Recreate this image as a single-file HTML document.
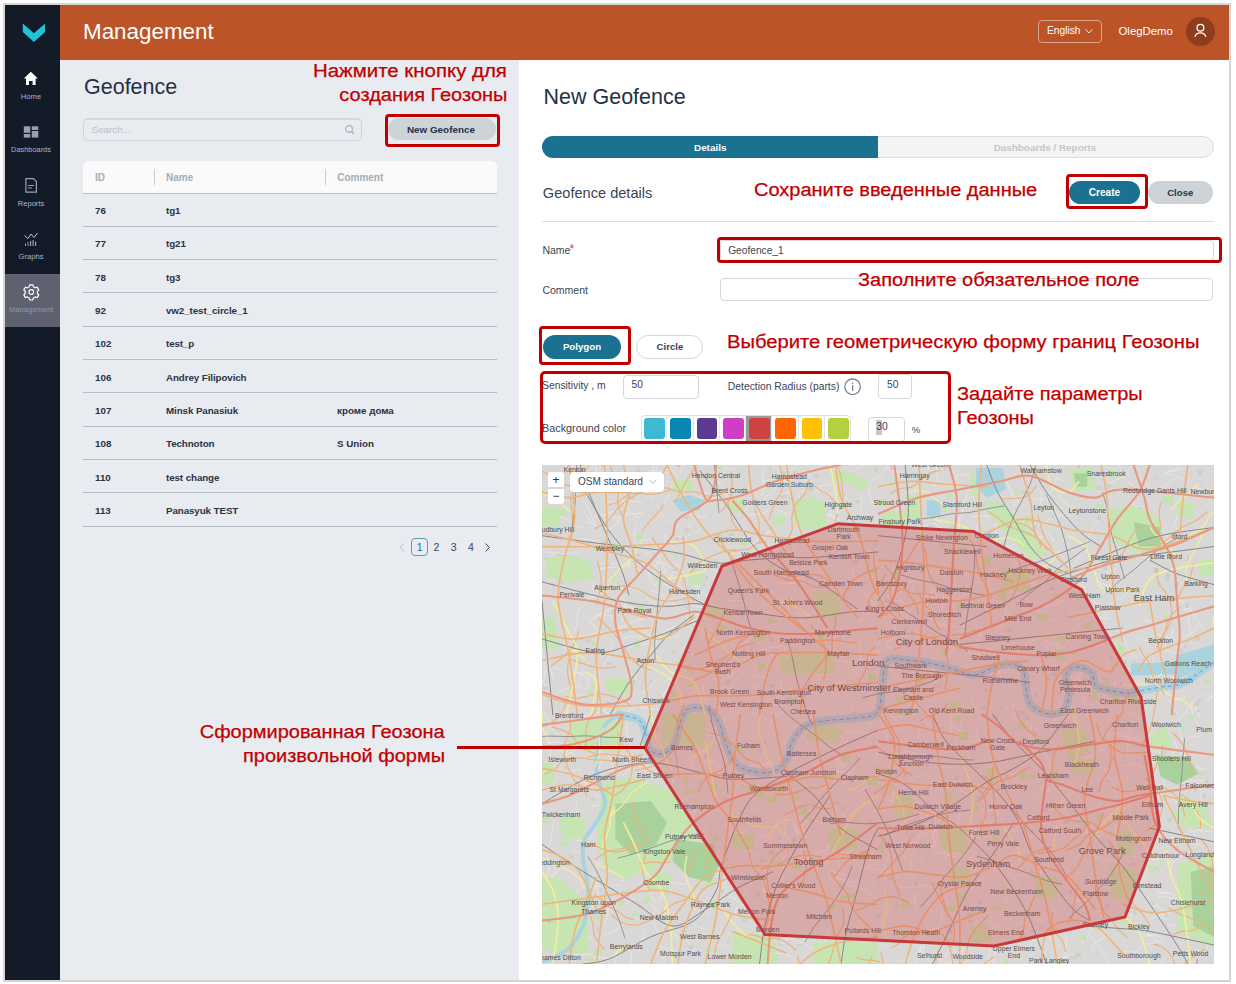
<!DOCTYPE html>
<html><head><meta charset="utf-8">
<style>
*{margin:0;padding:0;box-sizing:border-box}
html,body{width:1236px;height:984px;overflow:hidden;background:#fff;font-family:"Liberation Sans",sans-serif}
.a{position:absolute;white-space:nowrap}
[style*="c00000;font-weight:normal"]{-webkit-text-stroke:0.25px #c00000}
.sx{transform:scaleX(1.11);transform-origin:0 0}
.sxr{transform:scaleX(1.11);transform-origin:100% 0}
</style></head><body>
<div class="a" style="left:3.0px;top:3.0px;width:1228.0px;height:979.0px;border:2px solid #d5d5d5"></div>
<div class="a" style="left:5.0px;top:5.0px;width:55.0px;height:975.0px;background:#131a28"></div>
<div class="a" style="left:60.0px;top:5.0px;width:1169.0px;height:55.0px;background:#bc5428"></div>
<div class="a" style="left:60.0px;top:60.0px;width:459.0px;height:920.0px;background:#e8ecf0"></div>
<div class="a" style="left:519.0px;top:60.0px;width:710.0px;height:920.0px;background:#fff"></div>
<svg class="a" style="left:0;top:0" width="60" height="60"><polygon points="22.8,23.6 33.9,33.3 45.1,23.6 45.1,32.1 33.9,41.9 22.8,32.1" fill="#1dc6d6"/></svg>
<div class="a" style="left:5.0px;top:274.0px;width:55.0px;height:53.0px;background:#5f6170"></div>
<svg class="a" style="left:0;top:60px" width="60" height="270">
<path d="M30.8,11.8 L37.8,18.6 L35.6,18.6 L35.6,25 L32.6,25 L32.6,21 L29,21 L29,25 L26,25 L26,18.6 L23.8,18.6 Z" fill="#fff"/>
<g fill="#9c9eae"><rect x="23.8" y="66.3" width="6.5" height="6.5"/><rect x="31.8" y="66.3" width="6.5" height="3.7"/><rect x="23.8" y="74" width="6.5" height="3.6"/><rect x="31.8" y="71" width="6.5" height="6.6"/></g>
<g fill="none" stroke="#9c9eae" stroke-width="1.2"><path d="M25.9,118.7 L33.5,118.7 L36.4,121.6 L36.4,132.2 L25.9,132.2 Z"/><path d="M28,125.5 H34 M28,128 H32"/></g>
<g fill="none" stroke="#c0c4d0" stroke-width="1"><path d="M24.5,175.5 L28,178.5 L31,174 L34,177.5 L37.5,173"/></g>
<g fill="#9c9eae"><rect x="25" y="183.5" width="1" height="2.5"/><rect x="27.5" y="182" width="1" height="4"/><rect x="30" y="181" width="1.2" height="5"/><rect x="32.5" y="180" width="1.2" height="6"/><rect x="35" y="181.5" width="1.2" height="4.5"/></g>
<g transform="translate(31.3,232)"><path d="M-1.5,-7.2 h3 l0.6,2 a5.5,5.5 0 0 1 1.9,1.1 l2,-0.6 l1.5,2.6 l-1.5,1.4 a5.5,5.5 0 0 1 0,2.2 l1.5,1.4 l-1.5,2.6 l-2,-0.6 a5.5,5.5 0 0 1 -1.9,1.1 l-0.6,2 h-3 l-0.6,-2 a5.5,5.5 0 0 1 -1.9,-1.1 l-2,0.6 l-1.5,-2.6 l1.5,-1.4 a5.5,5.5 0 0 1 0,-2.2 l-1.5,-1.4 l1.5,-2.6 l2,0.6 a5.5,5.5 0 0 1 1.9,-1.1 Z" fill="none" stroke="#fff" stroke-width="1.2"/><circle r="2.3" fill="none" stroke="#fff" stroke-width="1.2"/></g>
</svg>
<div class="a" style="left:-19.0px;width:100px;text-align:center;top:92.5px;font-size:7.6px;line-height:7.6px;color:#a9b9c9;font-weight:normal;">Home</div>
<div class="a" style="left:-19.0px;width:100px;text-align:center;top:146.1px;font-size:7.4px;line-height:7.4px;color:#a9b9c9;font-weight:normal;">Dashboards</div>
<div class="a" style="left:-19.0px;width:100px;text-align:center;top:199.6px;font-size:7.6px;line-height:7.6px;color:#a9b9c9;font-weight:normal;">Reports</div>
<div class="a" style="left:-19.0px;width:100px;text-align:center;top:252.7px;font-size:7.6px;line-height:7.6px;color:#a9b9c9;font-weight:normal;">Graphs</div>
<div class="a" style="left:-18.8px;width:100px;text-align:center;top:306.4px;font-size:7.6px;line-height:7.6px;color:#8b9aa9;font-weight:normal;">Management</div>
<div class="a" style="left:83.0px;top:20.5px;font-size:22.4px;line-height:22.4px;color:#fff;font-weight:normal;">Management</div>
<div class="a" style="left:1038.0px;top:20.0px;width:64.0px;height:23.0px;border:1px solid #dca58c;border-radius:4px"></div>
<div class="a" style="left:1047.0px;top:26.3px;font-size:10.2px;line-height:10.2px;color:#fff;font-weight:normal;">English</div>
<svg class="a" style="left:1084px;top:28px" width="10" height="7"><path d="M1.5,1.3 L5,5 L8.5,1.3" fill="none" stroke="#f4ddd2" stroke-width="1"/></svg>
<div class="a" style="left:1118.5px;top:25.7px;font-size:11.4px;line-height:11.4px;color:#fff;font-weight:normal;">OlegDemo</div>
<div class="a" style="left:1186.0px;top:17.3px;width:28.6px;height:28.6px;border-radius:50%;background:#8e3d1d"></div>
<svg class="a" style="left:1186px;top:17px" width="29" height="29"><circle cx="14.4" cy="10.8" r="3.4" fill="none" stroke="#fff" stroke-width="1.3"/><path d="M8.8,19.8 A6,6 0 0 1 20,19.8" fill="none" stroke="#fff" stroke-width="1.3"/></svg>
<div class="a" style="left:84.0px;top:76.6px;font-size:21.5px;line-height:21.5px;color:#262f45;font-weight:normal;">Geofence</div>
<div class="a" style="right:728.7px;top:61.5px;font-size:18px;line-height:18px;color:#c00000;font-weight:normal;transform:scaleX(1.135);transform-origin:100% 0">Нажмите кнопку для</div>
<div class="a" style="right:728.7px;top:86.2px;font-size:18px;line-height:18px;color:#c00000;font-weight:normal;transform:scaleX(1.11);transform-origin:100% 0">создания Геозоны</div>
<div class="a" style="left:83.0px;top:117.8px;width:279.3px;height:22.8px;border:1px solid #ced4d9;border-top:2px solid #d3d8dd;border-radius:5px"></div>
<div class="a" style="left:91.6px;top:124.7px;font-size:9.8px;line-height:9.8px;color:#b9c1c8;font-weight:normal;">Search...</div>
<svg class="a" style="left:343px;top:123px" width="14" height="13"><circle cx="6" cy="6" r="3.4" fill="none" stroke="#aab2ba" stroke-width="1.2"/><path d="M8.5,8.5 L11,11" stroke="#aab2ba" stroke-width="1.4"/></svg>
<div class="a" style="left:388.4px;top:117.7px;width:107.6px;height:22.7px;background:#cdd3d7;border-radius:12px"></div>
<div class="a" style="left:406.9px;top:125.0px;font-size:9.9px;line-height:9.9px;color:#262f45;font-weight:bold;">New Geofence</div>
<div class="a" style="left:385.3px;top:114.3px;width:114.6px;height:32.6px;border:3px solid #c00000;border-radius:4px"></div>
<div class="a" style="left:83.0px;top:160.6px;width:413.5px;height:33.4px;background:#fafafa;border-radius:6px 6px 0 0;border-bottom:1px solid #b3bec6"></div>
<div class="a" style="left:95.0px;top:172.5px;font-size:10px;line-height:10px;color:#a3adb7;font-weight:bold;">ID</div>
<div class="a" style="left:166.0px;top:172.5px;font-size:10px;line-height:10px;color:#a3adb7;font-weight:bold;">Name</div>
<div class="a" style="left:337.2px;top:172.5px;font-size:10px;line-height:10px;color:#a3adb7;font-weight:bold;">Comment</div>
<div class="a" style="left:154.2px;top:169.4px;width:1.2px;height:15.2px;background:#c6ced4"></div>
<div class="a" style="left:325.0px;top:169.4px;width:1.2px;height:15.2px;background:#c6ced4"></div>
<div class="a" style="left:83.0px;top:226.0px;width:413.5px;height:1.0px;background:#b3bec6"></div>
<div class="a" style="left:95.0px;top:205.9px;font-size:9.8px;line-height:9.8px;color:#2b3345;font-weight:bold;">76</div>
<div class="a" style="left:166.0px;top:205.9px;font-size:9.8px;line-height:9.8px;color:#2b3345;font-weight:bold;letter-spacing:-0.1px">tg1</div>
<div class="a" style="left:83.0px;top:259.0px;width:413.5px;height:1.0px;background:#b3bec6"></div>
<div class="a" style="left:95.0px;top:239.2px;font-size:9.8px;line-height:9.8px;color:#2b3345;font-weight:bold;">77</div>
<div class="a" style="left:166.0px;top:239.2px;font-size:9.8px;line-height:9.8px;color:#2b3345;font-weight:bold;letter-spacing:-0.1px">tg21</div>
<div class="a" style="left:83.0px;top:292.0px;width:413.5px;height:1.0px;background:#b3bec6"></div>
<div class="a" style="left:95.0px;top:272.5px;font-size:9.8px;line-height:9.8px;color:#2b3345;font-weight:bold;">78</div>
<div class="a" style="left:166.0px;top:272.5px;font-size:9.8px;line-height:9.8px;color:#2b3345;font-weight:bold;letter-spacing:-0.1px">tg3</div>
<div class="a" style="left:83.0px;top:326.0px;width:413.5px;height:1.0px;background:#b3bec6"></div>
<div class="a" style="left:95.0px;top:305.9px;font-size:9.8px;line-height:9.8px;color:#2b3345;font-weight:bold;">92</div>
<div class="a" style="left:166.0px;top:305.9px;font-size:9.8px;line-height:9.8px;color:#2b3345;font-weight:bold;letter-spacing:-0.1px">vw2_test_circle_1</div>
<div class="a" style="left:83.0px;top:359.0px;width:413.5px;height:1.0px;background:#b3bec6"></div>
<div class="a" style="left:95.0px;top:339.2px;font-size:9.8px;line-height:9.8px;color:#2b3345;font-weight:bold;">102</div>
<div class="a" style="left:166.0px;top:339.2px;font-size:9.8px;line-height:9.8px;color:#2b3345;font-weight:bold;letter-spacing:-0.1px">test_p</div>
<div class="a" style="left:83.0px;top:392.0px;width:413.5px;height:1.0px;background:#b3bec6"></div>
<div class="a" style="left:95.0px;top:372.5px;font-size:9.8px;line-height:9.8px;color:#2b3345;font-weight:bold;">106</div>
<div class="a" style="left:166.0px;top:372.5px;font-size:9.8px;line-height:9.8px;color:#2b3345;font-weight:bold;letter-spacing:-0.1px">Andrey Filipovich</div>
<div class="a" style="left:83.0px;top:426.0px;width:413.5px;height:1.0px;background:#b3bec6"></div>
<div class="a" style="left:95.0px;top:405.8px;font-size:9.8px;line-height:9.8px;color:#2b3345;font-weight:bold;">107</div>
<div class="a" style="left:166.0px;top:405.8px;font-size:9.8px;line-height:9.8px;color:#2b3345;font-weight:bold;letter-spacing:-0.1px">Minsk Panasiuk</div>
<div class="a" style="left:337.0px;top:405.8px;font-size:9.8px;line-height:9.8px;color:#2b3345;font-weight:bold;">кроме дома</div>
<div class="a" style="left:83.0px;top:459.0px;width:413.5px;height:1.0px;background:#b3bec6"></div>
<div class="a" style="left:95.0px;top:439.2px;font-size:9.8px;line-height:9.8px;color:#2b3345;font-weight:bold;">108</div>
<div class="a" style="left:166.0px;top:439.2px;font-size:9.8px;line-height:9.8px;color:#2b3345;font-weight:bold;letter-spacing:-0.1px">Technoton</div>
<div class="a" style="left:337.0px;top:439.2px;font-size:9.8px;line-height:9.8px;color:#2b3345;font-weight:bold;">S Union</div>
<div class="a" style="left:83.0px;top:492.0px;width:413.5px;height:1.0px;background:#b3bec6"></div>
<div class="a" style="left:95.0px;top:472.5px;font-size:9.8px;line-height:9.8px;color:#2b3345;font-weight:bold;">110</div>
<div class="a" style="left:166.0px;top:472.5px;font-size:9.8px;line-height:9.8px;color:#2b3345;font-weight:bold;letter-spacing:-0.1px">test change</div>
<div class="a" style="left:83.0px;top:526.0px;width:413.5px;height:1.0px;background:#b3bec6"></div>
<div class="a" style="left:95.0px;top:505.8px;font-size:9.8px;line-height:9.8px;color:#2b3345;font-weight:bold;">113</div>
<div class="a" style="left:166.0px;top:505.8px;font-size:9.8px;line-height:9.8px;color:#2b3345;font-weight:bold;letter-spacing:-0.1px">Panasyuk TEST</div>
<svg class="a" style="left:398px;top:543px" width="8" height="9"><path d="M6,0.6 L2,4.5 L6,8.4" fill="none" stroke="#b7bfc7" stroke-width="1"/></svg>
<div class="a" style="left:411.2px;top:538.2px;width:16.9px;height:17.4px;border:1.3px solid #5f9db3;border-radius:4px"></div>
<div class="a" style="left:369.6px;width:100px;text-align:center;top:541.6px;font-size:10.5px;line-height:10.5px;color:#1b7190;font-weight:normal;">1</div>
<div class="a" style="left:386.5px;width:100px;text-align:center;top:541.6px;font-size:10.5px;line-height:10.5px;color:#3a4455;font-weight:normal;">2</div>
<div class="a" style="left:403.6px;width:100px;text-align:center;top:541.6px;font-size:10.5px;line-height:10.5px;color:#3a4455;font-weight:normal;">3</div>
<div class="a" style="left:420.8px;width:100px;text-align:center;top:541.6px;font-size:10.5px;line-height:10.5px;color:#3a4455;font-weight:normal;">4</div>
<svg class="a" style="left:484px;top:543px" width="8" height="9"><path d="M1.5,0.6 L5.5,4.5 L1.5,8.4" fill="none" stroke="#3a4455" stroke-width="1"/></svg>
<div class="a" style="right:791.0px;top:723.1px;font-size:18px;line-height:18px;color:#c00000;font-weight:normal;transform:scaleX(1.11);transform-origin:100% 0">Сформированная Геозона</div>
<div class="a" style="right:791.0px;top:747.1px;font-size:18px;line-height:18px;color:#c00000;font-weight:normal;transform:scaleX(1.11);transform-origin:100% 0">произвольной формы</div>
<div class="a" style="left:543.5px;top:87.2px;font-size:21.5px;line-height:21.5px;color:#262f45;font-weight:normal;">New Geofence</div>
<div class="a" style="left:542.0px;top:135.5px;width:671.5px;height:22.8px;background:#f4f4f4;border:1px solid #d9dde0;border-radius:12px"></div>
<div class="a" style="left:542.0px;top:135.5px;width:336.0px;height:22.8px;background:#1b7190;border-radius:12px 0 0 12px"></div>
<div class="a" style="left:694.0px;top:142.6px;font-size:9.9px;line-height:9.9px;color:#fff;font-weight:bold;">Details</div>
<div class="a" style="left:993.7px;top:142.6px;font-size:9.9px;line-height:9.9px;color:#c3c7cb;font-weight:bold;">Dashboards / Reports</div>
<div class="a" style="left:542.8px;top:185.8px;font-size:14.6px;line-height:14.6px;color:#3a4455;font-weight:normal;">Geofence details</div>
<div class="a" style="left:753.6px;top:180.6px;font-size:18px;line-height:18px;color:#c00000;font-weight:normal;transform:scaleX(1.11);transform-origin:0 0">Сохраните введенные данные</div>
<div class="a" style="left:1068.8px;top:181.4px;width:71.7px;height:22.5px;background:#1b7190;border-radius:12px"></div>
<div class="a" style="left:1088.7px;top:188.3px;font-size:10.1px;line-height:10.1px;color:#fff;font-weight:bold;">Create</div>
<div class="a" style="left:1148.0px;top:181.4px;width:65.4px;height:22.5px;background:#cdd3d7;border-radius:12px"></div>
<div class="a" style="left:1167.2px;top:187.7px;font-size:9.6px;line-height:9.6px;color:#2a3346;font-weight:bold;">Close</div>
<div class="a" style="left:1066.2px;top:174.1px;width:81.6px;height:35.4px;border:3px solid #c00000;border-radius:4px"></div>
<div class="a" style="left:542.0px;top:220.5px;width:671.5px;height:1.2px;background:#dadee1"></div>
<div class="a" style="left:542.4px;top:245.3px;font-size:10.5px;line-height:10.5px;color:#3a4455;font-weight:normal;">Name</div>
<div class="a" style="left:569.5px;top:243.3px;font-size:12px;line-height:12px;color:#e04040;font-weight:normal;">*</div>
<div class="a" style="left:720.0px;top:239.5px;width:493.5px;height:21.5px;border:1px solid #d3d7db;border-radius:4px"></div>
<div class="a" style="left:728.2px;top:245.9px;font-size:10.2px;line-height:10.2px;color:#3a4455;font-weight:normal;">Geofence_1</div>
<div class="a" style="left:717.1px;top:236.7px;width:504.9px;height:26.5px;border:3px solid #c00000;border-radius:4px"></div>
<div class="a" style="left:542.4px;top:285.3px;font-size:10.5px;line-height:10.5px;color:#3a4455;font-weight:normal;">Comment</div>
<div class="a" style="left:720.1px;top:278.4px;width:493.4px;height:22.4px;border:1px solid #d3d7db;border-radius:4px"></div>
<div class="a" style="left:857.7px;top:271.1px;font-size:18px;line-height:18px;color:#c00000;font-weight:normal;transform:scaleX(1.11);transform-origin:0 0">Заполните обязательное поле</div>
<div class="a" style="left:542.6px;top:335.3px;width:78.6px;height:23.3px;background:#1b7190;border-radius:12px"></div>
<div class="a" style="left:562.9px;top:342.1px;font-size:9.7px;line-height:9.7px;color:#fff;font-weight:bold;">Polygon</div>
<div class="a" style="left:539.2px;top:326.1px;width:92.2px;height:39.3px;border:3px solid #c00000;border-radius:4px"></div>
<div class="a" style="left:635.5px;top:335.0px;width:67.2px;height:23.6px;background:#fff;border:1px solid #d3d7db;border-radius:12px"></div>
<div class="a" style="left:656.6px;top:342.1px;font-size:9.6px;line-height:9.6px;color:#3a4455;font-weight:bold;">Circle</div>
<div class="a" style="left:726.6px;top:333.0px;font-size:18px;line-height:18px;color:#c00000;font-weight:normal;transform:scaleX(1.122);transform-origin:0 0">Выберите геометрическую форму границ Геозоны</div>
<div class="a" style="left:542.1px;top:381.4px;font-size:10.3px;line-height:10.3px;color:#3a4455;font-weight:normal;">Sensitivity , m</div>
<div class="a" style="left:622.6px;top:374.5px;width:76.0px;height:24.7px;border:1px solid #d3d7db;border-radius:4px"></div>
<div class="a" style="left:631.5px;top:380.2px;font-size:10.3px;line-height:10.3px;color:#3a4455;font-weight:normal;">50</div>
<div class="a" style="left:727.8px;top:382.1px;font-size:10.35px;line-height:10.35px;color:#3a4455;font-weight:normal;">Detection Radius (parts)</div>
<svg class="a" style="left:843px;top:377px" width="20" height="20"><circle cx="9.6" cy="9.8" r="7.8" fill="none" stroke="#7d8893" stroke-width="1.3"/><rect x="9" y="5.6" width="1.3" height="1.3" fill="#7d8893"/><rect x="9" y="8" width="1.3" height="6" fill="#7d8893"/></svg>
<div class="a" style="left:878.3px;top:374.4px;width:33.9px;height:24.6px;border:1px solid #d3d7db;border-radius:4px"></div>
<div class="a" style="left:887.0px;top:380.2px;font-size:10.3px;line-height:10.3px;color:#3a4455;font-weight:normal;">50</div>
<div class="a" style="left:542.1px;top:423.0px;font-size:10.8px;line-height:10.8px;color:#3a4455;font-weight:normal;">Background color</div>
<div class="a" style="left:640.5px;top:415.1px;width:210.0px;height:26.7px;border:1px solid #dde1e4;border-radius:4px"></div>
<div class="a" style="left:644.1px;top:418.1px;width:20.7px;height:21.0px;background:#3fb8d1;border-radius:3px"></div>
<div class="a" style="left:666.2px;top:415.5px;width:1.0px;height:26.0px;background:#e4e7ea"></div>
<div class="a" style="left:670.4px;top:418.1px;width:20.7px;height:21.0px;background:#0a86b3;border-radius:3px"></div>
<div class="a" style="left:692.5px;top:415.5px;width:1.0px;height:26.0px;background:#e4e7ea"></div>
<div class="a" style="left:696.6px;top:418.1px;width:20.7px;height:21.0px;background:#5d3a92;border-radius:3px"></div>
<div class="a" style="left:718.8px;top:415.5px;width:1.0px;height:26.0px;background:#e4e7ea"></div>
<div class="a" style="left:722.9px;top:418.1px;width:20.7px;height:21.0px;background:#d03ec6;border-radius:3px"></div>
<div class="a" style="left:745.0px;top:415.5px;width:1.0px;height:26.0px;background:#e4e7ea"></div>
<div class="a" style="left:745.5px;top:415.5px;width:26.2px;height:26.0px;background:#9a9a9a"></div>
<div class="a" style="left:749.1px;top:418.1px;width:20.7px;height:21.0px;background:#cf4242;border-radius:3px"></div>
<div class="a" style="left:771.2px;top:415.5px;width:1.0px;height:26.0px;background:#e4e7ea"></div>
<div class="a" style="left:775.4px;top:418.1px;width:20.7px;height:21.0px;background:#ff6501;border-radius:3px"></div>
<div class="a" style="left:797.5px;top:415.5px;width:1.0px;height:26.0px;background:#e4e7ea"></div>
<div class="a" style="left:801.6px;top:418.1px;width:20.7px;height:21.0px;background:#ffc001;border-radius:3px"></div>
<div class="a" style="left:823.8px;top:415.5px;width:1.0px;height:26.0px;background:#e4e7ea"></div>
<div class="a" style="left:827.9px;top:418.1px;width:20.7px;height:21.0px;background:#b4d041;border-radius:3px"></div>
<div class="a" style="left:867.6px;top:416.5px;width:37.8px;height:25.3px;border:1px solid #d3d7db;border-radius:4px"></div>
<div class="a" style="left:875.9px;top:420.0px;width:5.8px;height:15.0px;background:#c8c8c8"></div>
<div class="a" style="left:876.3px;top:422.4px;font-size:10.3px;line-height:10.3px;color:#3a4455;font-weight:normal;">30</div>
<div class="a" style="left:911.8px;top:424.9px;font-size:9.5px;line-height:9.5px;color:#3a4455;font-weight:normal;">%</div>
<div class="a" style="left:539.6px;top:370.7px;width:411.1px;height:73.2px;border:3px solid #c00000;border-radius:5px"></div>
<div class="a" style="left:957.2px;top:384.7px;font-size:18px;line-height:18px;color:#c00000;font-weight:normal;transform:scaleX(1.11);transform-origin:0 0">Задайте параметры</div>
<div class="a" style="left:957.2px;top:409.3px;font-size:18px;line-height:18px;color:#c00000;font-weight:normal;transform:scaleX(1.11);transform-origin:0 0">Геозоны</div>
<svg class="a" style="left:542px;top:465px" width="672" height="499" viewBox="0 0 672 499">
<rect width="672" height="499" fill="#d9d8d6"/>
<path d="" stroke="#f2f2f2" stroke-width="0.7" fill="none" opacity="0.8"/>
<path d="M303.0,280.5 L305.5,273.7 L309.9,267.9 L314.2,262.0M414.9,86.6 L419.0,91.6 L422.1,97.4 L427.5,101.1M669.7,490.7 L665.5,483.1 L663.9,474.5 L658.9,467.4 L651.3,463.3M598.7,301.2 L592.3,299.5 L585.6,299.5 L579.1,300.8M-6.8,34.1 L-1.1,37.0 L3.2,41.7 L6.5,47.2 L10.8,51.9M148.9,140.0 L156.4,142.2 L164.2,142.8M36.2,-1.2 L35.5,3.7 L34.8,8.7 L32.0,12.8 L29.6,17.2M40.5,316.7 L46.4,319.0 L50.7,323.8 L53.5,329.4 L58.3,333.6M160.5,42.4 L153.2,41.7 L146.1,43.3M342.1,501.4 L337.4,506.6 L330.7,509.0M-9.7,438.6 L-6.2,433.0 L-3.4,427.2 L1.3,422.7 L6.6,418.8M59.4,503.4 L66.5,504.7 L72.9,508.1M257.2,28.6 L256.8,36.5 L257.3,44.3M303.6,487.8 L310.4,494.0 L316.3,500.9 L323.5,506.7M148.0,306.8 L150.2,301.3 L150.6,295.3 L153.6,290.2 L158.2,286.5M407.6,208.7 L402.2,209.7 L396.6,209.3M261.0,208.4 L254.7,204.5 L250.8,198.1 L244.9,193.5 L238.9,189.1M442.2,309.6 L446.6,305.0 L448.3,298.8M176.3,221.3 L175.1,226.4 L171.7,230.4M53.8,61.8 L50.0,52.7 L46.9,43.3 L40.8,35.5M14.3,-0.7 L20.7,-6.3 L27.8,-11.0 L34.8,-15.7M495.5,155.5 L490.9,152.8 L487.6,148.5M500.1,355.2 L500.0,348.5 L502.4,342.1 L504.3,335.6M537.0,438.1 L533.9,434.2 L529.2,432.2 L524.2,432.3 L519.5,434.4M70.0,123.5 L62.3,127.4 L54.3,130.6 L46.5,134.4M570.2,33.5 L565.9,30.5 L561.1,28.8 L556.7,26.1 L552.3,23.4M415.2,467.7 L411.7,476.5 L407.2,484.9 L402.5,493.1M511.6,167.8 L512.7,175.2 L515.6,182.1 L517.6,189.3M546.2,381.7 L538.7,387.3 L532.3,394.2M84.2,247.7 L91.6,243.3 L97.1,236.7M301.8,132.8 L295.0,138.8 L287.1,143.6M485.7,426.9 L492.9,427.0 L499.7,429.6 L506.9,429.0 L514.1,429.9M384.8,150.4 L388.4,154.1 L393.2,155.7 L397.2,158.9 L401.9,160.9M87.5,14.4 L91.7,18.0 L95.3,22.3 L99.5,26.0 L104.8,27.7M127.1,417.6 L132.9,417.8 L138.6,419.3 L144.5,418.9M178.5,169.4 L169.9,164.8 L160.3,163.3 L151.8,158.6 L144.4,152.2M145.0,203.0 L139.3,207.0 L132.5,208.6 L127.3,213.2 L121.9,217.5M441.7,250.9 L435.8,246.4 L431.2,240.8 L428.5,234.0M434.0,362.5 L431.2,368.0 L429.5,374.0M665.9,473.8 L670.6,465.5 L671.5,456.0 L671.8,446.5M370.8,388.7 L369.2,398.2 L368.3,407.7 L371.7,416.7M358.9,346.3 L365.7,349.2 L372.4,352.1M459.1,218.4 L458.1,210.6 L456.6,202.9 L455.6,195.0M565.2,281.4 L569.7,275.4 L573.1,268.5M253.8,428.7 L259.2,425.9 L264.6,423.3 L270.3,421.1 L275.0,417.3M360.8,251.1 L354.1,252.6 L347.4,251.3 L340.7,249.6 L335.6,245.0M74.4,38.4 L69.1,37.6 L64.7,34.5M629.0,129.7 L622.9,134.0 L615.5,135.3 L608.3,133.4M353.3,46.4 L358.7,40.3 L365.5,36.0 L369.6,29.0M124.3,107.9 L121.7,102.1 L119.0,96.2 L116.4,90.4 L114.2,84.4M579.5,313.6 L573.6,312.9 L567.6,312.8 L561.6,313.4 L555.7,313.7M100.5,96.0 L104.1,102.8 L107.4,109.7 L110.0,116.9 L115.1,122.7M623.1,315.9 L620.9,325.1 L615.1,332.7 L611.7,341.6M680.9,450.6 L689.5,454.5 L698.5,457.4M290.9,478.5 L297.8,484.2 L303.5,491.1 L311.7,494.6 L320.6,495.4M462.2,463.0 L456.9,461.4 L451.5,459.8 L446.6,457.2M120.8,26.6 L121.7,21.6 L124.6,17.3M323.0,88.4 L328.3,85.4 L334.3,84.9M55.9,22.1 L55.3,14.9 L54.5,7.6 L53.7,0.3 L52.5,-6.9M405.8,-3.1 L407.9,1.7 L410.6,6.1 L413.8,10.2 L415.2,15.2M408.6,39.2 L412.8,44.3 L414.9,50.6M618.8,477.6 L611.9,473.8 L606.4,467.9 L599.6,463.6 L595.2,457.0M505.1,393.8 L502.2,398.6 L500.0,403.8 L498.1,409.2M115.6,97.3 L112.9,101.9 L112.6,107.3M236.1,321.5 L233.1,325.8 L231.1,330.6 L230.4,335.8 L230.3,341.1M115.9,29.9 L111.3,21.0 L109.2,11.2 L111.8,1.6 L109.7,-8.2M415.9,373.4 L408.9,371.4 L402.4,368.3 L395.2,368.7M168.9,133.1 L162.2,129.3 L155.7,125.0 L152.0,118.2M431.5,410.1 L431.0,402.4 L429.7,394.8M639.5,190.3 L630.8,187.0 L621.9,184.4M332.2,137.6 L328.3,144.6 L323.4,150.9 L318.1,156.8M186.2,361.9 L187.3,356.9 L189.1,352.1 L190.5,347.1M463.6,17.4 L469.6,23.7 L472.4,32.0 L478.3,38.4M616.6,212.9 L614.1,207.2 L609.5,203.0 L606.4,197.5M619.4,64.9 L624.7,70.9 L630.2,76.7M130.9,17.0 L128.9,22.4 L127.4,28.0 L125.3,33.4 L122.5,38.4M461.9,178.9 L468.9,182.1 L474.9,186.9 L481.9,189.9 L489.6,190.1M607.7,397.1 L605.3,406.0 L601.0,414.1 L595.1,421.2 L591.7,429.8M182.8,114.3 L176.9,109.7 L171.8,104.1M424.9,-5.1 L418.2,-7.7 L411.7,-10.6 L404.6,-10.5M49.8,341.0 L55.9,340.2 L61.9,338.4 L67.4,335.8 L73.0,333.1M82.3,441.3 L87.4,436.2 L93.7,432.7M297.5,377.9 L290.4,383.5 L281.5,385.1 L273.0,388.3M369.6,377.2 L367.2,383.9 L362.5,389.3M44.3,33.1 L47.2,25.8 L52.2,19.8 L53.8,12.1 L53.9,4.2M620.2,303.3 L620.4,296.8 L619.2,290.4 L615.9,284.8 L611.8,279.7M492.4,180.2 L486.0,182.0 L479.5,181.1M465.4,134.9 L464.0,143.8 L463.5,152.8 L459.2,160.7 L452.2,166.4M161.8,177.7 L159.9,173.0 L159.5,167.9 L160.3,162.8M244.8,192.5 L235.7,191.9 L227.0,188.9M599.6,136.1 L605.7,136.2 L611.7,135.1M5.5,426.8 L1.0,423.9 L-4.2,423.0 L-9.4,424.4M500.0,456.6 L495.7,453.9 L492.4,450.0M282.1,359.6 L273.9,356.2 L265.5,353.7 L256.7,352.5M660.0,339.0 L659.4,331.6 L659.6,324.1 L656.6,317.3M513.9,501.6 L519.7,494.4 L527.9,489.9 L537.1,489.6M433.1,261.9 L435.3,266.4 L435.5,271.5 L437.0,276.3 L440.0,280.4M429.5,345.0 L424.9,348.8 L419.0,350.1 L414.2,353.7M203.4,49.6 L209.2,49.0 L214.9,49.9 L220.4,48.1 L225.8,46.2M543.9,152.2 L546.6,157.5 L548.0,163.2M401.6,106.2 L392.3,108.1 L383.1,106.0M423.7,478.9 L420.5,485.5 L414.8,490.3 L410.0,496.0 L405.0,501.3M652.3,240.5 L656.0,246.4 L657.9,253.1M665.4,402.5 L671.7,408.8 L675.1,417.1 L675.3,426.0M616.4,223.6 L608.3,220.9 L599.7,221.0M212.7,124.6 L213.1,119.0 L213.5,113.4 L211.5,108.1 L209.8,102.7M113.4,96.0 L122.1,98.6 L130.1,103.0M57.2,239.2 L57.4,233.8 L57.6,228.4 L55.3,223.5M119.9,90.2 L120.9,84.8 L122.2,79.5 L123.5,74.3 L123.1,68.8M565.8,151.6 L561.1,146.3 L557.4,140.4 L551.6,136.5M41.4,62.9 L34.7,61.4 L28.7,57.7 L23.4,53.2 L16.6,51.7M251.0,358.5 L254.6,363.9 L256.0,370.2M574.4,363.3 L572.5,357.8 L572.0,352.1 L574.1,346.7 L577.5,342.1M374.5,35.1 L372.8,29.4 L373.7,23.4M379.5,365.6 L376.4,372.2 L372.6,378.4 L371.3,385.5M426.2,83.0 L430.4,77.4 L432.0,70.6M146.8,71.5 L146.6,64.4 L148.7,57.5M631.4,62.2 L634.3,53.8 L635.7,45.1M275.2,-2.0 L269.9,4.1 L266.4,11.3 L259.8,16.1M356.7,125.3 L351.0,121.8 L344.9,119.0M342.5,399.3 L344.9,406.9 L344.2,415.0M369.4,173.0 L361.9,171.8 L355.7,167.5 L352.2,160.8 L350.2,153.5M637.6,284.5 L643.2,290.4 L650.0,294.8M388.9,351.8 L391.7,347.1 L396.0,343.8 L400.2,340.2M495.0,113.8 L488.0,110.6 L480.5,109.0 L474.2,104.5 L470.7,97.7M555.7,302.2 L565.2,304.2 L574.8,304.9M514.8,178.4 L508.9,179.2 L504.0,182.5M114.6,502.3 L116.7,497.0 L120.8,493.0 L125.3,489.5 L130.2,486.6M518.2,72.3 L523.4,77.5 L528.2,83.0 L534.6,86.7M349.7,126.8 L357.5,132.4 L364.0,139.7 L368.1,148.4 L373.1,156.7M334.3,43.2 L330.3,37.4 L327.9,30.8 L327.2,23.7M326.2,506.2 L319.5,508.6 L312.5,508.2 L305.5,507.7 L298.5,506.9M289.1,459.3 L285.3,468.1 L282.2,477.1 L280.2,486.4M212.8,399.8 L209.9,408.7 L209.4,418.1 L205.6,426.7 L198.3,432.5M319.2,44.7 L318.1,37.0 L319.8,29.5M681.5,369.3 L675.1,366.9 L668.2,366.8 L661.5,365.7 L654.7,365.1M74.9,27.2 L81.0,33.8 L83.7,42.3 L90.2,48.5 L98.0,52.9M197.1,158.6 L190.2,160.6 L184.4,164.9M469.1,109.8 L472.5,106.0 L476.0,102.1 L480.7,100.1M666.3,235.3 L670.9,231.4 L673.4,226.0M208.6,435.9 L206.0,431.5 L203.8,427.0 L201.6,422.4M153.5,482.8 L148.3,489.2 L140.9,492.8M179.5,208.2 L186.2,208.2 L192.9,207.7M107.2,437.1 L112.4,443.9 L119.2,449.1M449.9,400.3 L441.1,402.3 L432.3,404.3 L423.6,402.0M609.7,83.7 L604.0,80.8 L600.3,75.6M294.7,264.2 L304.2,265.4 L313.6,267.0 L323.1,267.9 L332.5,269.4M103.8,503.0 L102.4,509.0 L102.9,515.2M610.7,502.6 L618.1,499.2 L622.9,492.6M607.0,21.3 L601.4,15.8 L596.7,9.6M531.8,258.2 L529.6,249.3 L529.6,240.2 L530.0,231.1 L531.1,222.0M523.7,48.2 L517.5,48.8 L511.5,47.7 L506.0,44.9M153.3,243.9 L144.8,240.2 L135.6,239.1M661.7,17.3 L668.3,23.9 L677.3,26.6 L686.2,29.4M290.8,219.2 L299.9,217.5 L308.0,212.9 L316.6,209.5M391.0,364.8 L391.4,370.5 L392.9,376.1 L393.7,381.8 L394.4,387.4M173.2,295.5 L165.0,296.0 L157.1,298.5M333.8,332.0 L342.4,334.6 L351.2,336.0 L360.1,334.9 L368.5,338.0M19.1,244.1 L25.6,251.6 L30.0,260.5 L38.0,266.5 L47.1,270.3M605.9,63.5 L598.4,61.5 L592.6,56.3 L587.8,50.2M486.2,496.6 L485.7,502.7 L486.9,508.8 L488.3,514.8 L487.0,520.8M241.9,164.9 L244.7,170.3 L244.6,176.4 L243.1,182.3 L241.1,188.1M621.1,449.0 L614.2,451.4 L607.6,454.6M530.7,101.8 L534.1,96.6 L537.4,91.3 L540.1,85.7M401.0,384.2 L408.1,385.2 L414.5,388.6 L421.6,390.1M255.0,27.8 L261.3,26.5 L267.5,25.3 L273.9,25.7 L280.3,26.1M382.6,327.1 L380.4,333.0 L376.0,337.5M238.9,387.4 L241.9,396.1 L241.7,405.3 L242.1,414.5 L239.2,423.2M253.9,123.0 L250.4,130.6 L247.0,138.2 L246.0,146.5 L245.0,154.8M78.3,98.2 L71.2,98.9 L64.2,98.0 L57.1,98.9M492.0,335.7 L497.1,327.8 L501.7,319.6M84.6,258.2 L83.9,264.3 L85.0,270.4 L88.6,275.3M7.0,317.2 L8.5,312.4 L10.8,307.9 L11.0,302.8 L13.0,298.1M376.2,173.4 L380.7,164.7 L386.3,156.7M52.2,212.0 L45.2,209.3 L37.9,208.2 L30.9,205.6M143.4,470.3 L146.0,477.2 L150.2,483.2M54.4,167.4 L46.0,170.8 L37.0,171.0 L28.2,173.0M622.9,458.4 L629.4,460.4 L636.1,459.4M332.9,294.1 L336.5,286.2 L336.1,277.7 L334.3,269.3M248.3,144.3 L241.6,137.7 L233.9,132.2 L228.9,124.2 L220.9,119.3M479.4,102.4 L473.1,97.4 L466.3,92.9M181.1,420.6 L184.7,414.6 L185.8,407.8 L187.1,401.0M203.6,177.0 L207.0,181.7 L209.5,186.8M152.3,-9.5 L162.2,-8.8 L171.2,-4.8 L178.9,1.4 L188.5,4.0M559.8,448.9 L556.3,458.1 L549.5,465.2 L544.2,473.5 L537.2,480.5M471.2,346.3 L475.2,354.5 L479.2,362.7M380.2,181.8 L376.8,175.8 L374.3,169.5 L370.9,163.5M478.7,466.1 L484.3,466.0 L489.4,463.6 L494.9,462.3 L499.5,459.1M302.5,390.7 L298.4,387.5 L294.3,384.3 L289.7,381.8M265.0,373.8 L261.9,367.6 L260.2,360.8 L257.3,354.5 L253.4,348.7M515.4,427.4 L507.9,429.6 L500.2,431.0M565.1,405.8 L559.9,402.7 L555.4,398.8M663.9,234.9 L672.1,229.8 L681.2,226.3 L689.9,222.1 L699.2,219.1M264.5,474.4 L261.5,470.1 L256.9,467.6M187.9,369.5 L194.7,367.6 L201.7,368.3M108.5,25.0 L111.5,16.5 L113.5,7.7 L116.6,-0.8M519.6,499.1 L523.1,506.7 L523.6,515.1 L524.6,523.4M567.0,278.7 L560.3,285.2 L551.6,288.8 L543.9,294.2M383.6,132.1 L384.6,138.4 L386.5,144.5 L389.7,150.0M25.5,23.4 L33.7,22.3 L41.1,18.3 L49.2,16.5M676.2,202.0 L678.0,195.2 L676.6,188.2M371.0,330.9 L374.5,336.1 L379.2,340.3 L382.4,345.6 L385.2,351.2M641.0,14.4 L632.1,10.4 L622.6,8.6M6.6,278.4 L14.0,276.7 L21.3,278.5M-2.4,263.6 L-4.1,254.9 L-3.1,245.9M562.7,388.4 L553.3,386.3 L543.7,385.0M612.1,313.7 L614.1,321.3 L617.1,328.6M444.6,410.8 L437.5,414.7 L432.7,421.3 L426.9,427.0M401.2,127.3 L401.2,136.1 L400.8,144.7M460.7,82.0 L458.2,87.2 L458.3,93.0M266.6,17.1 L261.5,12.9 L255.4,10.4M599.3,156.5 L604.8,155.7 L610.0,157.4 L615.6,157.6 L621.1,157.2M478.6,82.3 L473.4,83.7 L468.1,83.1 L463.2,81.1M353.4,-4.8 L346.7,0.0 L341.7,6.5 L336.0,12.3 L328.5,15.5M582.6,316.3 L589.1,308.8 L597.1,303.1 L606.3,299.6 L615.2,295.4M313.3,424.2 L308.6,420.2 L304.0,416.2 L298.1,414.6 L292.3,412.4M299.2,298.0 L296.6,302.6 L294.9,307.6 L294.4,312.8 L293.3,318.0M120.3,233.4 L122.8,226.8 L128.1,222.2 L133.3,217.5 L137.1,211.7M571.4,326.9 L574.2,318.2 L580.8,311.9M34.9,441.6 L28.2,441.9 L21.8,444.1 L17.2,449.0 L13.0,454.2M328.4,489.1 L324.1,486.0 L319.7,482.8M157.3,405.2 L150.6,399.4 L145.9,391.9M95.0,179.9 L101.7,179.9 L108.1,178.1M189.6,205.9 L194.3,200.8 L200.6,197.9 L205.2,192.6 L211.6,190.1M133.1,316.6 L126.7,309.0 L119.5,302.3 L114.7,293.7 L111.7,284.3M574.5,480.9 L569.5,474.6 L562.6,470.6 L556.6,465.3 L550.4,460.2M79.3,50.2 L76.4,57.7 L70.3,62.9 L63.3,66.9M499.5,177.0 L505.5,183.5 L512.8,188.5 L520.7,192.5M414.0,134.9 L420.5,131.2 L427.7,128.8M152.7,290.6 L158.0,288.8 L162.1,285.0 L166.7,281.9M146.1,237.8 L138.9,233.0 L130.2,231.7M280.0,136.0 L277.8,144.0 L279.6,152.1 L280.4,160.3M0.5,184.5 L1.1,194.0 L3.3,203.2 L2.4,212.7 L-1.7,221.2M398.8,273.3 L398.5,280.6 L401.7,287.1M10.9,296.3 L17.5,295.0 L22.8,290.8 L28.6,287.4 L34.2,283.8M240.3,231.3 L233.9,227.6 L226.7,225.9 L219.5,227.7M536.6,214.9 L538.2,206.8 L536.2,198.8M309.9,198.3 L300.4,196.4 L290.9,194.6 L282.5,189.7 L274.2,184.8M56.4,402.4 L53.5,397.3 L51.9,391.7M165.4,411.0 L170.5,405.8 L173.6,399.0 L175.7,392.0 L176.9,384.7M565.9,447.8 L559.4,446.1 L552.7,447.0M536.1,146.5 L543.9,147.8 L551.3,150.3 L558.7,152.9 L566.4,154.0M234.1,117.6 L241.2,118.0 L248.2,118.1 L255.3,118.6 L262.4,118.8M578.7,44.2 L584.4,43.2 L590.0,41.7 L595.7,40.9 L601.3,42.1M656.9,204.5 L656.3,198.4 L657.2,192.3M250.6,142.7 L255.1,145.1 L258.1,149.3 L260.4,153.9 L261.0,159.0M21.9,206.0 L16.3,203.7 L10.5,201.9M609.8,95.7 L600.9,91.7 L594.4,84.5 L587.1,78.1 L578.6,73.2M501.6,124.0 L502.4,118.7 L504.0,113.5 L504.6,108.1M70.8,151.5 L65.6,150.3 L60.4,149.7 L55.1,150.5 L50.6,153.3M247.4,153.2 L237.7,151.7 L228.7,148.1 L219.2,145.6M400.6,44.5 L407.9,41.5 L415.6,39.2 L422.9,36.0 L429.4,31.4M411.6,295.9 L414.8,300.9 L418.7,305.3 L420.8,310.8M137.6,295.9 L134.7,303.6 L131.2,311.1 L130.9,319.3M264.5,106.9 L260.0,111.8 L254.3,115.2 L248.2,117.8M29.3,386.3 L36.1,387.4 L43.1,387.5M486.6,310.2 L477.9,310.2 L469.4,308.1 L460.7,306.7 L452.5,303.7M670.7,465.8 L675.2,469.6 L680.7,471.6M513.8,341.5 L520.4,338.5 L527.6,337.9M651.9,174.7 L648.6,166.8 L646.8,158.5 L646.3,149.9 L642.7,142.2M590.6,40.3 L592.0,32.8 L596.1,26.3 L599.9,19.6M11.7,214.2 L9.9,208.5 L7.8,202.8 L7.4,196.9M344.0,240.0 L347.7,247.9 L353.5,254.3 L360.3,259.8 L368.5,262.8M232.0,296.9 L223.8,298.7 L215.6,300.7 L207.2,300.5 L199.2,303.3M477.1,195.7 L479.9,203.7 L480.9,212.1M387.9,123.4 L389.9,132.2 L394.3,140.0M618.4,23.9 L626.5,18.2 L634.4,12.4M150.1,380.9 L142.2,383.7 L133.9,382.5M233.5,72.8 L234.7,79.4 L234.0,86.0 L231.4,92.2M57.6,396.9 L65.6,391.0 L72.5,383.9M102.9,88.7 L112.0,85.9 L120.6,82.0M648.1,362.9 L654.8,358.5 L659.3,351.8 L662.9,344.6M109.4,451.6 L111.6,457.6 L113.9,463.7 L117.5,469.0 L122.2,473.5M182.1,254.3 L187.1,251.3 L192.4,249.0 L197.8,246.8M497.9,267.4 L491.3,262.0 L483.9,257.9 L476.2,254.3 L469.7,248.7M441.1,271.6 L435.0,275.6 L427.8,276.6 L420.6,277.6M381.7,171.0 L376.7,169.0 L373.0,165.1M504.0,146.9 L498.5,146.7 L493.7,144.0M204.0,442.6 L196.4,436.5 L188.3,431.1M88.9,458.1 L81.4,459.8 L75.2,464.4 L68.2,467.7 L60.9,470.1M630.3,446.5 L624.1,450.0 L618.0,453.5M375.8,494.7 L379.3,490.6 L381.5,485.6 L382.5,480.2 L381.6,474.8M364.5,442.8 L370.4,435.6 L376.1,428.3M398.7,345.9 L397.9,355.3 L394.6,364.3 L394.5,373.7 L390.6,382.4M65.5,144.6 L74.8,141.6 L84.6,141.7 L94.2,143.7M349.7,291.1 L357.9,287.3 L366.9,286.1 L375.4,289.1 L382.4,294.8M272.1,164.1 L276.4,158.7 L277.9,151.9 L278.6,145.0M490.2,260.5 L488.2,267.5 L488.5,274.7 L491.3,281.5M165.4,238.6 L163.4,233.0 L161.9,227.3 L160.9,221.4M386.8,1.6 L385.8,7.7 L383.6,13.4 L380.3,18.7M536.9,270.3 L528.5,270.6 L521.1,274.6M375.5,61.7 L382.3,61.2 L389.0,59.9 L394.7,56.4 L401.3,54.6M531.4,165.5 L529.1,172.0 L525.4,177.9M319.3,414.7 L323.4,417.9 L327.8,420.9M99.7,25.1 L108.9,26.8 L118.3,27.0M634.1,63.6 L640.7,63.6 L647.1,65.0 L653.7,64.6 L660.0,66.5M602.9,336.8 L608.8,340.3 L612.7,345.9 L618.6,349.5M117.9,170.4 L115.1,175.2 L113.4,180.6M351.2,413.6 L344.0,408.5 L335.4,406.8 L326.6,407.5M43.1,150.6 L48.1,156.2 L52.7,162.1 L58.5,166.9 L62.6,173.2M663.0,228.6 L654.4,233.7 L648.1,241.4 L642.1,249.4 L634.7,256.1M293.7,293.3 L297.8,296.7 L300.9,300.9 L305.1,304.1 L310.3,304.9M142.1,404.8 L150.1,404.1 L157.9,402.2 L164.7,397.9M662.6,164.7 L657.9,158.4 L654.8,151.3 L649.6,145.4 L642.7,141.8M390.9,307.8 L383.9,310.9 L376.2,311.0 L368.7,313.0M637.6,432.7 L632.6,429.7 L627.1,427.8 L621.3,427.9 L615.6,426.6M152.7,292.9 L147.2,299.4 L140.9,305.1M-7.8,238.8 L-1.1,235.4 L5.1,231.2M-8.9,247.7 L-4.2,241.8 L-2.5,234.5 L-2.1,227.1M432.3,22.0 L431.0,31.8 L433.8,41.3M543.6,111.7 L539.8,119.9 L536.0,128.0 L532.8,136.4M374.2,480.9 L380.9,487.4 L386.4,494.8 L391.9,502.3M631.0,325.6 L637.7,319.3 L646.3,316.2 L655.4,314.8 L664.4,316.1M482.5,410.2 L476.9,409.9 L471.7,412.0M549.6,486.2 L552.0,480.0 L556.8,475.2 L563.1,472.9 L569.6,471.5M34.6,336.3 L33.8,342.5 L34.6,348.8M412.4,392.1 L403.2,388.3 L395.2,382.5 L385.4,380.8M590.5,388.9 L598.1,387.2 L605.8,385.4M256.1,173.4 L247.7,169.1 L238.5,167.1M417.9,51.1 L416.5,58.5 L417.4,66.0M438.3,346.2 L444.9,345.9 L451.4,344.1M648.8,311.5 L646.2,319.9 L643.4,328.3 L640.6,336.8M14.5,437.6 L14.8,432.4 L14.1,427.2 L15.6,422.2 L16.3,417.0M290.4,196.7 L287.0,200.8 L282.3,203.0 L277.2,204.5M276.8,201.1 L282.0,193.8 L286.7,186.2M319.4,205.9 L317.5,198.3 L318.7,190.7 L318.0,182.9 L317.5,175.1M680.2,263.9 L686.1,264.1 L691.7,262.4M660.5,398.5 L654.9,405.1 L648.5,410.8 L641.0,415.1 L633.6,419.7M289.3,45.3 L286.8,50.8 L284.1,56.1 L284.3,62.1M311.7,309.2 L302.1,306.5 L292.1,306.3M553.9,114.5 L559.7,118.6 L566.3,121.0 L572.7,123.9 L579.4,126.2M255.1,375.6 L258.4,382.2 L259.1,389.5 L260.0,396.8 L260.2,404.2M208.4,500.5 L214.3,503.6 L219.5,507.8M389.3,373.6 L392.1,368.0 L394.6,362.2M243.1,216.7 L247.9,222.1 L250.3,228.9 L251.9,235.9M51.6,371.5 L43.0,375.2 L33.6,375.3 L25.2,371.1 L18.3,364.7M267.8,338.3 L268.0,344.5 L267.6,350.6 L264.3,355.8 L261.2,361.1M137.2,144.9 L130.6,139.0 L123.1,134.3 L116.8,128.1 L108.3,125.5M278.0,387.8 L272.9,389.8 L268.4,392.9 L263.0,393.6M507.2,215.1 L512.8,209.4 L517.7,203.3 L523.2,197.5M482.8,385.3 L476.5,387.9 L469.8,389.2 L463.2,391.2 L457.8,395.3M7.5,380.7 L9.4,374.3 L9.9,367.7 L10.9,361.2 L12.0,354.7M332.7,76.7 L323.7,77.1 L315.3,74.0 L309.2,67.4 L304.4,59.9M57.9,15.0 L65.5,15.1 L72.4,18.5 L79.6,20.9M515.2,29.1 L519.9,35.2 L526.1,39.8 L531.2,45.6M91.4,290.2 L87.2,293.2 L84.4,297.4 L82.4,302.2 L78.8,305.8M636.0,119.6 L640.7,117.5 L643.9,113.5M122.4,0.9 L129.8,4.9 L135.4,11.3M136.2,355.1 L140.9,350.4 L146.9,347.6 L153.3,346.1 L158.3,341.8M624.9,399.1 L632.4,396.2 L638.8,391.4 L645.8,387.4M94.0,490.4 L98.5,482.7 L100.4,474.0 L103.1,465.5M518.6,235.5 L517.1,244.0 L512.7,251.3 L510.5,259.5 L509.3,268.0M148.3,362.9 L150.5,353.9 L154.2,345.5M641.2,2.7 L636.5,4.9 L631.6,6.6 L626.3,6.5M33.4,42.9 L26.5,36.2 L17.4,33.2M95.7,342.2 L93.4,349.2 L92.3,356.5M239.1,119.2 L245.6,118.9 L252.1,118.1 L257.9,115.2M109.8,74.3 L102.5,75.2 L95.4,73.2M511.8,313.1 L508.6,306.7 L507.6,299.5 L505.6,292.6 L502.0,286.3M297.3,288.6 L296.1,294.9 L294.0,301.0M17.2,226.8 L22.4,224.0 L28.1,222.2 L34.0,221.5 L39.9,222.2M304.6,196.3 L299.7,192.5 L296.6,187.3 L292.0,183.2 L286.2,181.2M359.8,164.3 L354.7,169.9 L349.5,175.5 L342.3,177.9M42.3,505.5 L46.9,497.4 L53.4,490.7M299.8,503.6 L291.9,504.8 L284.0,504.4 L276.6,507.3M505.3,115.7 L499.4,117.5 L494.0,120.1 L488.3,122.4M427.0,-0.7 L435.1,-3.9 L442.0,-8.9M205.3,82.0 L212.1,78.6 L217.5,73.2 L224.3,69.7 L229.8,64.5M104.5,168.4 L112.0,173.4 L121.0,174.4 L129.7,172.4 L138.5,170.2M653.0,156.8 L650.8,147.5 L645.3,139.8 L636.7,135.5M463.4,439.4 L464.9,432.6 L467.7,426.4 L468.5,419.5M332.6,492.6 L334.0,500.4 L338.4,507.0M164.2,350.7 L168.8,346.2 L174.9,344.3 L181.3,343.5M424.5,188.8 L431.1,188.5 L437.7,188.8 L443.9,186.7 L449.4,183.0M70.9,176.7 L69.9,183.5 L68.2,190.2 L64.0,195.6 L61.8,202.0M336.2,249.3 L339.1,256.6 L340.3,264.3 L344.6,270.9 L346.2,278.5M13.2,88.3 L7.9,91.4 L3.9,96.1 L0.6,101.3M595.7,172.0 L600.5,175.1 L606.2,175.6M596.8,187.7 L603.3,193.3 L606.4,201.3M545.9,297.6 L550.4,302.2 L556.0,305.4M433.1,77.2 L434.7,68.2 L435.1,59.1M507.0,40.0 L513.8,42.7 L521.2,43.1M222.3,-5.2 L222.0,4.1 L220.2,13.2 L221.5,22.3 L220.0,31.5M599.9,469.8 L609.5,470.2 L618.9,468.7M509.2,397.1 L504.6,389.7 L503.1,381.1 L500.2,373.0 L495.4,365.7M375.8,52.7 L369.0,59.1 L360.1,61.9 L350.8,61.0M389.3,451.9 L388.1,442.8 L383.8,434.7M269.4,282.8 L263.9,275.7 L259.0,268.3M134.3,485.8 L128.3,485.6 L123.1,482.7 L117.4,481.1M243.0,350.1 L243.3,357.8 L242.8,365.5M497.6,49.8 L496.3,54.6 L492.8,58.2 L488.9,61.4 L486.7,65.9M485.5,110.6 L479.8,112.2 L473.9,112.7 L468.3,114.5M378.8,115.3 L370.1,115.7 L362.1,119.1 L353.4,120.1 L345.3,117.1M130.5,310.0 L122.1,311.3 L113.8,312.1M124.8,339.4 L134.6,339.1 L143.3,334.4 L151.7,329.3M560.5,344.9 L566.6,340.8 L570.3,334.6 L574.9,329.0 L579.4,323.2M59.8,294.3 L58.6,299.9 L56.3,305.3M585.3,466.7 L587.4,458.6 L589.8,450.6 L593.0,442.9M587.2,341.5 L589.0,335.3 L590.7,329.1 L589.1,322.8M319.7,126.7 L326.7,133.2 L333.4,140.0 L341.0,145.8 L349.3,150.5M57.0,487.7 L50.8,489.4 L44.4,489.2 L38.0,489.7 L31.9,487.5M324.9,196.6 L334.1,197.7 L342.9,200.7 L351.6,203.9M655.8,484.7 L650.5,486.8 L644.8,487.5 L639.1,488.5M194.2,180.9 L202.4,178.3 L209.2,172.9M102.3,48.8 L93.7,48.2 L85.1,49.1 L77.1,52.6 L68.5,52.0M184.7,15.2 L183.5,9.6 L180.0,5.1 L177.2,0.2 L174.2,-4.7M613.2,400.4 L619.0,393.3 L624.8,386.2M202.3,206.9 L195.9,214.3 L189.8,221.9 L186.3,231.1 L187.1,240.8M278.4,472.9 L275.9,481.7 L273.4,490.4M368.2,137.1 L367.5,144.9 L365.0,152.2M515.5,164.8 L522.8,158.9 L526.9,150.5 L531.1,142.2M149.9,116.3 L144.5,111.1 L138.5,106.7 L131.4,104.4M664.4,304.3 L659.0,304.0 L654.3,301.2M564.3,401.7 L559.4,396.6 L554.1,392.0 L548.2,388.2M437.9,173.0 L435.6,180.4 L435.9,188.2 L437.9,195.7M461.6,13.2 L465.6,18.5 L467.0,24.9 L469.7,30.9M251.8,50.7 L242.4,47.6 L233.1,44.1M528.0,244.1 L522.6,251.8 L519.6,260.7M191.2,210.3 L185.2,213.0 L179.1,215.2 L172.6,215.7M333.6,-3.8 L335.5,-8.9 L334.8,-14.2 L334.0,-19.5M404.3,155.8 L398.2,160.2 L394.1,166.6M420.5,382.8 L424.1,389.8 L430.2,394.8 L436.0,400.2 L443.4,402.8M54.1,203.1 L52.7,209.4 L52.6,215.9M44.2,225.4 L46.6,218.5 L46.6,211.1M356.8,204.6 L364.2,200.0 L372.7,198.1 L381.4,198.4 L390.2,198.2M556.1,376.9 L554.1,367.3 L548.8,359.1M106.9,288.0 L100.2,293.8 L92.0,297.3 L86.5,304.3 L80.7,311.1M54.4,448.8 L51.3,442.8 L49.9,436.2M115.9,160.4 L110.5,163.2 L104.8,165.0 L100.2,168.9 L97.2,174.2M126.7,266.6 L133.1,262.8 L140.0,260.0 L147.2,258.1 L154.4,256.1M446.9,218.4 L453.6,212.7 L458.3,205.3 L460.0,196.7 L458.7,188.0M150.0,457.1 L155.9,461.6 L162.7,464.4M438.7,363.7 L431.8,365.8 L425.3,368.9 L418.9,372.2M464.2,359.2 L458.0,351.5 L452.1,343.6 L446.6,335.4M632.6,275.5 L635.1,283.4 L640.7,289.6 L647.7,294.1M69.0,397.6 L72.3,390.4 L73.3,382.5M62.9,-2.1 L67.4,-6.0 L70.5,-11.0M251.9,234.0 L249.4,242.3 L248.2,250.9M316.4,401.9 L325.9,403.8 L335.6,404.2 L345.2,404.9M56.0,432.3 L55.7,426.3 L54.3,420.5 L52.6,414.7M570.7,343.3 L565.4,344.5 L561.2,348.0M194.7,463.6 L199.3,468.8 L204.4,473.6 L209.9,477.9M269.4,300.3 L275.5,300.0 L281.6,299.1 L287.7,298.5M266.7,283.2 L261.6,287.8 L256.2,292.0 L249.8,294.3M54.2,313.1 L54.7,319.6 L58.2,325.1M322.6,0.1 L316.2,2.3 L311.5,7.3M60.2,397.6 L67.5,401.5 L75.4,403.7 L83.6,405.0 L90.3,409.8M472.7,398.8 L464.5,400.6 L456.2,401.6M353.5,415.1 L358.0,407.1 L362.9,399.4M604.7,301.0 L610.2,296.8 L615.8,292.9M89.9,381.3 L87.6,376.2 L85.1,371.2 L81.7,366.8M608.8,186.5 L611.1,195.1 L611.5,204.0 L610.0,212.7 L612.2,221.3M636.9,263.9 L639.3,270.7 L641.1,277.7M254.0,230.0 L248.7,228.2 L243.1,228.2 L237.5,228.7M346.4,262.4 L354.4,262.8 L361.5,266.3M563.6,108.5 L568.7,105.3 L574.3,103.2M444.3,142.8 L449.2,144.3 L453.6,146.7 L457.0,150.6 L461.7,152.5M154.0,115.8 L156.9,124.8 L155.5,134.2M662.2,361.9 L657.4,364.8 L651.9,366.2 L646.4,365.2M407.0,353.5 L408.5,361.6 L412.1,368.9 L417.7,374.9 L419.9,382.8M647.4,470.2 L651.9,462.1 L652.7,452.9 L655.6,444.2M568.4,424.8 L561.8,422.6 L554.8,423.5M394.8,346.7 L392.7,352.3 L393.2,358.2 L390.9,363.8 L387.2,368.5M252.1,361.4 L254.5,368.3 L255.6,375.5 L256.3,382.8M65.2,-8.1 L66.8,-17.5 L72.5,-25.2 L80.4,-30.7M398.9,59.5 L394.2,52.7 L388.2,46.8M111.2,33.2 L106.7,30.2 L102.8,26.5 L100.8,21.6 L99.5,16.4M409.5,409.4 L416.6,410.9 L423.5,413.4 L429.1,418.1M413.6,178.6 L410.0,186.0 L406.5,193.4M127.0,7.9 L117.1,6.3 L107.2,5.8 L98.2,9.9 L90.0,15.6M233.1,505.0 L237.8,509.7 L242.1,514.6 L245.1,520.5M504.9,37.6 L506.1,30.6 L510.3,24.9 L512.7,18.2 L515.2,11.5M146.6,-2.6 L142.9,-8.6 L141.5,-15.6 L140.9,-22.6M472.8,175.7 L469.4,181.5 L464.5,186.2 L458.8,189.8M401.7,439.7 L399.3,446.2 L399.6,453.0 L397.7,459.7 L395.6,466.2M417.0,418.7 L409.2,416.4 L403.3,410.8M343.2,129.5 L348.9,133.5 L355.3,135.9 L362.2,136.5M199.4,305.1 L208.6,304.3 L217.1,300.8 L226.3,299.6M485.7,458.2 L480.3,457.7 L475.1,459.4 L469.7,458.7M77.8,362.2 L78.6,354.3 L82.0,347.2 L87.2,341.2 L93.6,336.6M583.2,247.1 L591.4,249.4 L597.9,254.8 L603.4,261.4M70.6,364.2 L71.7,357.2 L70.1,350.3 L68.6,343.4 L69.5,336.4M587.6,347.2 L587.6,340.4 L585.5,334.0 L580.6,329.3M656.7,380.1 L649.5,378.4 L642.7,375.2 L635.6,373.2 L628.2,372.0M679.3,131.0 L684.8,133.7 L690.3,136.3M280.6,181.0 L283.5,186.9 L286.6,192.6 L290.5,197.9M418.7,257.1 L418.1,265.6 L414.7,273.4M493.2,116.9 L486.3,120.0 L480.6,124.8M330.9,415.6 L331.9,420.8 L330.8,426.1M234.7,32.7 L239.1,29.8 L244.1,28.5 L248.7,26.0M238.6,144.9 L239.5,137.7 L242.6,131.2M158.9,194.1 L154.2,192.3 L150.1,189.5 L147.5,185.2M470.6,106.0 L472.5,100.7 L476.7,97.0M342.4,168.5 L349.3,171.8 L356.3,174.9M488.2,499.5 L489.9,493.9 L489.9,488.1M-7.1,55.6 L-1.6,51.6 L3.5,47.2M652.2,-2.5 L648.0,-6.3 L645.0,-11.2 L643.9,-16.7M84.9,147.8 L78.2,145.9 L71.2,146.5M605.0,334.0 L611.6,327.6 L616.1,319.6M229.0,19.2 L236.0,17.0 L242.9,14.4 L250.3,14.4M660.5,382.8 L656.0,378.1 L653.6,372.1 L651.7,365.8M418.9,278.1 L414.7,281.4 L410.8,285.0 L405.9,287.2 L400.7,288.2M580.6,227.4 L587.4,221.5 L594.9,216.5 L603.5,214.1M460.4,364.0 L465.5,366.3 L471.1,366.7M562.5,306.6 L568.0,312.0 L571.4,319.0 L574.2,326.3M437.2,318.3 L436.2,323.3 L433.9,327.9M84.0,24.5 L78.9,23.1 L75.0,19.7M132.9,96.3 L137.3,101.9 L142.1,107.0M437.6,172.2 L435.0,166.5 L433.8,160.4 L431.3,154.7M409.8,140.3 L414.8,136.5 L420.9,134.9M229.2,485.2 L228.4,480.2 L228.7,475.0 L230.4,470.2 L232.4,465.5M161.4,24.6 L165.1,32.7 L170.5,39.8M241.5,474.0 L250.6,473.8 L259.0,477.4 L266.9,482.1 L274.4,487.4M214.1,186.8 L220.4,185.7 L226.0,182.6 L232.4,181.7 L238.8,181.9M158.0,50.9 L149.3,48.1 L140.8,44.3M372.7,342.0 L364.4,338.5 L356.5,334.5 L347.9,332.0 L339.0,333.0M638.2,1.0 L631.9,5.3 L624.7,7.7 L619.1,12.8M147.7,134.6 L143.9,131.4 L140.8,127.5M394.9,345.2 L387.3,349.8 L379.6,354.4 L371.8,358.7 L363.9,362.9M181.1,42.1 L174.3,37.7 L166.8,34.8 L158.9,33.0M289.2,371.2 L286.8,378.6 L284.4,386.0 L281.9,393.3 L280.6,400.9M98.5,217.7 L94.9,214.1 L91.8,210.1M531.7,216.4 L536.6,210.8 L540.7,204.6 L546.7,200.2 L551.4,194.5M585.2,274.6 L592.2,273.1 L598.3,269.4M343.9,175.8 L345.4,180.8 L348.3,185.0M382.0,105.2 L383.0,99.8 L386.4,95.5 L391.1,93.0M300.3,321.0 L305.2,312.4 L308.3,303.1 L313.9,294.9M414.5,500.2 L409.7,498.5 L404.7,498.5 L400.3,496.0 L396.4,492.8M226.1,257.2 L222.9,253.0 L218.9,249.6 L214.0,247.8 L208.8,247.3M292.8,209.0 L283.4,209.7 L273.9,209.1 L265.6,204.7 L256.3,203.1M418.6,343.7 L417.0,350.2 L415.8,356.7 L413.5,363.0 L412.7,369.6M585.3,127.3 L580.6,132.5 L574.3,135.3 L568.2,138.6M152.2,69.0 L156.8,66.0 L159.7,61.4M556.4,133.0 L562.2,126.3 L567.8,119.3M655.8,159.7 L653.8,164.5 L649.7,167.9 L645.3,170.7 L640.1,171.7M398.8,462.5 L391.2,464.8 L383.2,465.4 L375.3,466.7 L367.5,468.5M145.2,72.2 L138.9,71.3 L132.5,72.0 L126.7,74.7M339.8,346.9 L343.7,343.8 L348.6,342.3M12.3,115.2 L5.3,117.1 L-0.4,121.7 L-6.7,125.4M61.3,8.1 L65.7,10.9 L69.0,14.9M397.5,160.1 L405.9,160.9 L414.3,161.1 L422.7,161.7M476.3,425.0 L475.0,418.9 L471.6,413.7 L468.2,408.5 L463.3,404.5M378.4,137.4 L383.8,132.7 L389.0,127.7 L395.3,124.3M330.6,197.3 L330.4,190.2 L329.5,183.3M37.4,424.6 L32.4,428.2 L28.3,432.7 L23.0,435.6M307.1,292.6 L304.8,297.2 L301.7,301.2 L298.4,305.0M350.0,181.4 L344.7,183.0 L339.9,185.6 L334.4,185.9 L328.9,186.3M501.3,71.0 L492.2,73.9 L482.7,74.5 L474.1,78.4 L465.2,81.9M199.3,367.9 L202.6,374.6 L206.0,381.2 L209.8,387.7 L216.2,391.6M339.1,409.9 L342.1,403.1 L345.4,396.2 L346.3,388.8M37.0,87.5 L28.2,88.6 L19.2,88.4 L10.3,87.5 L1.4,86.9M309.3,420.6 L318.5,422.8 L326.7,427.4 L333.9,433.4M372.2,118.5 L370.2,123.5 L370.1,128.8M292.0,173.3 L294.6,168.1 L295.2,162.2M313.4,252.8 L310.1,246.5 L308.6,239.5M549.9,366.5 L542.7,367.8 L536.0,370.5 L528.8,370.8M279.1,279.0 L275.7,285.3 L271.3,290.9 L266.7,296.4 L260.8,300.4M42.0,507.3 L44.6,515.8 L43.9,524.8M37.3,144.8 L43.3,139.0 L47.1,131.5 L51.0,124.1 L51.6,115.7M252.2,247.3 L247.2,243.2 L241.4,240.5 L234.9,240.5 L228.5,240.0M395.7,360.0 L392.9,366.9 L389.7,373.6 L383.9,378.2M351.0,378.8 L359.0,377.9 L365.8,373.7M643.5,232.6 L634.4,234.9 L625.2,236.3M174.9,291.7 L170.1,297.3 L167.4,304.1M165.1,51.5 L157.0,52.2 L149.0,50.3M87.0,184.5 L91.5,180.0 L97.3,177.2 L102.2,173.1M648.8,344.5 L653.6,347.1 L658.7,349.0M160.3,147.2 L157.3,152.2 L153.0,156.1M234.8,359.6 L240.8,367.2 L246.8,374.7 L254.3,380.7M255.6,225.1 L263.2,227.4 L271.1,228.4M420.6,-6.1 L415.8,-3.5 L410.5,-2.7 L405.2,-2.5M92.2,335.9 L96.4,343.2 L98.6,351.3M158.0,263.9 L158.0,270.6 L157.0,277.3 L153.2,282.9M45.2,161.0 L50.7,154.0 L58.2,149.2 L66.3,145.5 L74.7,142.7M250.6,111.0 L256.8,112.6 L263.0,114.3 L268.6,117.5M100.4,38.9 L93.5,36.1 L86.1,35.8 L78.6,36.0 L71.2,36.0M466.4,150.3 L468.1,145.4 L471.2,141.4 L472.6,136.4M289.1,270.1 L280.5,269.5 L272.1,271.0M291.6,60.1 L284.4,63.7 L276.8,66.3 L269.4,69.3M459.6,11.8 L461.0,4.1 L461.0,-3.8 L459.0,-11.4M208.3,380.1 L214.6,377.2 L219.0,371.8 L225.3,368.9M597.9,272.5 L592.2,267.3 L586.2,262.4M412.9,202.3 L403.5,203.7 L394.1,201.9 L384.7,200.3 L375.2,201.3M569.2,355.5 L573.7,362.8 L574.2,371.3 L573.8,379.9 L571.3,388.1M523.4,492.6 L523.3,485.7 L524.4,478.9 L523.3,472.1M612.6,353.7 L603.6,351.6 L594.4,353.3M446.5,472.5 L448.4,481.2 L446.8,490.0 L446.8,498.9 L443.3,507.1M335.5,486.5 L327.2,488.6 L319.0,490.9 L312.3,496.2 L304.1,498.8M109.2,99.4 L113.5,104.1 L119.3,106.4 L124.8,109.6M451.1,120.6 L444.1,119.5 L437.3,117.4 L430.4,115.5 L424.2,112.0M502.3,149.9 L507.1,154.2 L513.3,156.0M117.0,144.3 L111.4,137.3 L103.4,133.2M242.5,370.4 L239.0,377.7 L234.2,384.3M474.1,123.9 L474.3,132.4 L478.5,139.8 L484.8,145.5M211.5,486.6 L207.3,494.2 L203.5,502.0M99.9,227.3 L108.5,222.5 L114.5,214.6M502.2,327.0 L509.5,325.6 L516.8,323.8 L524.3,323.0M535.5,295.0 L541.6,293.2 L547.4,290.6M9.8,302.1 L8.8,292.5 L8.0,282.9 L4.6,273.8 L5.8,264.3M481.5,486.6 L488.7,479.9 L492.7,470.9 L500.1,464.4M631.3,336.5 L640.1,338.1 L648.9,339.3M195.5,417.6 L190.8,424.2 L188.1,431.9M438.0,308.3 L444.8,312.1 L451.4,315.9 L458.7,318.4 L466.4,318.8M97.8,240.8 L104.6,243.8 L111.9,244.6 L119.3,245.0M249.2,499.2 L243.2,503.8 L236.7,507.6 L229.5,509.6 L222.8,513.0M210.8,-7.7 L218.1,-4.0 L226.2,-3.3 L234.1,-1.5M258.0,468.3 L250.8,470.5 L244.5,474.4 L238.7,479.1 L233.8,484.7M388.9,213.9 L389.6,207.0 L393.4,201.2 L394.4,194.4M317.5,325.9 L326.2,321.5 L335.4,318.1M425.2,371.9 L434.2,372.3 L443.1,373.0 L451.6,370.1M527.8,253.1 L519.7,252.4 L511.8,254.6M46.5,214.3 L39.5,209.3 L31.2,207.2 L22.7,208.8M317.8,208.6 L310.5,205.3 L302.9,203.1M87.2,351.1 L82.2,350.5 L77.4,352.0 L72.4,352.9M30.2,295.2 L25.9,299.3 L21.4,303.3 L19.0,308.8M85.5,253.8 L77.8,252.0 L69.9,250.9 L63.1,246.8 L56.2,242.9M402.7,64.7 L396.8,62.2 L392.3,57.5 L386.8,54.2M274.1,27.7 L269.6,23.9 L266.9,18.7 L263.0,14.2M426.0,287.9 L430.1,294.8 L432.8,302.3M591.0,408.4 L587.7,400.1 L584.5,391.7M174.4,479.5 L180.6,480.1 L186.7,481.1 L192.7,479.6M596.6,487.7 L589.4,486.9 L582.1,486.7M285.6,83.7 L278.1,89.1 L270.1,93.6M210.7,370.5 L201.7,367.7 L192.4,366.3 L183.7,362.6M528.3,172.7 L531.8,168.3 L534.9,163.6 L537.1,158.4 L536.6,152.7M320.7,403.4 L328.2,400.7 L336.1,399.4M502.6,348.4 L510.5,344.0 L517.8,338.5 L525.2,333.3 L530.9,326.3M33.0,289.6 L25.0,286.6 L16.4,286.1M418.5,195.6 L411.1,200.0 L404.2,205.2 L398.3,211.5 L392.1,217.5M296.8,419.8 L290.3,416.0 L285.6,410.1M290.8,412.0 L298.1,412.7 L304.3,416.6 L311.6,417.4 L319.0,417.3M399.7,393.8 L406.3,390.5 L413.2,387.6 L420.6,387.7 L427.4,390.8M53.0,491.3 L58.6,492.1 L64.2,493.0 L69.8,492.7M96.0,80.2 L93.2,75.5 L92.7,70.1 L93.5,64.7 L93.1,59.2M59.8,79.9 L52.7,75.4 L44.4,74.3 L36.0,74.2M309.2,100.1 L310.6,105.1 L311.2,110.2 L313.7,114.7 L315.2,119.7M358.5,303.2 L363.4,300.1 L368.2,297.1 L373.8,295.6M638.8,433.4 L632.9,433.2 L626.9,432.6 L621.2,431.1 L615.4,432.2M127.9,294.0 L130.9,286.1 L131.3,277.6 L135.1,270.1 L139.5,262.9M395.1,-5.6 L392.1,-14.9 L385.9,-22.4M416.2,179.4 L418.3,170.4 L422.0,161.9 L423.3,152.7 L422.0,143.5M676.9,487.4 L675.5,495.7 L671.0,502.9M77.4,129.4 L82.1,135.1 L83.5,142.3 L81.3,149.3 L79.8,156.5M42.9,263.8 L36.7,265.5 L30.3,266.2M631.5,164.0 L629.8,171.3 L631.6,178.6 L636.4,184.3M231.7,240.3 L234.3,233.6 L237.4,227.2 L238.9,220.1 L239.7,213.0M491.3,33.7 L497.2,35.0 L503.1,33.4 L508.6,30.9M255.2,103.2 L252.8,95.1 L253.8,86.8 L250.9,78.9M14.7,-6.2 L20.4,-11.2 L27.4,-13.8 L32.5,-19.4 L34.5,-26.6M223.0,212.5 L216.5,211.0 L210.2,209.2M274.6,20.9 L281.9,26.4 L290.6,29.7 L299.7,30.8 L307.3,36.1M484.3,372.2 L489.5,371.3 L494.8,371.9 L500.1,372.5M269.7,47.1 L278.5,49.8 L287.9,50.3 L295.9,55.0M413.9,9.8 L422.2,10.2 L430.4,9.0M449.8,505.8 L450.9,499.4 L451.9,493.0 L453.1,486.6 L456.8,481.3M567.9,194.7 L565.3,200.0 L565.4,205.9M267.4,-8.9 L259.8,-4.0 L253.5,2.6 L245.7,7.2M193.2,39.1 L186.1,32.2 L181.6,23.5 L175.8,15.7M543.3,218.4 L535.9,214.4 L527.7,212.4 L521.4,206.7M236.2,294.5 L241.6,292.9 L246.8,290.6M537.0,363.8 L533.1,357.0 L528.3,350.7 L522.0,346.0 L517.5,339.5M673.8,61.0 L679.1,64.1 L683.3,68.5 L686.5,73.7M220.2,217.4 L215.3,220.2 L209.9,221.7M210.0,37.9 L205.8,42.2 L201.6,46.4 L196.4,49.4M676.0,462.5 L672.0,454.8 L667.2,447.6 L662.3,440.4M62.8,457.9 L65.1,452.9 L65.8,447.5 L65.7,442.0M43.1,56.2 L49.9,58.5 L55.8,62.8M113.6,118.3 L123.1,119.1 L132.0,122.6 L141.3,124.4M219.6,214.3 L223.4,207.8 L224.0,200.3 L227.6,193.7M457.8,117.6 L465.0,121.2 L472.1,125.2 L478.6,130.0 L485.3,134.6M15.7,269.9 L9.5,263.2 L7.0,254.4 L1.3,247.2M618.1,348.4 L612.8,341.3 L610.3,332.8 L605.9,325.1M253.7,495.4 L247.2,490.4 L239.2,488.4 L231.0,487.8 L223.0,489.3M427.3,330.2 L421.9,326.8 L416.7,323.3 L410.6,321.8 L404.3,322.3M528.5,327.6 L523.6,331.1 L519.6,335.4 L514.7,338.7 L509.5,341.5M443.6,5.1 L439.3,2.2 L435.2,-0.9 L431.8,-4.8M556.5,54.7 L551.6,61.2 L548.1,68.5 L546.7,76.5 L543.8,84.1M50.7,50.8 L58.2,50.9 L65.4,48.7 L72.3,45.9 L79.7,45.0M17.9,404.1 L11.1,410.2 L3.1,414.6M43.8,268.5 L49.3,269.4 L54.0,272.5M84.5,94.7 L86.9,99.2 L87.0,104.3M630.4,428.3 L625.1,427.2 L619.9,428.6 L614.5,428.8M402.5,328.6 L398.0,323.1 L393.9,317.2M7.6,222.2 L-0.5,219.5 L-7.7,214.8 L-15.8,212.3 L-23.3,208.1M591.9,-6.5 L592.8,-13.6 L592.4,-20.8M200.2,102.9 L201.5,97.4 L203.8,92.3 L207.5,88.0 L212.4,85.4M370.9,378.9 L378.1,371.9 L386.6,366.9 L396.4,364.7M350.0,342.6 L355.4,344.8 L359.8,348.6 L365.1,350.8M578.8,382.8 L587.3,381.4 L595.6,383.9M321.1,493.7 L328.0,487.7 L335.9,483.1 L344.1,478.9M623.4,220.3 L629.2,213.5 L635.8,207.4 L643.1,202.1M564.2,20.2 L571.7,16.1 L579.7,12.7 L587.3,8.6M35.1,425.5 L30.5,433.3 L29.6,442.3 L32.8,450.7M100.9,168.9 L94.5,171.4 L87.6,171.5 L81.0,173.3M503.5,175.4 L511.1,178.8 L519.0,181.5 L526.9,183.9M374.3,348.5 L366.2,354.1 L358.7,360.6 L351.7,367.5M0.4,93.7 L-7.5,95.2 L-15.3,93.5 L-23.3,94.6M259.8,373.0 L256.0,366.5 L253.1,359.6 L248.1,354.0 L243.6,348.0M286.4,343.0 L295.1,345.1 L301.9,350.9M170.7,142.5 L161.9,145.7 L153.7,150.0M48.0,197.6 L41.8,203.9 L38.6,212.1 L36.7,220.8M483.8,321.8 L492.1,317.8 L499.0,311.8 L502.3,303.2M131.2,269.4 L130.9,263.8 L131.4,258.1 L132.8,252.7 L133.4,247.1M84.2,297.8 L79.5,301.5 L75.8,306.3 L70.7,309.4M368.0,494.8 L361.6,494.8 L355.6,497.1M627.3,230.3 L622.7,228.2 L618.5,225.3 L614.8,221.9M672.5,168.2 L680.1,166.6 L687.7,167.4 L695.2,169.0M343.7,140.9 L342.1,146.0 L342.1,151.4M671.9,468.2 L664.0,469.1 L656.3,467.4 L648.4,468.2M614.0,341.4 L614.6,349.2 L611.6,356.4 L608.3,363.4M267.6,148.1 L261.0,151.7 L254.0,154.0 L248.5,159.0M342.6,135.0 L338.1,131.8 L332.8,130.4 L327.4,129.2 L322.5,126.6M247.7,10.1 L241.3,16.2 L234.0,21.2 L228.6,28.1 L221.5,33.5M627.4,447.1 L619.6,444.4 L612.4,440.3M293.7,141.1 L285.9,139.0 L278.2,136.9M416.8,393.5 L410.6,390.3 L404.0,388.5 L397.1,388.2 L390.2,388.0M40.7,16.7 L46.2,13.9 L51.7,11.0M314.3,493.9 L316.9,487.6 L317.3,480.9M314.4,416.6 L307.4,414.9 L301.7,410.4 L294.8,408.4 L288.4,405.1M35.5,265.8 L39.2,260.9 L44.1,257.2 L50.0,255.3M327.5,191.9 L327.9,197.0 L328.2,202.2M254.1,148.2 L263.4,149.7 L272.6,147.7 L281.8,149.6M89.7,54.6 L94.2,50.5 L97.7,45.6M278.5,204.2 L274.1,197.2 L267.0,192.7M681.8,25.4 L676.8,22.7 L673.1,18.4M640.1,48.8 L639.0,53.9 L638.2,58.9 L638.4,64.1M252.9,257.5 L258.3,260.1 L264.1,261.5 L270.1,260.9 L275.4,258.1M470.2,366.5 L478.1,361.2 L484.3,354.1 L492.3,348.9M16.7,249.4 L24.7,243.9 L29.9,235.7 L37.0,229.0M133.7,374.1 L135.2,379.9 L137.1,385.6 L139.0,391.3M519.4,499.8 L513.4,502.6 L506.7,502.7 L500.1,502.3M318.9,227.0 L325.6,225.2 L330.7,220.6M64.0,114.8 L72.3,119.8 L81.3,123.6 L91.1,123.5 L100.3,126.8M498.6,144.7 L504.4,141.6 L510.6,139.7 L517.0,138.3 L522.7,135.0M379.9,479.4 L376.6,486.9 L370.2,492.0M451.7,85.4 L454.8,77.4 L453.9,69.0 L453.8,60.5 L456.9,52.5M370.8,252.6 L371.4,246.4 L373.3,240.4 L376.7,235.2M575.6,165.7 L580.3,171.7 L584.0,178.3 L586.6,185.4 L591.3,191.3M655.2,-7.9 L660.4,-11.6 L666.6,-13.5 L672.1,-16.7M604.2,273.5 L597.6,274.2 L590.9,273.6 L584.7,271.1 L578.5,268.6M2.1,444.9 L-0.1,453.4 L-4.8,460.9 L-8.5,468.9M400.2,144.6 L399.1,136.5 L394.4,129.7 L389.6,123.0M358.1,111.2 L356.2,119.5 L355.4,127.9M341.7,132.6 L345.6,138.0 L349.2,143.6 L354.8,147.2 L361.1,149.3M38.7,304.9 L31.8,305.7 L24.7,306.0 L17.7,306.1 L10.9,304.3M408.3,259.0 L413.3,260.9 L416.8,264.9 L421.4,267.7 L424.3,272.2M444.2,390.9 L440.0,394.5 L437.4,399.4 L433.2,403.0 L428.2,405.3M92.0,98.7 L83.3,99.1 L75.0,102.0 L66.3,102.2 L57.7,104.0M326.4,484.7 L317.6,484.8 L309.6,488.2M408.9,268.3 L410.0,260.1 L408.0,252.1M160.0,369.3 L164.3,361.4 L171.3,355.7M396.4,314.2 L388.7,318.6 L379.9,320.3 L372.1,324.7 L364.1,328.8M298.4,53.8 L291.9,52.1 L286.8,47.7M668.4,345.0 L671.6,350.8 L675.0,356.4M129.7,59.2 L124.6,54.6 L119.7,49.7 L116.3,43.7 L114.7,37.0M348.0,443.1 L344.7,449.4 L340.7,455.4 L337.3,461.6M553.2,501.0 L560.1,507.5 L568.9,510.7M564.5,175.9 L559.7,179.1 L554.5,181.5M590.8,254.6 L588.0,264.2 L586.7,274.0 L585.2,283.9 L586.0,293.8M274.9,464.5 L273.0,470.2 L272.5,476.2 L269.7,481.5M337.5,205.4 L329.5,207.5 L323.0,212.6M578.0,364.2 L571.6,365.4 L565.1,364.9 L558.8,366.7 L552.7,369.0M471.9,253.1 L472.8,245.6 L470.7,238.4M351.9,380.9 L358.0,388.2 L365.3,394.4M391.6,422.6 L383.4,420.5 L374.9,421.4 L366.6,422.8 L358.3,421.0M678.4,362.6 L681.9,366.9 L686.6,370.0 L692.0,371.2 L696.3,374.7M550.5,472.9 L555.1,479.7 L559.8,486.3 L564.1,493.1 L568.7,499.8M392.2,22.0 L395.4,15.6 L395.5,8.3 L394.6,1.1M253.5,108.1 L262.0,111.7 L268.5,118.2 L272.5,126.4M492.5,113.2 L491.3,107.5 L487.7,103.0 L484.8,97.9M166.4,450.8 L163.2,444.0 L163.0,436.5M500.4,1.1 L507.4,7.8 L515.3,13.4 L524.0,17.6M132.7,380.6 L128.8,375.9 L126.0,370.6M529.3,50.7 L520.6,50.3 L512.1,52.0 L504.5,56.2 L496.4,59.4M522.9,365.8 L531.3,364.6 L539.8,364.9 L548.0,367.2 L555.0,372.0M468.8,50.6 L459.1,49.7 L449.4,50.6 L439.7,51.3 L429.9,51.4M370.5,427.7 L373.4,435.9 L373.0,444.7M587.2,389.4 L596.6,392.7 L606.4,394.1 L616.3,394.4 L625.4,390.3M175.3,299.9 L176.8,305.1 L178.1,310.3 L180.6,315.0M300.9,178.4 L301.2,173.2 L300.1,168.0 L299.3,162.8M511.2,75.9 L507.5,69.3 L501.4,64.7M302.8,414.0 L305.4,419.2 L308.3,424.2 L311.8,428.9 L315.8,433.1M80.0,508.6 L86.4,502.9 L89.8,495.1 L89.3,486.5M48.9,56.5 L45.5,50.9 L41.8,45.6M166.6,27.5 L161.3,30.1 L156.0,32.7M632.3,284.2 L630.1,291.4 L625.4,297.3 L622.7,304.3M419.6,196.5 L424.8,188.2 L432.2,181.8 L437.4,173.5 L439.8,164.0M573.2,216.1 L572.2,225.4 L570.0,234.5M425.5,28.4 L422.7,35.8 L421.0,43.4 L419.4,51.1M352.6,95.3 L351.2,100.9 L351.8,106.7 L352.9,112.4M68.8,292.3 L70.4,301.8 L72.1,311.3M413.0,304.4 L407.9,302.3 L402.4,301.8 L397.1,303.3M502.5,328.5 L508.1,322.8 L514.2,317.8 L522.0,316.2M611.8,378.6 L607.0,374.4 L600.9,372.5 L594.6,373.2M583.2,268.5 L586.1,274.6 L591.4,278.7M113.5,437.0 L110.2,432.9 L108.8,427.9 L105.5,423.9 L100.8,421.5M599.1,472.9 L606.9,470.6 L615.1,470.9 L622.7,474.0M176.6,471.8 L178.5,466.6 L179.6,461.1M134.6,99.1 L131.6,104.3 L129.6,109.9 L127.6,115.5M498.0,40.4 L499.0,33.0 L499.5,25.6M110.0,405.0 L115.2,412.1 L119.5,419.7 L119.9,428.4 L116.8,436.6M551.1,391.9 L561.1,392.7 L570.6,395.7 L580.5,396.4M524.3,436.7 L532.6,437.6 L540.7,435.6 L548.2,432.0M575.2,-8.7 L577.3,0.3 L580.0,9.2 L585.6,16.6 L592.7,22.5M328.4,345.4 L335.6,344.8 L342.5,346.7M43.2,261.7 L52.8,260.1 L61.1,254.7M351.3,130.8 L359.3,126.2 L365.5,119.4 L372.9,113.9M29.6,491.0 L26.2,498.8 L21.2,505.6 L16.1,512.4 L14.0,520.6M292.1,2.9 L296.9,11.2 L304.6,17.0M643.1,275.3 L648.6,272.3 L654.8,271.8 L661.0,270.8M149.8,370.3 L148.8,377.4 L149.2,384.6M102.1,154.0 L94.9,155.3 L88.2,158.5 L81.5,161.5 L74.7,164.3M174.7,29.4 L180.3,34.8 L184.3,41.5 L190.9,45.6 L198.2,48.1M567.8,236.9 L563.9,232.2 L559.4,227.9M176.5,223.5 L181.5,222.7 L186.6,222.8 L191.2,225.1 L196.2,225.5M452.5,340.4 L447.9,332.6 L443.8,324.6M451.9,345.8 L447.0,343.7 L443.1,340.1 L440.3,335.7 L438.2,330.8M436.3,496.7 L434.6,505.2 L429.1,511.7M34.4,12.4 L37.5,18.2 L37.6,24.9 L34.5,30.8 L34.2,37.5M167.4,30.7 L175.0,35.1 L183.6,35.5M50.2,12.7 L53.6,7.7 L57.6,3.1 L59.4,-2.7M74.0,408.4 L78.8,413.2 L84.1,417.5M338.6,229.5 L335.7,238.5 L333.0,247.6 L331.0,256.9 L325.4,264.6M497.7,428.4 L496.3,422.6 L493.1,417.6M472.2,33.1 L472.0,42.6 L470.5,51.9 L464.9,59.4M332.8,181.0 L337.7,177.0 L342.2,172.6 L348.0,169.9 L354.2,168.7M117.5,331.9 L111.4,328.5 L106.2,323.8M260.2,187.5 L262.7,192.3 L266.3,196.3M4.5,413.3 L7.4,404.4 L6.5,395.1 L3.1,386.4M133.7,498.0 L138.8,498.5 L143.9,498.9 L149.0,499.5M572.1,424.7 L574.8,430.4 L575.0,436.7M494.6,276.9 L488.2,276.7 L482.0,278.0 L476.6,281.5M37.9,462.7 L42.4,466.2 L46.2,470.5 L50.4,474.4M203.8,135.1 L196.3,135.7 L188.9,135.8 L181.6,134.3M36.2,142.2 L35.6,151.2 L35.0,160.2 L31.1,168.4M364.4,323.2 L355.0,320.4 L345.9,316.6 L336.9,312.9M186.0,407.3 L177.1,408.7 L168.1,408.6 L159.1,407.9M86.4,25.5 L82.5,30.5 L79.6,36.1M346.5,3.0 L351.0,5.8 L356.3,6.8 L361.4,8.2M627.7,411.7 L629.1,405.4 L629.8,398.9 L627.7,392.8M552.4,376.7 L556.4,372.3 L560.6,368.1M296.9,408.1 L298.0,402.6 L297.2,397.0 L298.3,391.5M108.8,349.5 L105.1,355.5 L100.5,360.7 L95.1,365.2 L89.2,368.9M350.6,338.5 L350.9,331.7 L350.1,324.9M544.2,252.7 L545.4,244.6 L544.0,236.7 L540.4,229.4 L537.1,222.0M608.2,171.7 L617.2,169.9 L625.9,172.7 L634.6,175.5M529.0,437.1 L536.3,434.7 L544.0,435.2 L551.2,432.4M33.9,250.7 L42.0,251.0 L50.0,250.3 L57.4,247.0 L64.8,243.9M588.3,267.2 L581.0,267.4 L573.9,268.6 L566.7,269.0 L559.4,268.9M275.0,329.2 L281.9,323.9 L287.6,317.3M276.9,21.5 L282.4,20.3 L288.0,19.2M138.2,7.8 L141.2,0.1 L147.4,-5.4M67.6,374.3 L69.5,366.0 L69.9,357.6M-10.0,173.8 L-18.9,173.3 L-27.4,170.6 L-35.6,167.2M43.4,228.6 L37.1,231.0 L31.5,234.8M483.8,442.9 L478.6,447.0 L472.3,448.5 L467.2,452.6M606.1,279.1 L599.9,276.0 L593.0,274.7 L586.5,272.4 L579.6,271.2M348.4,500.1 L344.3,503.5 L339.1,504.6 L334.3,507.1 L330.0,510.0M239.0,508.6 L235.2,513.3 L229.7,515.9 L224.2,518.3M188.3,274.4 L178.6,273.8 L169.7,269.8 L160.0,270.5 L150.3,271.5M401.5,375.8 L402.3,382.1 L403.7,388.3M222.7,434.9 L222.1,427.2 L223.8,419.6 L222.8,412.0M315.6,316.6 L309.2,313.2 L304.4,307.8M547.5,447.9 L541.8,439.8 L536.0,431.9 L529.6,424.4 L524.1,416.2M223.8,404.5 L222.4,410.3 L220.2,415.9 L220.7,421.8 L221.2,427.8M439.3,354.3 L444.2,357.2 L449.7,357.8M317.5,382.4 L312.3,384.5 L307.1,386.6 L302.1,389.2M354.5,357.2 L359.6,353.2 L363.8,348.2M163.2,242.4 L172.5,242.3 L181.8,240.9 L191.2,241.5 L200.2,239.1M678.5,39.1 L685.2,40.9 L691.6,43.8 L696.6,48.8 L702.3,52.9M267.0,324.0 L263.3,319.5 L260.1,314.6 L256.6,309.9M74.0,485.6 L74.1,493.4 L72.9,501.1 L73.9,508.8 L72.8,516.5M219.9,16.9 L228.6,14.6 L237.6,13.7 L246.0,17.1 L254.4,20.7M295.0,135.8 L290.3,138.9 L287.5,143.8M428.6,316.4 L419.6,315.7 L410.7,317.2 L402.5,321.0M545.5,-2.9 L552.9,-0.8 L560.7,0.1 L567.4,4.0 L575.0,5.7M195.0,440.9 L193.2,445.9 L193.2,451.3M143.0,80.9 L138.7,77.6 L135.0,73.5M376.4,274.2 L377.8,266.4 L379.7,258.7 L383.1,251.5 L386.9,244.5M42.7,422.9 L51.7,422.0 L60.7,421.2 L69.6,420.0 L78.6,420.1M402.7,412.6 L405.9,421.9 L404.4,431.7 L405.5,441.5M12.7,402.1 L13.0,408.1 L10.4,413.6M7.8,103.7 L3.7,98.9 L-1.4,95.1M657.4,267.3 L656.4,259.2 L651.8,252.4 L649.3,244.5 L649.9,236.4M105.8,188.7 L112.6,181.6 L116.7,172.6 L123.7,165.6 L132.6,161.3M128.4,463.4 L137.6,465.7 L145.7,470.8M109.8,170.7 L102.9,176.7 L95.0,181.3M679.0,315.9 L673.7,320.6 L670.5,326.9 L664.9,331.2M379.6,481.9 L377.0,491.2 L373.4,500.3 L366.4,506.9 L359.5,513.7M595.0,486.9 L598.3,482.1 L603.3,479.3 L609.1,478.9 L614.3,476.2M26.0,15.6 L33.6,13.3 L40.5,9.4 L46.3,4.0 L52.8,-0.4M673.6,282.4 L672.7,276.9 L674.3,271.6 L677.7,267.2 L682.0,263.6M-4.5,70.9 L-2.6,65.6 L0.4,60.7 L4.8,57.2 L8.9,53.3M649.1,21.6 L657.8,23.4 L665.6,27.5M196.4,321.5 L204.3,319.5 L212.4,319.0 L219.7,322.4 L227.8,322.7M22.6,92.7 L29.5,98.4 L36.5,104.2M536.7,462.2 L541.6,456.7 L546.4,450.9M546.6,134.1 L543.1,128.0 L542.3,121.2M242.5,246.6 L235.6,250.3 L230.7,256.4 L226.7,263.1M510.6,473.2 L503.7,470.3 L497.0,466.9 L491.1,462.3" stroke="#eeeeec" stroke-width="0.6" fill="none"/>
<path d="M234,269h4v2h-4zM171,470h5v4h-5zM541,417h5v3h-5zM363,161h2v5h-2zM54,186h5v3h-5zM613,11h3v3h-3zM427,396h6v4h-6zM125,495h2v3h-2zM234,12h3v5h-3zM652,172h6v4h-6zM22,301h3v3h-3zM482,103h3v2h-3zM216,152h2v2h-2zM273,41h6v3h-6zM247,32h5v3h-5zM51,185h6v5h-6zM314,290h2v5h-2zM507,123h5v2h-5zM324,143h4v3h-4zM365,128h2v2h-2zM530,223h4v4h-4zM172,94h4v4h-4zM492,229h4v3h-4zM637,319h5v3h-5zM389,354h4v4h-4zM183,392h3v4h-3zM96,201h6v2h-6zM126,271h5v4h-5zM461,359h4v2h-4zM366,140h2v4h-2zM655,233h5v4h-5zM25,274h6v4h-6zM200,452h5v5h-5zM570,291h4v4h-4zM215,426h3v5h-3zM228,219h4v3h-4zM409,27h5v2h-5zM587,428h5v4h-5zM125,283h2v4h-2zM529,105h4v2h-4zM449,348h2v4h-2zM590,89h6v3h-6zM11,42h5v3h-5zM578,217h2v4h-2zM220,66h2v3h-2zM310,247h4v2h-4zM2,443h4v4h-4zM601,297h5v3h-5zM142,256h6v5h-6zM156,316h3v3h-3zM189,497h4v3h-4zM58,423h2v4h-2zM161,118h2v3h-2zM642,180h3v4h-3zM155,378h6v5h-6zM27,390h5v4h-5zM389,53h5v4h-5zM326,383h3v3h-3zM425,448h6v5h-6zM176,211h4v3h-4zM53,183h6v3h-6zM591,445h4v5h-4zM656,5h4v5h-4zM208,181h3v5h-3zM379,295h4v5h-4zM347,274h4v3h-4zM651,323h4v2h-4zM430,22h4v3h-4zM263,110h3v3h-3zM81,126h5v2h-5zM569,205h3v4h-3zM253,183h2v3h-2zM630,247h4v4h-4zM60,76h5v4h-5zM214,430h3v3h-3zM527,425h3v5h-3zM141,133h4v4h-4zM363,233h5v3h-5zM292,337h6v3h-6zM239,235h3v4h-3zM632,117h5v5h-5zM329,175h2v4h-2zM568,191h3v4h-3zM106,281h5v4h-5zM197,299h3v4h-3zM535,400h5v2h-5zM181,333h5v5h-5zM296,30h2v2h-2zM362,162h2v5h-2zM44,174h5v4h-5zM147,480h4v4h-4zM284,323h6v2h-6zM381,295h6v4h-6zM176,69h4v2h-4zM236,478h3v3h-3zM450,251h6v3h-6zM510,207h6v5h-6zM130,185h4v3h-4zM397,345h3v4h-3zM553,205h3v3h-3zM408,60h3v3h-3zM463,370h4v2h-4zM238,30h6v3h-6zM563,123h3v2h-3zM261,342h4v3h-4zM86,136h5v3h-5zM666,418h3v2h-3zM554,21h5v4h-5zM277,290h2v4h-2zM565,19h3v5h-3zM132,72h5v5h-5zM664,97h3v2h-3zM80,164h6v4h-6zM122,198h4v2h-4zM39,95h3v2h-3zM655,486h4v3h-4zM372,416h4v5h-4zM643,138h4v5h-4zM204,495h4v4h-4zM64,197h5v3h-5zM652,198h4v4h-4zM210,350h5v4h-5zM214,169h4v3h-4zM318,283h5v2h-5zM143,63h4v3h-4zM625,103h4v4h-4zM190,40h3v4h-3zM235,472h3v3h-3zM332,167h3v2h-3zM340,374h3v5h-3zM418,181h3v3h-3zM64,236h4v4h-4zM53,15h6v3h-6zM487,438h3v3h-3zM524,151h4v2h-4zM392,220h3v3h-3zM623,449h3v3h-3zM228,172h4v5h-4zM11,181h4v4h-4zM224,360h4v2h-4zM612,103h5v5h-5zM114,377h5v3h-5zM616,69h4v5h-4zM353,437h4v4h-4zM326,354h5v4h-5zM511,107h5v4h-5zM501,89h4v2h-4zM652,323h3v4h-3zM210,278h5v5h-5zM660,329h4v4h-4zM102,17h6v5h-6zM557,94h5v3h-5zM217,395h6v2h-6zM524,355h5v2h-5zM236,372h3v3h-3zM322,85h3v2h-3zM142,51h4v3h-4zM94,89h4v2h-4zM199,22h5v2h-5zM315,68h5v5h-5zM473,43h3v2h-3zM595,42h5v4h-5zM560,212h4v3h-4zM439,241h5v3h-5zM566,299h3v3h-3zM156,457h2v3h-2zM289,303h2v4h-2zM90,138h3v2h-3zM671,30h6v4h-6zM625,296h4v3h-4zM369,165h3v4h-3zM533,488h6v4h-6zM137,279h3v5h-3zM508,188h3v5h-3zM293,39h5v3h-5zM79,427h3v3h-3zM355,124h3v3h-3zM625,295h4v4h-4zM623,458h2v4h-2zM521,355h5v4h-5zM139,465h5v3h-5zM358,94h3v4h-3zM94,4h4v4h-4zM610,14h3v2h-3zM614,402h3v3h-3zM463,309h4v4h-4zM141,31h3v4h-3zM96,441h3v2h-3zM434,331h5v3h-5zM615,337h6v4h-6zM184,215h3v4h-3zM261,230h3v3h-3zM396,362h3v2h-3zM413,311h4v4h-4zM633,381h4v5h-4zM379,258h3v3h-3zM245,133h3v3h-3zM70,278h4v4h-4zM487,464h6v2h-6zM442,462h2v2h-2zM14,89h6v5h-6zM96,2h2v5h-2zM217,284h3v3h-3zM427,469h2v3h-2zM480,393h5v3h-5zM18,114h4v5h-4zM395,298h4v4h-4zM652,237h5v4h-5zM171,453h2v3h-2zM621,286h4v3h-4zM250,373h5v4h-5zM638,184h3v4h-3zM625,353h5v4h-5zM15,318h3v4h-3zM529,402h3v3h-3zM106,413h5v4h-5zM369,368h4v3h-4zM641,386h4v4h-4zM139,117h2v4h-2zM546,131h3v3h-3zM191,378h3v3h-3zM272,429h5v2h-5zM94,26h5v4h-5zM112,141h5v2h-5zM492,413h5v3h-5zM497,460h4v4h-4zM404,464h6v4h-6zM328,62h4v3h-4zM457,242h3v3h-3zM504,285h5v3h-5zM300,58h3v3h-3zM185,476h2v4h-2zM62,442h2v5h-2zM212,179h2v4h-2zM48,333h4v3h-4zM437,354h2v5h-2zM588,398h6v3h-6zM87,215h6v4h-6zM73,375h5v3h-5zM436,435h4v4h-4zM383,392h5v2h-5zM127,293h3v3h-3zM0,221h6v3h-6zM145,186h4v2h-4zM114,262h3v4h-3zM87,31h6v4h-6zM432,301h3v2h-3zM299,341h4v4h-4zM53,473h3v3h-3zM541,472h3v3h-3zM564,244h2v3h-2zM227,1h2v5h-2zM560,413h3v3h-3zM631,26h4v3h-4zM500,342h6v5h-6zM408,458h4v3h-4zM342,134h6v4h-6zM69,324h5v4h-5zM98,291h2v3h-2zM243,177h4v4h-4zM75,263h2v4h-2zM24,242h2v4h-2zM633,372h4v3h-4zM508,38h3v3h-3zM116,229h3v2h-3zM396,218h3v4h-3zM152,284h3v4h-3zM402,1h3v4h-3zM227,385h5v5h-5zM505,213h4v2h-4zM198,131h5v4h-5zM424,381h4v4h-4zM240,7h4v5h-4zM334,450h4v3h-4zM107,215h3v2h-3zM210,476h5v3h-5zM158,248h3v4h-3zM189,310h5v3h-5zM149,283h4v5h-4zM546,230h4v4h-4zM387,60h4v2h-4zM450,389h5v2h-5zM272,9h5v4h-5zM135,357h2v2h-2zM623,108h5v5h-5zM515,227h4v3h-4zM104,392h4v4h-4zM322,118h3v2h-3zM483,250h4v5h-4zM245,177h3v3h-3zM167,255h4v3h-4zM561,175h4v4h-4zM637,298h6v3h-6zM130,104h5v2h-5zM195,423h2v4h-2zM264,111h6v5h-6zM143,66h4v2h-4zM636,163h3v2h-3zM328,280h3v4h-3zM345,410h6v5h-6zM295,173h5v3h-5zM306,123h3v2h-3zM426,455h6v3h-6zM138,43h2v4h-2zM233,184h3v4h-3zM129,476h2v5h-2zM275,221h4v3h-4zM616,259h4v5h-4zM444,418h2v3h-2zM143,256h3v5h-3zM141,194h4v3h-4zM477,246h5v3h-5zM562,416h4v5h-4zM623,112h4v5h-4zM154,433h3v4h-3zM254,471h6v3h-6zM8,309h4v3h-4zM615,209h4v3h-4zM491,267h3v5h-3zM187,68h5v3h-5zM541,212h4v4h-4zM587,82h2v3h-2zM103,397h3v3h-3zM57,136h3v3h-3zM142,141h5v2h-5zM339,324h2v4h-2zM509,122h2v2h-2zM587,21h4v4h-4zM442,224h4v3h-4zM509,50h3v3h-3zM279,305h4v5h-4zM144,460h2v4h-2zM69,144h4v5h-4zM89,254h5v3h-5zM485,499h5v3h-5zM219,274h5v5h-5zM570,389h4v4h-4zM586,399h3v3h-3zM273,481h3v4h-3zM198,353h5v5h-5zM384,297h3v5h-3zM142,63h5v4h-5zM310,95h6v4h-6zM581,195h4v4h-4zM62,10h4v3h-4zM566,381h5v4h-5zM162,290h5v3h-5zM313,35h5v3h-5zM147,354h5v3h-5zM5,291h6v2h-6zM539,302h5v2h-5zM266,21h6v5h-6zM479,296h5v2h-5zM662,193h4v2h-4zM54,462h3v4h-3zM488,364h4v4h-4zM561,101h4v4h-4zM465,283h2v3h-2zM240,432h4v3h-4zM381,148h6v4h-6zM591,195h3v4h-3zM122,425h5v5h-5zM385,321h2v3h-2zM81,31h4v2h-4zM332,78h3v4h-3zM663,315h4v3h-4zM285,444h2v3h-2zM163,111h3v4h-3zM228,492h3v4h-3zM245,384h2v5h-2zM167,369h3v2h-3zM362,63h5v3h-5zM33,269h4v4h-4zM480,25h6v4h-6zM502,3h3v3h-3zM593,135h4v3h-4zM491,60h4v4h-4zM243,113h4v3h-4zM489,406h3v2h-3zM251,6h5v5h-5zM398,261h4v3h-4zM363,307h5v3h-5zM99,222h2v3h-2zM343,427h4v5h-4zM528,491h6v3h-6zM121,348h5v3h-5zM551,322h5v2h-5zM564,439h3v5h-3zM177,424h5v4h-5zM64,97h4v3h-4zM255,479h6v2h-6zM113,389h4v2h-4zM645,91h2v5h-2zM555,50h4v5h-4zM669,453h5v5h-5zM268,354h5v4h-5zM401,419h5v5h-5zM609,436h3v3h-3zM332,2h3v5h-3zM655,245h4v2h-4z" fill="#d0cfcc"/>
<path d="M361,465h5v7h-5zM549,227h6v7h-6zM119,169h5v3h-5zM164,415h8v5h-8zM77,256h5v7h-5zM576,180h5v8h-5zM576,346h5v9h-5zM43,493h8v3h-8zM114,397h10v4h-10zM416,428h8v9h-8zM590,88h4v8h-4zM166,437h10v5h-10zM515,105h7v4h-7zM421,71h6v3h-6zM657,307h5v4h-5zM527,245h7v3h-7zM245,233h9v4h-9zM33,268h5v3h-5zM73,240h6v5h-6zM473,25h5v6h-5zM164,482h5v6h-5zM639,259h5v6h-5zM666,415h5v3h-5zM622,149h4v6h-4zM513,185h9v9h-9zM452,440h7v4h-7zM455,127h9v8h-9zM313,352h3v6h-3zM443,458h3v4h-3zM511,306h6v9h-6zM48,434h4v4h-4zM442,26h8v5h-8zM535,300h5v8h-5zM617,395h4v6h-4zM45,224h5v6h-5zM583,372h9v3h-9zM326,208h8v8h-8zM5,430h5v3h-5zM416,267h10v8h-10zM315,389h9v6h-9zM214,326h9v7h-9zM416,82h8v7h-8zM486,229h3v5h-3zM398,78h5v5h-5zM96,140h6v8h-6zM483,51h6v8h-6zM0,353h8v5h-8zM9,154h5v7h-5zM51,83h8v3h-8zM400,185h5v5h-5zM229,396h9v6h-9zM460,421h4v6h-4zM18,377h9v4h-9zM284,310h7v3h-7zM275,169h7v8h-7zM53,270h6v5h-6zM129,225h4v7h-4zM198,435h5v4h-5zM126,363h9v8h-9zM347,318h5v6h-5zM76,435h6v6h-6zM69,256h4v9h-4zM50,177h4v4h-4zM337,34h7v7h-7zM515,170h7v5h-7zM462,493h4v7h-4zM536,124h3v6h-3zM343,305h8v5h-8zM542,356h5v4h-5zM304,428h9v6h-9zM355,247h8v3h-8zM476,257h7v8h-7zM73,255h10v4h-10zM414,138h8v7h-8zM94,69h5v6h-5zM536,470h7v4h-7zM308,471h4v6h-4zM179,323h4v3h-4zM125,262h6v8h-6zM143,325h9v3h-9zM330,104h6v5h-6zM510,128h10v4h-10zM198,319h4v4h-4zM225,331h9v7h-9zM192,281h10v5h-10zM76,19h6v9h-6zM632,347h5v5h-5zM143,219h8v3h-8zM350,107h7v8h-7zM514,173h9v3h-9zM198,74h8v6h-8zM405,28h4v7h-4zM436,459h6v7h-6zM288,438h5v6h-5zM529,186h6v4h-6zM646,250h6v4h-6zM275,176h4v5h-4zM238,320h4v9h-4zM567,5h6v7h-6zM28,445h10v3h-10zM217,483h5v7h-5zM539,2h6v5h-6zM554,39h8v3h-8zM408,237h9v9h-9zM553,349h6v7h-6zM285,370h10v7h-10zM99,275h7v8h-7zM216,198h8v7h-8zM332,300h5v4h-5zM293,264h8v5h-8zM225,478h9v4h-9zM575,170h3v8h-3zM354,465h6v3h-6zM263,347h5v7h-5zM153,334h3v7h-3zM137,193h10v4h-10zM51,484h9v6h-9zM353,230h8v8h-8zM92,178h7v4h-7zM73,321h10v8h-10zM213,168h10v8h-10zM401,40h4v7h-4zM247,330h4v7h-4zM345,55h4v4h-4zM264,269h10v4h-10zM130,265h5v3h-5zM340,206h8v6h-8zM49,220h4v3h-4zM577,452h10v7h-10zM412,251h7v5h-7zM586,231h9v5h-9zM168,319h8v6h-8zM148,42h7v4h-7zM569,229h8v5h-8zM610,120h10v3h-10zM495,149h10v7h-10zM493,273h8v5h-8zM254,331h3v5h-3zM132,88h5v3h-5zM374,210h8v9h-8zM401,328h9v9h-9zM298,431h6v6h-6zM171,371h5v5h-5zM299,8h9v3h-9zM90,448h8v3h-8zM148,206h3v4h-3zM232,489h3v7h-3zM142,313h3v8h-3zM621,31h10v8h-10zM207,241h3v4h-3zM38,172h5v3h-5zM42,92h3v4h-3zM563,212h4v8h-4zM116,112h3v8h-3zM301,289h7v8h-7zM606,400h7v7h-7zM146,431h7v3h-7zM222,473h5v4h-5zM662,214h7v5h-7zM175,161h10v6h-10zM478,306h5v8h-5zM617,69h3v7h-3zM101,433h6v6h-6zM185,277h5v3h-5zM360,436h8v6h-8zM570,24h4v5h-4zM15,45h9v6h-9zM440,92h9v9h-9zM227,99h5v5h-5zM257,342h8v8h-8zM413,410h8v3h-8zM116,118h4v5h-4zM450,371h6v6h-6zM431,341h6v5h-6zM350,290h4v6h-4zM337,380h5v9h-5zM486,310h7v4h-7zM229,155h6v3h-6zM14,498h3v5h-3zM271,493h5v5h-5zM326,313h9v7h-9zM51,450h9v4h-9zM551,456h9v9h-9zM206,318h8v8h-8zM405,441h8v5h-8zM636,205h4v8h-4zM250,396h9v8h-9zM463,162h7v5h-7zM543,157h6v8h-6zM76,393h7v7h-7zM457,122h9v7h-9zM240,53h4v3h-4zM196,68h3v3h-3zM69,109h4v5h-4zM72,79h7v5h-7zM459,115h8v5h-8zM288,126h4v9h-4zM174,1h7v3h-7zM69,113h4v5h-4zM225,154h8v5h-8z" fill="#c3e3b0"/>
<path d="M252.8,35.3 L271.8,32.6 L282.7,38.1 L285.4,62.5 L260.9,65.2 L250.1,54.4Z" fill="#c6e5b3"/>
<path d="M288.1,5.4 L312.6,8.2 L312.6,19.0 L290.8,16.3Z" fill="#c6e5b3"/>
<path d="M2.7,92.4 L27.2,89.7 L48.9,97.9 L51.6,114.2 L24.5,116.9 L5.4,111.4Z" fill="#c6e5b3"/>
<path d="M0.0,40.8 L16.3,43.5 L19.0,59.8 L0.0,62.5Z" fill="#c6e5b3"/>
<path d="M62.5,212.0 L87.0,214.7 L87.0,231.0 L65.2,228.3Z" fill="#c6e5b3"/>
<path d="M271.8,127.8 L296.3,127.8 L299.0,152.2 L274.5,152.2Z" fill="#c6e5b3"/>
<path d="M236.5,190.3 L290.8,187.6 L293.6,209.3 L239.2,209.3Z" fill="#c6e5b3"/>
<path d="M163.1,141.3 L184.8,141.3 L184.8,152.2 L163.1,152.2Z" fill="#c6e5b3"/>
<path d="M187.6,32.6 L203.9,35.3 L201.1,48.9 L187.6,46.2Z" fill="#c6e5b3"/>
<path d="M146.8,106.0 L160.4,106.0 L160.4,119.6 L146.8,119.6Z" fill="#c6e5b3"/>
<path d="M231.0,48.9 L244.6,51.6 L241.9,59.8 L231.0,59.8Z" fill="#c6e5b3"/>
<path d="M130.5,13.6 L152.2,16.3 L149.5,27.2 L130.5,27.2Z" fill="#c6e5b3"/>
<path d="M0.0,152.2 L13.6,152.2 L16.3,184.8 L0.0,184.8Z" fill="#c6e5b3"/>
<path d="M65.2,217.5 L81.5,217.5 L81.5,225.6 L65.2,225.6Z" fill="#c6e5b3"/>
<path d="M309.9,10.9 L326.2,13.6 L326.2,24.5 L312.6,24.5Z" fill="#c6e5b3"/>
<path d="M444.7,35.3 L461.0,38.1 L488.2,65.2 L504.5,89.7 L488.2,95.1 L466.5,70.7 L444.7,46.2Z" fill="#c6e5b3"/>
<path d="M526.3,5.4 L550.7,2.7 L553.5,24.5 L534.4,27.2Z" fill="#c6e5b3"/>
<path d="M567.0,43.5 L591.5,40.8 L618.7,54.4 L621.4,87.0 L594.2,87.0 L569.8,76.1Z" fill="#c6e5b3"/>
<path d="M458.3,103.3 L488.2,106.0 L488.2,127.8 L461.0,125.0Z" fill="#c6e5b3"/>
<path d="M363.2,29.9 L379.5,29.9 L379.5,54.4 L363.2,54.4Z" fill="#c6e5b3"/>
<path d="M635.0,35.3 L651.3,38.1 L651.3,54.4 L635.0,51.6Z" fill="#c6e5b3"/>
<path d="M656.7,95.1 L672.0,95.1 L672.0,111.4 L656.7,111.4Z" fill="#c6e5b3"/>
<path d="M341.4,46.2 L363.2,46.2 L363.2,62.5 L341.4,62.5Z" fill="#c6e5b3"/>
<path d="M428.4,0.0 L433.9,16.3 L439.3,32.6 L428.4,29.9Z" fill="#c6e5b3"/>
<path d="M62.5,317.0 L89.7,311.5 L127.8,325.1 L149.5,352.3 L152.2,374.0 L141.3,390.3 L114.2,401.2 L81.5,414.8 L62.5,401.2 L54.4,379.5 L57.1,344.1Z" fill="#c6e5b3"/>
<path d="M27.2,257.2 L76.1,251.7 L81.5,287.1 L48.9,287.1 L27.2,281.6Z" fill="#c6e5b3"/>
<path d="M0.0,412.1 L16.3,412.1 L46.2,439.3 L46.2,488.2 L10.9,488.2 L0.0,482.8Z" fill="#c6e5b3"/>
<path d="M0.0,297.9 L10.9,297.9 L10.9,319.7 L0.0,319.7Z" fill="#c6e5b3"/>
<path d="M16.3,352.3 L43.5,352.3 L43.5,374.0 L21.7,374.0Z" fill="#c6e5b3"/>
<path d="M108.7,401.2 L130.5,412.1 L125.0,428.4 L103.3,423.0Z" fill="#c6e5b3"/>
<path d="M190.3,466.5 L231.0,471.9 L233.8,499.1 L190.3,499.1Z" fill="#c6e5b3"/>
<path d="M271.8,477.3 L336.0,477.3 L336.0,499.1 L271.8,499.1Z" fill="#c6e5b3"/>
<path d="M190.3,368.6 L212.0,368.6 L212.0,384.9 L190.3,384.9Z" fill="#c6e5b3"/>
<path d="M288.1,363.2 L315.3,363.2 L315.3,384.9 L288.1,384.9Z" fill="#c6e5b3"/>
<path d="M271.8,259.9 L296.3,259.9 L296.3,276.2 L271.8,276.2Z" fill="#c6e5b3"/>
<path d="M119.6,249.0 L163.1,249.0 L163.1,281.6 L119.6,281.6Z" fill="#c6e5b3"/>
<path d="M518.1,265.3 L542.6,265.3 L548.0,287.1 L526.3,292.5Z" fill="#c6e5b3"/>
<path d="M526.3,292.5 L553.5,295.2 L553.5,308.8 L531.7,308.8Z" fill="#c6e5b3"/>
<path d="M607.8,270.7 L624.1,259.9 L629.6,281.6 L610.5,284.3Z" fill="#c6e5b3"/>
<path d="M635.0,330.5 L662.2,338.7 L672.0,363.2 L640.4,363.2Z" fill="#c6e5b3"/>
<path d="M635.0,398.5 L672.0,390.3 L672.0,482.8 L635.0,466.5Z" fill="#c6e5b3"/>
<path d="M493.7,409.4 L515.4,412.1 L515.4,433.8 L493.7,431.1Z" fill="#c6e5b3"/>
<path d="M395.8,357.7 L423.0,363.2 L425.7,390.3 L401.2,384.9Z" fill="#c6e5b3"/>
<path d="M406.7,401.2 L428.4,403.9 L428.4,423.0 L406.7,417.5Z" fill="#c6e5b3"/>
<path d="M567.0,401.2 L594.2,403.9 L591.5,433.8 L569.8,433.8Z" fill="#c6e5b3"/>
<path d="M444.7,303.4 L455.6,303.4 L455.6,317.0 L444.7,317.0Z" fill="#c6e5b3"/>
<path d="M575.2,365.9 L591.5,368.6 L591.5,390.3 L575.2,390.3Z" fill="#c6e5b3"/>
<path d="M428.4,461.0 L450.2,466.5 L450.2,477.3 L428.4,477.3Z" fill="#c6e5b3"/>
<path d="M352.3,330.5 L371.3,330.5 L371.3,352.3 L352.3,352.3Z" fill="#c6e5b3"/>
<path d="M591.5,57.1 L618.7,62.5 L618.7,81.5 L596.9,81.5Z" fill="#a9d19b"/>
<path d="M531.7,8.2 L545.3,8.2 L545.3,21.7 L534.4,21.7Z" fill="#a9d19b"/>
<path d="M73.4,338.7 L108.7,336.0 L125.0,357.7 L114.2,379.5 L89.7,390.3 L73.4,374.0Z" fill="#a9d19b"/>
<path d="M133.2,374.0 L171.2,379.5 L176.7,401.2 L168.5,417.5 L146.8,412.1 L130.5,395.8Z" fill="#a9d19b"/>
<path d="M613.2,289.8 L645.9,292.5 L656.7,308.8 L635.0,319.7 L618.7,311.5Z" fill="#a9d19b"/>
<path d="M648.6,406.7 L672.0,401.2 L672.0,471.9 L651.3,461.0Z" fill="#a9d19b"/>
<path d="M130.5,35.3 L146.8,29.9 L163.1,35.3 L157.7,44.8 L138.6,46.2Z" fill="#aad3df"/>
<path d="M433.9,2.7 L461.0,2.7 L463.8,24.5 L444.7,32.6 L433.9,21.7Z" fill="#aad3df"/>
<path d="M384.9,35.3 L398.5,35.3 L398.5,51.6 L384.9,51.6Z" fill="#aad3df"/>
<path d="M588.8,198.4 L635.0,197.1 L635.0,209.3 L588.8,210.7Z" fill="#aad3df"/>
<path d="M635.0,190.3 L672.0,179.4 L672.0,195.7 L635.0,214.7Z" fill="#aad3df"/>
<path d="M672.0,197.0 C666.8,200.5 649.8,213.8 641.0,218.0 C632.2,222.2 626.3,220.7 619.0,222.0 C611.7,223.3 602.3,225.0 597.0,226.0 C591.7,227.0 591.5,228.0 587.0,228.0 C582.5,228.0 575.5,227.2 570.0,226.0 C564.5,224.8 557.5,224.2 554.0,221.0 C550.5,217.8 552.5,210.2 549.0,207.0 C545.5,203.8 537.2,201.5 533.0,202.0 C528.8,202.5 525.0,205.5 524.0,210.0 C523.0,214.5 527.3,223.2 527.0,229.0 C526.7,234.8 525.5,241.7 522.0,245.0 C518.5,248.3 511.5,249.8 506.0,249.0 C500.5,248.2 492.7,244.2 489.0,240.0 C485.3,235.8 485.3,229.8 484.0,224.0 C482.7,218.2 483.7,209.2 481.0,205.0 C478.3,200.8 472.8,199.5 468.0,199.0 C463.2,198.5 457.8,200.2 452.0,202.0 C446.2,203.8 439.3,209.5 433.0,210.0 C426.7,210.5 420.8,206.8 414.0,205.0 C407.2,203.2 400.2,200.7 392.0,199.0 C383.8,197.3 372.8,195.5 365.0,195.0 C357.2,194.5 349.2,191.2 345.0,196.0 C340.8,200.8 341.7,215.3 340.0,224.0 C338.3,232.7 339.5,243.2 335.0,248.0 C330.5,252.8 322.0,251.7 313.0,253.0 C304.0,254.3 289.5,254.5 281.0,256.0 C272.5,257.5 267.2,258.5 262.0,262.0 C256.8,265.5 252.8,271.7 250.0,277.0 C247.2,282.3 247.8,289.2 245.0,294.0 C242.2,298.8 238.3,303.8 233.0,306.0 C227.7,308.2 219.5,308.2 213.0,307.0 C206.5,305.8 198.8,303.7 194.0,299.0 C189.2,294.3 186.8,285.8 184.0,279.0 C181.2,272.2 179.8,263.7 177.0,258.0 C174.2,252.3 171.5,247.5 167.0,245.0 C162.5,242.5 154.3,242.2 150.0,243.0 C145.7,243.8 143.3,246.0 141.0,250.0 C138.7,254.0 137.7,261.7 136.0,267.0 C134.3,272.3 133.8,278.3 131.0,282.0 C128.2,285.7 123.0,288.7 119.0,289.0 C115.0,289.3 109.5,287.2 107.0,284.0 C104.5,280.8 105.7,274.8 104.0,270.0 C102.3,265.2 101.5,258.3 97.0,255.0 C92.5,251.7 80.3,250.8 77.0,250.0" stroke="#aad3df" stroke-width="8" fill="none" stroke-linejoin="round" stroke-linecap="round"/>
<path d="M77.0,250.0 C74.5,252.0 65.8,254.0 62.0,262.0 C58.2,270.0 54.7,288.3 54.0,298.0 C53.3,307.7 56.5,313.2 58.0,320.0 C59.5,326.8 63.7,332.7 63.0,339.0 C62.3,345.3 57.3,352.2 54.0,358.0 C50.7,363.8 45.2,368.2 43.0,374.0 C40.8,379.8 40.7,386.2 41.0,393.0 C41.3,399.8 44.2,408.2 45.0,415.0 C45.8,421.8 46.7,426.3 46.0,434.0 C45.3,441.7 44.2,452.8 41.0,461.0 C37.8,469.2 32.5,477.5 27.0,483.0 C21.5,488.5 12.5,491.8 8.0,494.0 C3.5,496.2 1.3,495.7 0.0,496.0" stroke="#aad3df" stroke-width="4" fill="none" stroke-linejoin="round"/>
<path d="M672.0,197.0 C666.8,200.5 649.8,213.8 641.0,218.0 C632.2,222.2 626.3,220.7 619.0,222.0 C611.7,223.3 602.3,225.0 597.0,226.0 C591.7,227.0 591.5,228.0 587.0,228.0 C582.5,228.0 575.5,227.2 570.0,226.0 C564.5,224.8 557.5,224.2 554.0,221.0 C550.5,217.8 552.5,210.2 549.0,207.0 C545.5,203.8 537.2,201.5 533.0,202.0 C528.8,202.5 525.0,205.5 524.0,210.0 C523.0,214.5 527.3,223.2 527.0,229.0 C526.7,234.8 525.5,241.7 522.0,245.0 C518.5,248.3 511.5,249.8 506.0,249.0 C500.5,248.2 492.7,244.2 489.0,240.0 C485.3,235.8 485.3,229.8 484.0,224.0 C482.7,218.2 483.7,209.2 481.0,205.0 C478.3,200.8 472.8,199.5 468.0,199.0 C463.2,198.5 457.8,200.2 452.0,202.0 C446.2,203.8 439.3,209.5 433.0,210.0 C426.7,210.5 420.8,206.8 414.0,205.0 C407.2,203.2 400.2,200.7 392.0,199.0 C383.8,197.3 372.8,195.5 365.0,195.0 C357.2,194.5 349.2,191.2 345.0,196.0 C340.8,200.8 341.7,215.3 340.0,224.0 C338.3,232.7 339.5,243.2 335.0,248.0 C330.5,252.8 322.0,251.7 313.0,253.0 C304.0,254.3 289.5,254.5 281.0,256.0 C272.5,257.5 267.2,258.5 262.0,262.0 C256.8,265.5 252.8,271.7 250.0,277.0 C247.2,282.3 247.8,289.2 245.0,294.0 C242.2,298.8 238.3,303.8 233.0,306.0 C227.7,308.2 219.5,308.2 213.0,307.0 C206.5,305.8 198.8,303.7 194.0,299.0 C189.2,294.3 186.8,285.8 184.0,279.0 C181.2,272.2 179.8,263.7 177.0,258.0 C174.2,252.3 171.5,247.5 167.0,245.0 C162.5,242.5 154.3,242.2 150.0,243.0 C145.7,243.8 143.3,246.0 141.0,250.0 C138.7,254.0 137.7,261.7 136.0,267.0 C134.3,272.3 133.8,278.3 131.0,282.0 C128.2,285.7 123.0,288.7 119.0,289.0 C115.0,289.3 109.5,287.2 107.0,284.0 C104.5,280.8 105.7,274.8 104.0,270.0 C102.3,265.2 101.5,258.3 97.0,255.0 C92.5,251.7 80.3,250.8 77.0,250.0" stroke="#6f8fd0" stroke-width="0.9" stroke-dasharray="4,3" fill="none"/>
<path d="M580.7,220.2 C582.4,220.1 587.7,220.1 591.2,219.8 C594.6,219.4 598.2,218.9 601.5,218.1 C604.9,217.3 608.4,216.3 611.5,214.7 C614.6,213.1 618.6,209.7 620.1,208.6 M644.2,115.0 C644.1,113.0 643.3,106.9 644.1,103.1 C644.8,99.3 646.9,95.7 648.6,92.1 C650.4,88.6 652.8,85.4 654.6,81.9 C656.4,78.4 658.3,74.8 659.5,71.0 C660.6,67.3 661.3,61.3 661.7,59.4 M130.3,305.7 C129.3,303.8 125.9,298.5 124.2,294.7 C122.5,290.9 121.9,286.6 120.0,282.8 C118.1,279.1 114.5,276.2 113.0,272.4 C111.5,268.6 111.8,264.1 111.2,260.0 C110.6,255.8 109.7,249.6 109.4,247.5 M21.7,182.1 C23.1,182.5 27.3,183.8 29.9,185.0 C32.6,186.2 35.1,187.7 37.5,189.4 C39.8,191.1 43.0,194.2 44.1,195.1 M68.6,350.4 C69.9,349.4 74.0,346.5 76.4,344.3 C78.9,342.0 81.1,339.5 83.2,336.9 C85.2,334.4 86.6,331.2 88.9,328.8 C91.2,326.4 94.1,324.6 96.8,322.7 C99.5,320.8 103.8,318.2 105.2,317.3 M122.7,441.8 C122.8,443.8 122.4,450.2 123.6,453.9 C124.8,457.7 127.9,460.8 130.0,464.2 C132.2,467.7 135.6,472.8 136.7,474.5 M42.2,423.8 C41.3,422.0 39.2,416.0 36.7,412.9 C34.1,409.9 30.4,407.7 26.9,405.7 C23.4,403.8 19.2,402.9 15.6,401.1 C12.0,399.3 9.0,396.3 5.3,394.7 C1.6,393.0 -4.5,391.9 -6.4,391.3 M244.5,369.5 C242.8,368.5 238.0,364.5 234.3,363.2 C230.6,361.9 226.4,362.1 222.4,361.6 C218.4,361.2 214.1,361.9 210.4,360.6 C206.7,359.4 203.9,355.9 200.3,354.2 C196.7,352.5 190.7,351.1 188.8,350.5 M62.0,263.0 C61.3,264.2 58.6,267.6 57.8,270.2 C57.0,272.8 57.2,275.8 57.2,278.5 C57.2,281.3 58.2,284.2 57.9,286.9 C57.6,289.6 56.3,292.2 55.4,294.8 C54.5,297.5 52.9,301.3 52.4,302.6 M155.6,162.5 C157.4,163.8 162.5,168.2 166.1,170.8 C169.8,173.3 174.0,175.1 177.4,177.9 C180.9,180.7 183.4,184.6 186.7,187.6 C190.0,190.5 195.7,194.2 197.5,195.5 M651.2,245.1 C649.9,243.7 646.4,238.8 643.2,236.8 C640.1,234.7 635.7,234.7 632.3,232.9 C629.0,231.1 626.1,228.5 623.1,226.0 C620.1,223.6 616.7,221.4 614.5,218.3 C612.3,215.3 610.7,209.5 609.9,207.7 M204.5,470.9 C203.0,469.4 198.2,465.3 195.3,462.3 C192.3,459.3 189.4,456.2 186.8,453.0 C184.2,449.7 180.7,444.4 179.4,442.7 M218.3,250.9 C218.0,253.1 216.0,259.8 216.4,264.1 C216.7,268.4 219.3,272.5 220.5,276.8 C221.7,281.1 222.0,285.6 223.6,289.8 C225.2,293.9 228.5,297.3 230.0,301.4 C231.6,305.6 232.5,312.3 233.0,314.5 M251.6,354.6 C250.2,354.7 245.8,354.6 243.2,355.3 C240.5,356.1 237.8,357.4 235.7,359.1 C233.5,360.9 232.0,363.4 230.3,365.7 C228.6,367.9 226.3,371.4 225.5,372.6 M30.9,47.9 C29.2,46.7 24.1,43.2 20.9,40.7 C17.6,38.1 14.9,34.6 11.4,32.7 C7.8,30.8 1.5,29.7 -0.5,29.1 M103.1,201.2 C104.9,201.8 110.4,203.5 113.9,205.1 C117.3,206.7 120.6,208.8 123.8,210.9 C127.0,213.0 130.5,215.0 133.0,217.9 C135.4,220.7 137.5,224.4 138.4,228.0 C139.4,231.6 138.5,237.6 138.6,239.5 M629.6,45.1 C631.0,43.5 634.8,38.1 638.0,35.1 C641.1,32.1 645.3,30.3 648.5,27.4 C651.7,24.5 655.7,19.3 657.2,17.7 M607.8,61.6 C608.5,62.8 610.5,67.0 612.5,69.0 C614.6,71.0 617.8,71.8 620.1,73.5 C622.5,75.2 625.0,77.1 626.8,79.3 C628.6,81.6 629.0,85.0 630.8,87.2 C632.6,89.5 636.5,91.9 637.6,92.8 M641.7,74.1 C643.1,73.4 647.1,71.3 649.6,69.7 C652.2,68.2 654.7,66.5 657.0,64.6 C659.4,62.8 661.8,60.8 663.6,58.5 C665.4,56.1 666.0,52.8 667.8,50.5 C669.6,48.1 673.2,45.3 674.3,44.2 M579.6,352.9 C580.7,354.2 584.0,358.1 586.2,360.7 C588.3,363.4 590.1,366.3 592.3,368.9 C594.5,371.4 597.5,373.3 599.6,376.0 C601.7,378.7 603.0,381.9 604.7,384.8 C606.4,387.8 608.8,392.3 609.6,393.7 M362.5,357.8 C362.4,356.0 362.3,350.2 361.5,346.6 C360.7,342.9 359.4,339.3 357.6,336.0 C355.9,332.7 352.2,328.3 351.1,326.8 M59.2,383.5 C59.7,382.2 61.2,378.0 62.3,375.2 C63.5,372.5 65.0,369.9 66.0,367.2 C66.9,364.4 67.7,361.5 68.1,358.6 C68.6,355.6 67.8,352.4 68.7,349.7 C69.6,347.0 72.6,343.4 73.4,342.1 M65.4,496.0 C66.6,494.9 70.0,491.4 72.5,489.3 C75.0,487.3 77.4,484.7 80.2,483.5 C83.1,482.3 86.7,482.7 89.8,481.9 C92.9,481.2 97.5,479.4 99.0,478.9 M451.7,75.7 C453.5,75.2 458.8,72.9 462.5,72.7 C466.1,72.5 470.1,73.2 473.5,74.6 C476.8,76.0 481.1,79.9 482.6,81.0 M273.1,156.2 C271.9,155.1 268.5,151.6 266.0,149.6 C263.5,147.5 260.9,145.4 258.2,143.8 C255.4,142.2 251.8,141.7 249.3,139.8 C246.8,137.9 244.2,133.5 243.2,132.2 M99.4,75.0 C98.4,76.9 95.8,82.8 93.6,86.5 C91.4,90.2 89.3,94.1 86.4,97.2 C83.6,100.4 79.6,102.5 76.5,105.5 C73.4,108.4 69.3,113.4 67.8,115.0 M7.8,278.0 C7.0,276.6 4.4,272.3 3.1,269.3 C1.9,266.3 0.6,263.1 0.2,259.9 C-0.1,256.7 0.9,251.8 1.0,250.1 M346.5,478.2 C345.7,476.1 342.5,470.0 341.8,465.6 C341.1,461.3 341.8,456.7 342.3,452.3 C342.8,447.8 344.7,443.5 344.8,439.1 C344.9,434.7 343.3,428.0 343.0,425.8 M488.7,107.7 C490.1,107.2 494.5,105.7 497.2,104.3 C500.0,103.0 502.7,101.5 505.2,99.8 C507.7,98.1 510.3,96.2 512.2,93.9 C514.2,91.6 516.1,87.3 516.8,86.0 M547.6,377.5 C548.8,375.8 552.6,370.6 555.0,367.1 C557.4,363.6 559.0,359.3 562.1,356.4 C565.1,353.6 569.6,352.4 573.1,350.1 C576.7,347.7 581.6,343.7 583.3,342.4 M512.9,386.1 C512.8,384.7 512.1,380.5 512.1,377.7 C512.2,374.9 512.8,372.1 513.2,369.3 C513.7,366.6 514.6,362.5 514.9,361.1 M306.1,325.0 C307.8,324.5 313.3,323.5 316.4,321.9 C319.5,320.2 321.6,316.9 324.7,315.0 C327.7,313.2 332.9,311.4 334.5,310.7 M366.9,27.5 C368.6,27.2 373.7,25.3 377.0,25.5 C380.4,25.6 384.1,26.6 387.1,28.2 C390.0,29.8 391.9,33.3 394.7,35.2 C397.6,37.1 402.5,39.0 404.1,39.7 M562.2,359.1 C563.2,357.6 566.0,353.0 568.3,350.3 C570.6,347.6 573.2,344.9 576.1,342.9 C579.1,341.0 584.3,339.3 585.9,338.6 M670.9,163.7 C671.2,161.6 670.9,155.1 672.3,151.3 C673.6,147.4 676.5,144.1 679.1,140.8 C681.6,137.5 684.3,134.2 687.5,131.5 C690.7,128.9 694.7,127.3 698.2,124.9 C701.6,122.6 706.5,118.7 708.2,117.4 M487.8,178.1 C488.9,177.3 492.1,174.4 494.4,173.1 C496.8,171.7 499.5,170.6 502.1,169.9 C504.8,169.3 507.6,169.2 510.4,169.2 C513.1,169.2 515.9,169.5 518.6,169.9 C521.4,170.2 525.4,171.0 526.8,171.3 M460.9,358.1 C461.7,359.9 463.6,365.4 465.5,368.7 C467.5,372.0 470.6,374.6 472.5,377.9 C474.5,381.2 476.6,384.8 477.4,388.4 C478.1,392.1 476.9,398.1 476.9,400.0 M55.3,398.7 C56.8,399.5 61.2,401.8 64.1,403.3 C67.1,404.8 70.0,406.3 72.9,407.8 C75.9,409.3 80.2,411.7 81.7,412.5 M147.0,292.8 C148.7,292.1 153.9,290.6 157.0,288.9 C160.1,287.2 163.0,284.9 165.6,282.5 C168.3,280.1 171.6,275.8 172.8,274.5 M152.2,445.1 C152.1,442.7 152.7,435.6 151.7,431.2 C150.7,426.7 147.7,422.8 146.2,418.4 C144.7,414.0 142.9,409.5 142.7,405.0 C142.5,400.4 144.5,393.5 144.9,391.2" stroke="#f1eda0" stroke-width="1.4" fill="none"/>
<path d="M604.7,350.2 C602.2,350.5 594.7,351.6 589.7,352.3 C584.6,353.0 579.3,352.7 574.6,354.4 C569.9,356.1 566.1,359.9 561.6,362.3 C557.1,364.6 551.7,365.6 547.7,368.4 C543.6,371.3 541.3,376.6 537.3,379.5 C533.3,382.4 525.8,384.7 523.4,385.8 M113.4,18.6 C111.2,19.9 104.7,23.9 100.2,26.5 C95.8,29.1 91.0,31.0 86.8,34.0 C82.6,36.9 78.7,40.3 75.2,44.0 C71.7,47.7 69.5,52.8 65.7,56.1 C61.9,59.4 54.5,62.4 52.3,63.7 M605.4,287.2 C603.1,287.3 596.5,287.9 592.1,287.9 C587.6,287.9 582.9,288.5 578.8,287.2 C574.6,285.9 570.7,283.1 567.4,280.3 C564.0,277.4 560.8,274.0 558.6,270.3 C556.4,266.5 554.9,259.8 554.2,257.7 M25.0,233.1 C24.2,235.3 22.8,242.7 20.4,246.6 C18.0,250.6 14.3,254.2 10.5,256.9 C6.7,259.7 1.6,260.6 -2.3,263.3 C-6.2,265.9 -11.1,271.3 -12.8,272.9 M29.6,186.7 C28.9,189.0 26.3,195.9 25.8,200.7 C25.3,205.5 25.7,210.5 26.7,215.2 C27.6,219.9 30.6,226.7 31.4,229.0 M453.3,360.2 C453.4,358.7 453.9,354.1 453.6,351.2 C453.3,348.2 451.8,345.4 451.5,342.4 C451.3,339.4 451.9,336.4 451.8,333.4 C451.8,330.4 451.8,327.3 451.1,324.4 C450.4,321.5 449.3,318.5 447.7,316.1 C446.0,313.7 442.2,311.0 441.1,309.9 M522.5,414.0 C524.4,412.3 531.1,407.7 534.2,403.6 C537.4,399.6 539.0,394.4 541.4,389.7 C543.9,385.1 546.3,380.4 548.7,375.8 C551.2,371.2 554.1,366.8 556.2,362.1 C558.4,357.3 560.7,349.8 561.6,347.4 M145.4,132.6 C143.5,133.1 137.8,135.1 133.8,135.6 C129.9,136.2 125.8,136.4 121.9,135.9 C118.0,135.4 114.0,134.2 110.4,132.7 C106.8,131.1 103.8,128.1 100.3,126.3 C96.7,124.5 93.0,123.0 89.1,122.0 C85.3,121.1 79.2,120.9 77.3,120.7 M337.4,368.7 C338.8,370.5 343.5,375.4 345.5,379.3 C347.5,383.2 348.7,387.7 349.4,392.1 C350.2,396.4 349.5,401.0 350.1,405.4 C350.7,409.8 351.7,414.2 353.0,418.4 C354.3,422.6 357.2,428.7 358.0,430.8 M339.3,242.4 C340.2,244.3 342.6,250.0 344.5,253.7 C346.4,257.3 348.7,260.8 350.6,264.4 C352.6,268.0 355.2,271.6 356.3,275.5 C357.4,279.4 357.0,283.7 357.3,287.8 C357.7,291.9 357.3,296.2 358.4,300.1 C359.5,304.0 363.1,309.3 364.1,311.1 M224.2,76.5 C222.7,76.8 218.0,77.3 215.2,78.5 C212.4,79.7 210.3,82.6 207.5,83.6 C204.7,84.7 201.4,84.6 198.3,85.1 C195.3,85.5 190.7,86.1 189.2,86.3 M36.5,28.6 C38.4,28.1 44.3,26.4 48.2,25.6 C52.2,24.8 56.6,25.3 60.2,23.8 C63.8,22.2 68.2,17.7 69.9,16.5 M428.4,74.6 C429.2,76.5 432.1,82.2 433.2,86.2 C434.3,90.2 434.1,94.5 434.9,98.6 C435.8,102.7 436.9,106.8 438.5,110.6 C440.0,114.5 442.4,118.1 444.2,121.8 C446.0,125.6 448.5,131.3 449.4,133.2 M451.2,301.9 C451.0,303.7 450.7,309.1 449.8,312.5 C448.9,315.9 447.5,319.3 445.8,322.4 C444.0,325.5 440.3,329.4 439.2,330.8 M474.9,404.2 C476.2,403.0 479.9,399.3 482.3,396.7 C484.6,394.1 486.4,390.8 489.2,388.8 C492.0,386.9 495.7,386.0 499.0,384.9 C502.3,383.8 507.5,382.8 509.2,382.4 M349.7,4.8 C349.2,2.4 348.2,-5.0 346.3,-9.3 C344.4,-13.7 340.6,-17.2 338.2,-21.4 C335.7,-25.5 332.7,-29.7 331.5,-34.2 C330.2,-38.8 330.3,-44.0 330.7,-48.7 C331.2,-53.5 333.5,-58.1 333.9,-62.9 C334.4,-67.7 333.3,-75.0 333.2,-77.4 M622.5,229.2 C621.8,227.9 619.9,223.6 618.3,221.1 C616.6,218.6 614.1,216.6 612.5,214.0 C610.9,211.5 609.8,208.5 608.8,205.7 C607.8,202.8 607.7,199.5 606.3,196.8 C605.0,194.2 602.4,192.1 600.8,189.5 C599.2,186.9 597.6,182.6 596.9,181.3 M194.5,84.7 C192.9,84.9 188.2,85.1 185.2,85.7 C182.1,86.4 179.1,87.5 176.2,88.5 C173.3,89.6 170.4,90.9 167.6,92.2 C164.7,93.5 161.7,94.7 159.2,96.4 C156.7,98.2 154.5,100.6 152.5,103.0 C150.4,105.4 148.0,109.4 147.1,110.7 M212.4,44.1 C213.1,45.9 215.8,51.3 216.6,55.1 C217.4,58.9 216.9,63.0 217.1,66.9 C217.4,70.8 218.1,76.7 218.3,78.6 M37.2,165.2 C36.3,167.7 34.3,175.6 31.6,180.1 C28.9,184.6 25.0,188.4 21.1,192.0 C17.2,195.5 10.4,199.9 8.3,201.5 M27.5,249.9 C27.6,252.3 28.9,259.4 28.2,263.8 C27.5,268.3 24.1,272.3 23.1,276.7 C22.0,281.2 23.3,286.3 21.9,290.6 C20.5,294.9 17.8,299.3 14.6,302.4 C11.3,305.5 4.6,308.2 2.6,309.4 M101.8,289.5 C99.4,289.9 92.4,291.6 87.6,291.6 C82.9,291.7 78.2,290.2 73.5,289.8 C68.7,289.4 63.9,288.9 59.2,289.3 C54.5,289.7 47.5,291.8 45.2,292.3 M377.7,129.8 C378.4,131.4 380.1,136.5 382.1,139.3 C384.1,142.0 387.8,143.7 389.6,146.5 C391.4,149.4 391.6,153.2 393.0,156.4 C394.4,159.6 397.1,164.1 398.0,165.6 M452.8,491.4 C450.7,493.0 444.0,496.9 440.6,500.5 C437.3,504.2 434.4,508.8 432.6,513.4 C430.9,518.0 431.5,523.5 430.1,528.3 C428.8,533.2 425.5,540.0 424.5,542.4 M334.9,414.1 C336.5,412.5 341.4,407.8 344.6,404.6 C347.7,401.4 350.9,398.1 354.0,394.8 C357.0,391.5 360.6,388.5 363.0,384.7 C365.4,380.9 367.5,374.4 368.4,372.3 M408.3,131.2 C406.6,130.0 401.0,126.7 397.9,123.9 C394.8,121.0 391.8,117.8 389.6,114.2 C387.5,110.7 386.0,106.5 385.1,102.4 C384.3,98.3 385.4,93.7 384.4,89.7 C383.5,85.6 380.4,79.9 379.6,77.9 M658.2,462.1 C656.7,462.7 652.7,465.0 649.7,465.7 C646.8,466.3 643.5,465.6 640.6,466.2 C637.7,466.9 633.5,469.0 632.1,469.5 M476.6,94.0 C476.9,96.0 478.4,102.1 478.3,106.1 C478.2,110.2 477.1,114.3 476.1,118.2 C475.0,122.2 473.8,126.2 471.8,129.8 C469.8,133.3 467.3,136.9 464.1,139.3 C460.9,141.7 456.7,142.8 452.8,144.1 C448.9,145.5 442.9,146.8 440.9,147.3 M129.5,24.7 C127.7,25.2 122.4,27.0 118.8,27.8 C115.2,28.6 111.5,29.4 107.8,29.5 C104.2,29.5 100.5,28.0 96.8,28.1 C93.1,28.1 89.1,28.4 85.8,29.8 C82.5,31.2 80.2,34.8 76.9,36.5 C73.7,38.2 68.1,39.4 66.4,40.0 M504.1,315.8 C505.1,313.9 509.0,308.5 510.2,304.4 C511.4,300.4 510.1,295.6 511.2,291.6 C512.4,287.5 516.1,282.0 517.1,280.0 M133.0,37.2 C134.3,34.8 138.0,27.8 140.5,23.2 C143.1,18.6 145.6,14.0 148.3,9.5 C151.1,5.0 155.7,-1.4 157.2,-3.6 M104.8,152.8 C103.0,152.3 97.5,151.0 93.9,149.9 C90.3,148.7 86.3,147.9 83.3,145.9 C80.2,143.8 78.5,139.9 75.6,137.5 C72.7,135.1 69.1,133.6 66.0,131.4 C62.9,129.3 58.5,125.6 57.1,124.5 M9.1,457.3 C6.6,456.5 -0.9,453.0 -6.0,452.8 C-11.1,452.6 -16.3,455.8 -21.4,456.1 C-26.6,456.4 -34.5,454.7 -37.1,454.5 M446.9,450.0 C445.0,451.9 439.2,457.3 435.9,461.3 C432.6,465.4 429.1,469.7 427.1,474.4 C425.1,479.1 425.8,485.0 423.8,489.8 C421.8,494.6 418.6,499.1 415.1,503.0 C411.7,506.8 405.0,511.3 402.9,512.9 M93.0,454.8 C91.7,454.5 87.5,454.0 85.1,452.9 C82.6,451.8 80.6,449.7 78.4,448.2 C76.1,446.7 73.7,445.2 71.4,443.9 C69.0,442.5 66.2,441.7 64.1,440.0 C62.0,438.3 60.8,435.6 58.7,433.8 C56.7,432.0 53.1,429.9 51.9,429.2 M420.9,317.7 C422.7,318.3 428.6,319.2 431.8,321.0 C435.0,322.9 438.1,325.8 440.1,328.9 C442.1,332.0 443.3,336.0 443.8,339.7 C444.3,343.4 444.0,347.4 443.2,351.1 C442.5,354.7 439.8,358.1 439.3,361.8 C438.8,365.4 440.3,371.2 440.4,373.1 M536.0,419.1 C535.6,420.8 534.3,425.9 533.6,429.3 C533.0,432.7 532.4,436.1 531.9,439.5 C531.3,442.9 531.3,446.5 530.4,449.8 C529.5,453.1 527.0,457.8 526.4,459.4 M611.1,479.2 C612.5,479.6 616.9,480.2 619.5,481.5 C622.0,482.8 624.3,484.8 626.2,486.9 C628.1,489.0 629.5,491.7 630.9,494.2 C632.3,496.7 633.1,499.6 634.4,502.1 C635.7,504.7 637.3,507.1 638.8,509.6 C640.2,512.1 642.4,515.9 643.1,517.1 M148.0,216.9 C150.5,215.9 158.1,213.3 162.8,210.9 C167.5,208.5 172.1,205.7 176.4,202.6 C180.8,199.6 185.6,196.6 188.9,192.6 C192.3,188.7 193.2,182.6 196.6,178.7 C200.1,174.7 207.2,170.6 209.3,169.0 M313.0,491.8 C314.4,492.3 318.5,494.0 321.3,494.6 C324.1,495.2 327.1,495.0 330.0,495.4 C332.9,495.8 337.2,496.6 338.7,496.9 M300.7,443.7 C300.8,446.0 302.3,453.0 301.6,457.3 C300.9,461.7 297.8,465.6 296.2,469.9 C294.5,474.1 293.1,478.4 291.7,482.8 C290.3,487.1 289.6,491.7 287.7,495.8 C285.8,499.9 281.8,503.1 280.3,507.3 C278.8,511.4 278.9,518.5 278.6,520.8 M181.4,29.0 C179.0,29.3 171.7,31.6 166.9,31.2 C162.2,30.9 157.7,27.6 152.9,26.9 C148.2,26.2 143.1,27.8 138.3,27.1 C133.5,26.5 129.0,23.4 124.2,22.9 C119.5,22.4 112.1,24.1 109.6,24.3 M70.5,331.8 C72.3,330.6 78.0,327.5 81.0,324.5 C83.9,321.5 86.6,317.9 88.2,314.0 C89.7,310.2 90.4,305.7 90.4,301.5 C90.3,297.3 89.5,292.8 87.8,289.1 C86.1,285.3 82.2,282.6 80.1,279.0 C78.0,275.3 76.2,269.1 75.4,267.1 M180.8,150.4 C180.1,152.1 178.4,157.5 176.7,160.8 C175.0,164.1 172.5,167.0 170.7,170.3 C168.9,173.6 166.8,178.8 166.0,180.4 M473.6,57.6 C475.1,58.0 480.0,58.5 482.8,59.8 C485.7,61.0 488.5,63.0 490.7,65.2 C492.9,67.4 494.6,70.3 496.0,73.1 C497.4,76.0 498.5,80.7 499.0,82.2 M608.2,96.4 C609.4,94.1 612.2,86.6 615.5,82.6 C618.7,78.6 623.4,75.9 627.4,72.6 C631.5,69.3 635.2,65.5 639.5,62.7 C643.8,59.9 649.0,58.5 653.5,55.8 C657.9,53.1 663.9,48.0 666.0,46.5 M492.6,431.0 C491.8,432.9 489.6,438.7 487.9,442.6 C486.3,446.4 484.0,450.1 482.9,454.1 C481.8,458.0 482.6,462.6 481.3,466.5 C480.1,470.4 476.5,475.7 475.5,477.6 M382.8,70.2 C381.1,72.2 375.7,78.1 372.6,82.4 C369.5,86.7 367.5,91.8 364.2,95.9 C361.0,100.0 355.7,102.8 353.1,107.2 C350.5,111.6 348.9,117.2 348.5,122.4 C348.1,127.6 348.8,133.3 350.6,138.2 C352.3,143.0 357.6,149.4 359.0,151.6 M52.3,394.6 C54.5,393.2 61.1,388.4 65.9,386.5 C70.8,384.6 76.5,384.9 81.5,383.1 C86.4,381.4 93.3,377.2 95.7,376.0 M405.9,238.0 C405.0,239.2 402.9,243.1 400.8,245.0 C398.6,246.9 395.8,248.0 393.1,249.2 C390.5,250.3 387.4,250.5 384.8,251.7 C382.2,252.9 378.7,255.7 377.5,256.4 M435.0,336.8 C436.4,335.7 440.9,332.7 443.4,330.1 C445.8,327.6 447.0,323.8 449.5,321.4 C452.1,319.0 455.4,317.1 458.6,315.6 C461.8,314.2 465.7,314.2 468.9,312.8 C472.2,311.4 475.0,309.0 478.1,307.2 C481.1,305.4 485.8,302.7 487.4,301.8 M105.9,384.5 C105.1,386.8 101.9,393.7 101.2,398.4 C100.5,403.2 100.5,408.5 101.8,413.1 C103.0,417.7 107.5,423.9 108.7,426.1 M96.5,399.0 C97.8,398.8 101.8,398.1 104.5,397.8 C107.2,397.4 110.0,396.9 112.7,396.9 C115.4,397.0 118.1,398.1 120.8,398.0 C123.5,398.0 127.5,396.9 128.8,396.7 M47.3,1.2 C46.2,2.4 42.2,5.7 40.7,8.5 C39.1,11.2 39.5,15.0 38.1,17.9 C36.6,20.8 33.1,24.3 32.1,25.6 M324.4,387.1 C322.9,387.7 318.5,390.2 315.3,390.6 C312.2,391.0 308.9,389.8 305.7,389.6 C302.5,389.4 297.6,389.4 296.0,389.3 M29.0,29.5 C29.1,32.2 29.1,40.0 29.5,45.2 C29.8,50.4 31.9,55.7 31.3,60.8 C30.7,65.8 27.0,73.1 26.1,75.5 M599.9,282.2 C600.7,280.4 602.9,274.8 604.5,271.2 C606.1,267.5 608.1,264.0 609.3,260.2 C610.6,256.5 611.0,252.4 611.8,248.5 C612.6,244.6 613.3,240.7 613.9,236.8 C614.4,232.8 614.9,226.8 615.1,224.9 M628.4,137.3 C629.8,136.4 634.3,134.2 636.3,131.8 C638.4,129.5 638.9,125.9 640.7,123.3 C642.5,120.7 645.6,118.9 647.1,116.1 C648.6,113.4 648.7,110.0 649.5,106.9 C650.3,103.8 651.5,99.1 651.9,97.6 M566.8,375.8 C568.2,378.0 573.4,384.3 575.1,389.2 C576.8,394.0 576.1,399.7 577.0,404.8 C578.0,410.0 579.3,415.1 581.0,420.1 C582.6,425.1 584.1,430.4 586.9,434.7 C589.8,439.0 594.7,441.8 598.1,445.8 C601.4,449.8 605.6,456.6 607.1,458.8 M290.0,185.4 C290.0,184.0 290.2,179.6 290.3,176.7 C290.3,173.8 290.0,170.8 290.5,168.0 C291.0,165.2 293.0,162.6 293.4,159.8 C293.9,157.0 293.0,152.5 293.0,151.1 M100.0,66.7 C101.1,65.1 104.3,60.3 106.8,57.4 C109.3,54.5 112.4,52.0 114.8,49.1 C117.3,46.1 120.4,41.2 121.5,39.6 M53.8,140.4 C54.4,138.6 56.2,133.3 57.1,129.6 C58.0,126.0 58.9,122.2 59.1,118.5 C59.3,114.8 58.6,111.0 58.0,107.3 C57.5,103.6 56.0,98.1 55.6,96.3 M330.4,490.9 C329.6,492.6 327.4,497.8 325.6,501.0 C323.8,504.3 322.1,508.0 319.5,510.5 C316.8,513.0 311.4,515.2 309.7,516.1 M619.3,36.5 C618.9,37.9 617.6,42.1 617.3,45.0 C617.0,47.9 617.4,50.8 617.6,53.7 C617.9,56.6 618.8,60.9 619.0,62.3 M142.4,238.8 C141.5,241.1 138.1,247.8 136.9,252.5 C135.7,257.3 135.8,262.4 135.1,267.3 C134.4,272.2 132.8,277.0 132.8,281.9 C132.7,286.8 134.2,291.7 134.9,296.6 C135.5,301.5 136.3,308.9 136.6,311.3 M218.2,403.8 C220.8,403.3 228.9,402.7 233.9,401.0 C238.9,399.2 243.0,395.1 247.9,393.3 C252.9,391.5 258.4,390.4 263.6,390.2 C268.9,390.0 276.9,391.8 279.5,392.1 M228.6,447.1 C228.6,444.8 229.1,437.8 228.6,433.2 C228.2,428.7 226.5,424.2 225.9,419.6 C225.4,415.1 224.6,410.2 225.5,405.8 C226.4,401.4 228.7,396.9 231.4,393.2 C234.1,389.6 237.8,386.2 241.8,383.9 C245.7,381.7 252.8,380.4 255.0,379.7 M44.6,442.4 C45.6,444.8 48.9,451.9 50.3,456.8 C51.6,461.8 50.9,467.5 52.9,472.1 C55.0,476.7 60.8,482.3 62.4,484.4 M616.5,322.5 C614.5,322.6 608.5,322.8 604.6,323.3 C600.6,323.9 596.8,325.1 592.8,325.6 C588.9,326.1 584.7,327.0 580.9,326.4 C577.1,325.8 571.7,322.7 569.8,321.9 M197.0,65.6 C195.8,64.0 191.6,59.8 190.2,56.3 C188.8,52.9 189.5,48.7 188.4,45.1 C187.3,41.4 184.5,36.4 183.7,34.7 M135.2,267.1 C134.6,269.6 134.0,277.8 131.9,282.4 C129.7,287.0 126.0,291.4 122.0,294.6 C118.1,297.9 113.0,300.3 108.2,302.0 C103.3,303.7 95.3,304.6 92.8,305.1 M189.7,448.9 C188.6,451.3 185.7,458.4 183.3,463.0 C181.0,467.5 177.6,471.6 175.7,476.3 C173.8,481.0 172.6,488.7 171.9,491.2 M343.1,109.6 C342.4,111.1 340.7,115.7 339.0,118.4 C337.3,121.2 335.0,123.5 333.1,126.1 C331.2,128.7 328.6,131.1 327.4,134.0 C326.2,136.9 326.1,142.0 325.8,143.6 M494.2,20.5 C493.2,21.8 490.8,26.4 488.4,28.5 C485.9,30.6 482.6,32.2 479.5,33.0 C476.4,33.9 472.9,33.3 469.6,33.5 C466.3,33.6 461.3,33.8 459.6,33.9 M33.8,21.6 C31.4,21.1 23.7,20.8 19.3,18.9 C14.8,17.1 11.5,12.9 7.3,10.3 C3.1,7.7 -3.6,4.5 -5.8,3.4 M630.6,267.5 C632.3,269.5 638.1,275.1 640.8,279.5 C643.5,283.9 645.1,289.1 646.8,294.0 C648.4,299.0 650.0,306.7 650.6,309.3 M663.1,483.8 C661.9,484.7 658.2,487.6 655.7,489.3 C653.2,491.0 650.4,492.4 647.9,494.2 C645.4,495.9 641.8,498.8 640.6,499.8 M389.4,469.0 C387.9,468.6 383.6,467.0 380.6,466.8 C377.6,466.6 374.4,467.0 371.5,467.8 C368.6,468.6 365.6,469.9 363.2,471.7 C360.8,473.4 359.4,476.4 357.0,478.3 C354.7,480.2 350.5,482.2 349.1,482.9 M292.9,57.7 C293.5,55.8 295.0,50.3 296.3,46.7 C297.7,43.1 300.2,39.8 300.9,36.1 C301.5,32.4 300.6,28.5 300.3,24.6 C300.1,20.8 300.0,16.9 299.3,13.2 C298.6,9.4 296.6,4.0 296.0,2.1 M311.7,446.1 C314.0,445.2 321.1,443.0 325.5,441.0 C330.0,438.9 333.7,435.1 338.3,433.6 C342.9,432.2 348.3,431.5 353.0,432.2 C357.7,432.9 364.4,436.8 366.7,437.7 M603.9,365.9 C605.4,364.9 610.4,362.2 612.8,359.6 C615.2,357.0 617.2,353.7 618.5,350.3 C619.7,347.0 620.6,343.1 620.4,339.6 C620.2,336.0 618.9,332.3 617.3,329.1 C615.6,326.0 612.8,323.4 610.4,320.6 C608.0,317.9 604.0,314.1 602.8,312.8 M403.0,224.6 C403.4,222.4 404.7,215.6 405.2,211.1 C405.7,206.5 406.2,201.9 405.9,197.3 C405.5,192.8 403.5,186.1 403.1,183.9 M254.4,485.3 C253.2,484.5 249.9,481.7 247.5,480.0 C245.1,478.3 242.8,476.4 240.2,475.2 C237.6,474.1 234.6,473.5 231.7,473.3 C228.9,473.1 225.9,474.4 223.1,474.0 C220.2,473.6 217.7,471.7 214.9,470.9 C212.1,470.1 207.7,469.7 206.3,469.5 M156.3,326.8 C157.1,325.2 158.9,319.9 161.0,317.0 C163.1,314.1 165.9,311.4 168.9,309.4 C171.8,307.5 175.8,307.1 178.9,305.2 C182.0,303.3 185.1,301.0 187.2,298.2 C189.3,295.3 191.0,289.9 191.7,288.2 M396.7,485.3 C396.3,486.7 395.1,490.9 394.4,493.8 C393.8,496.7 394.0,499.8 392.8,502.4 C391.7,505.0 388.4,508.2 387.5,509.4 M244.0,77.2 C245.0,75.2 249.0,69.3 250.0,65.0 C251.0,60.6 249.2,55.7 249.9,51.3 C250.6,46.9 252.0,42.2 254.3,38.4 C256.5,34.5 261.2,32.0 263.3,28.1 C265.3,24.2 265.9,17.0 266.5,14.8 M376.2,150.0 C375.8,148.3 375.5,142.9 374.2,139.8 C372.8,136.8 370.0,134.4 368.1,131.5 C366.3,128.6 365.2,125.1 363.0,122.5 C360.9,119.9 357.5,118.4 355.1,115.9 C352.7,113.4 351.0,110.4 348.8,107.7 C346.7,105.0 343.3,101.1 342.2,99.7 M614.3,184.6 C615.3,182.3 618.2,175.5 620.5,171.1 C622.8,166.7 626.6,162.9 628.1,158.4 C629.6,153.8 630.1,148.4 629.5,143.6 C629.0,138.8 626.9,133.9 624.7,129.6 C622.6,125.2 618.2,121.8 616.4,117.3 C614.6,112.8 614.2,105.1 613.7,102.7 M242.7,350.5 C244.2,349.7 248.7,347.4 251.7,345.8 C254.6,344.2 257.3,341.8 260.5,340.9 C263.6,339.9 267.3,339.5 270.5,340.0 C273.7,340.5 276.6,343.3 279.8,343.8 C283.0,344.3 288.2,343.2 289.9,343.0 M445.1,46.1 C446.8,47.2 452.3,50.1 455.6,52.5 C458.9,54.9 461.3,58.6 464.8,60.7 C468.3,62.7 472.6,63.2 476.5,64.7 C480.3,66.2 484.2,67.6 487.8,69.4 C491.5,71.3 495.5,72.9 498.4,75.7 C501.4,78.4 504.3,84.1 505.5,85.7 M315.4,177.7 C313.8,177.6 308.9,177.5 305.7,177.2 C302.5,176.8 299.3,176.1 296.0,175.7 C292.8,175.3 289.6,174.9 286.3,174.9 C283.1,175.0 279.8,175.4 276.6,176.1 C273.5,176.8 268.9,178.7 267.4,179.2 M624.8,216.8 C624.4,214.6 623.2,207.9 622.2,203.5 C621.1,199.1 618.6,194.9 618.3,190.5 C618.0,186.1 619.3,181.4 620.2,177.0 C621.2,172.6 622.5,168.2 623.9,163.9 C625.3,159.6 626.1,154.8 628.6,151.2 C631.0,147.5 636.8,143.4 638.5,141.9 M396.2,259.1 C394.4,257.6 389.1,253.1 385.7,249.9 C382.4,246.7 379.4,243.1 376.1,239.8 C372.8,236.5 367.7,231.8 366.0,230.2 M89.4,241.1 C87.8,239.9 83.1,236.1 79.6,234.4 C76.1,232.7 72.2,231.7 68.4,230.8 C64.6,229.8 60.6,228.4 56.8,228.5 C53.0,228.6 49.2,230.6 45.3,231.3 C41.5,232.1 37.5,233.2 33.7,233.2 C29.8,233.1 24.0,231.4 22.0,231.0 M605.7,313.9 C606.7,312.7 610.4,309.5 612.0,306.8 C613.5,304.1 613.9,300.7 615.2,297.8 C616.4,294.9 618.6,292.3 619.5,289.3 C620.5,286.3 620.8,281.5 621.0,279.9 M227.2,310.4 C225.6,308.5 221.5,301.8 217.6,298.9 C213.7,296.1 207.8,296.0 203.8,293.2 C199.7,290.5 196.8,286.0 193.3,282.6 C189.7,279.1 186.5,274.7 182.3,272.3 C178.1,269.9 170.4,268.8 168.0,268.1 M406.1,451.8 C405.4,449.5 403.3,442.6 402.0,437.9 C400.8,433.2 398.7,428.4 398.8,423.7 C398.8,419.0 401.8,412.0 402.4,409.6 M658.2,364.3 C658.2,362.5 659.0,357.1 658.2,353.8 C657.3,350.6 655.1,347.6 653.3,344.6 C651.5,341.6 649.8,338.6 647.5,336.0 C645.2,333.4 640.9,330.3 639.6,329.2 M352.0,184.9 C354.2,183.9 360.8,180.5 365.4,178.8 C370.0,177.1 374.8,175.7 379.6,174.6 C384.3,173.4 389.2,172.5 394.1,171.7 C398.9,171.0 403.8,170.5 408.7,170.0 C413.6,169.5 418.6,169.7 423.4,168.8 C428.2,167.8 435.1,164.9 437.5,164.2 M255.9,491.5 C256.1,492.8 256.9,496.8 257.2,499.5 C257.5,502.2 257.5,504.9 257.8,507.6 C258.1,510.3 258.6,514.3 258.8,515.6 M600.4,59.6 C598.9,61.0 594.1,64.6 591.7,67.7 C589.3,70.7 587.8,74.5 585.9,78.0 C584.0,81.5 583.0,85.5 580.5,88.5 C578.0,91.4 574.5,93.7 571.0,95.6 C567.6,97.5 561.8,99.1 560.0,99.7 M22.2,290.0 C22.7,291.5 23.6,296.2 24.7,299.2 C25.8,302.3 27.2,305.1 28.7,308.0 C30.1,310.9 31.1,314.1 33.2,316.5 C35.2,318.8 38.8,319.9 40.8,322.3 C42.7,324.7 44.2,329.5 44.9,331.0 M370.8,311.4 C369.1,310.1 363.9,306.5 360.5,303.8 C357.2,301.2 353.9,298.4 350.7,295.6 C347.6,292.7 344.9,289.3 341.5,286.7 C338.2,284.1 332.4,281.2 330.6,280.1 M338.8,487.6 C339.2,489.7 341.0,495.8 341.4,499.9 C341.8,504.0 340.4,508.4 341.1,512.4 C341.9,516.5 344.7,520.0 346.0,524.0 C347.2,528.0 346.8,532.6 348.6,536.3 C350.3,539.9 355.2,544.3 356.6,545.9 M227.2,54.0 C227.7,52.4 229.2,47.7 230.4,44.6 C231.6,41.4 232.6,38.3 234.1,35.3 C235.6,32.4 238.4,29.9 239.5,26.9 C240.5,23.8 240.4,20.3 240.4,16.9 C240.3,13.6 239.8,10.3 239.3,7.0 C238.8,3.7 237.7,-1.1 237.4,-2.8 M104.5,374.9 C103.4,372.9 100.2,367.0 98.1,363.0 C95.9,359.0 92.8,355.3 91.6,351.1 C90.4,346.8 90.9,339.8 90.8,337.5 M25.0,294.3 C27.1,294.1 33.2,292.9 37.3,292.9 C41.4,292.9 45.5,294.1 49.6,294.5 C53.7,294.9 57.8,294.9 61.9,295.2 C66.0,295.5 70.1,296.1 74.2,296.2 C78.4,296.3 82.6,296.7 86.6,295.8 C90.6,295.0 96.1,291.9 98.0,291.1 M331.4,84.2 C331.5,86.3 331.6,92.6 332.1,96.9 C332.5,101.1 333.3,105.2 333.9,109.4 C334.6,113.6 335.2,117.8 335.9,122.0 C336.6,126.2 336.6,130.6 338.1,134.5 C339.6,138.4 342.1,142.2 344.9,145.2 C347.7,148.3 353.2,151.7 354.9,153.0 M495.8,50.4 C496.3,51.9 497.9,56.3 498.8,59.3 C499.6,62.3 500.0,65.5 501.1,68.4 C502.2,71.3 503.8,74.0 505.4,76.7 C507.0,79.4 509.6,83.3 510.5,84.6 M259.7,419.4 C260.3,417.6 262.4,412.2 263.1,408.4 C263.8,404.7 264.3,400.7 264.0,397.0 C263.7,393.2 261.7,387.6 261.3,385.8 M347.6,28.5 C349.3,27.7 354.3,24.7 357.9,23.6 C361.5,22.6 365.8,23.5 369.2,22.1 C372.6,20.8 375.5,17.9 378.5,15.6 C381.5,13.3 384.0,10.0 387.3,8.3 C390.6,6.6 396.5,5.9 398.3,5.4 M53.9,290.0 C52.3,289.0 47.6,286.4 44.5,284.4 C41.5,282.5 38.3,280.6 35.7,278.1 C33.2,275.7 32.0,271.7 29.2,269.5 C26.5,267.3 22.8,266.2 19.4,264.9 C16.1,263.6 10.8,262.2 9.1,261.7 M231.8,109.8 C234.1,110.6 241.0,113.7 245.8,114.8 C250.6,115.9 255.9,115.3 260.6,116.5 C265.4,117.7 269.6,121.4 274.4,122.2 C279.2,123.0 286.8,121.5 289.3,121.4 M626.5,442.6 C628.2,443.6 633.3,447.1 636.9,448.8 C640.6,450.6 644.6,451.5 648.4,453.1 C652.1,454.7 655.8,456.4 659.4,458.2 C663.0,460.1 666.8,461.7 670.1,464.1 C673.4,466.4 677.6,470.9 679.1,472.3 M328.0,384.7 C326.2,385.5 320.7,387.7 317.1,389.4 C313.5,391.1 309.7,392.6 306.6,394.9 C303.5,397.3 301.1,400.7 298.5,403.7 C296.0,406.8 292.7,411.7 291.5,413.3 M56.5,153.4 C58.4,155.1 64.1,160.1 67.6,163.7 C71.1,167.4 74.5,171.2 77.4,175.2 C80.4,179.3 82.1,184.3 85.2,188.3 C88.2,192.2 91.6,196.4 95.6,199.2 C99.7,202.0 107.2,204.2 109.6,205.2 M389.5,418.0 C390.7,420.2 394.2,426.8 396.5,431.2 C398.8,435.6 400.9,440.2 403.3,444.6 C405.7,449.0 409.3,452.9 410.8,457.6 C412.3,462.2 412.9,467.6 412.4,472.5 C411.8,477.3 408.2,484.2 407.4,486.6 M400.4,469.1 C401.4,470.6 404.9,474.8 406.4,478.1 C407.8,481.3 408.4,485.0 409.1,488.5 C409.8,492.0 410.5,495.6 410.5,499.1 C410.4,502.7 409.8,506.3 408.9,509.8 C408.0,513.2 405.9,518.2 405.3,519.9 M496.1,388.6 C497.7,388.3 502.4,387.5 505.6,387.0 C508.8,386.5 512.1,386.5 515.1,385.6 C518.2,384.7 521.3,383.5 523.9,381.8 C526.5,380.0 528.2,377.0 530.6,374.9 C533.1,372.8 536.2,371.6 538.4,369.3 C540.6,367.1 542.9,362.7 543.8,361.3 M652.3,429.0 C654.8,428.5 662.6,427.8 667.5,426.4 C672.4,425.0 677.7,423.5 681.7,420.5 C685.6,417.5 689.7,410.6 691.4,408.6 M61.1,1.8 C59.9,0.1 55.8,-4.7 53.8,-8.2 C51.8,-11.8 50.2,-15.8 49.0,-19.7 C47.8,-23.6 46.9,-27.8 46.7,-31.9 C46.5,-36.0 46.9,-40.3 47.8,-44.3 C48.8,-48.2 51.6,-53.9 52.3,-55.8 M657.8,372.3 C659.2,374.2 663.8,379.5 665.9,383.5 C668.0,387.5 669.7,392.0 670.4,396.5 C671.1,400.9 669.8,405.7 670.3,410.2 C670.8,414.8 671.3,419.6 673.1,423.7 C675.0,427.8 679.9,432.9 681.3,434.8 M155.6,383.9 C155.0,385.3 153.0,389.4 151.7,392.1 C150.4,394.9 148.9,397.6 147.8,400.4 C146.7,403.3 145.6,407.7 145.2,409.2 M29.4,194.8 C31.8,195.6 39.0,198.2 43.9,199.6 C48.8,201.0 53.8,202.7 58.9,203.1 C63.9,203.5 71.6,202.2 74.2,202.1 M537.6,3.2 C537.1,1.5 535.5,-3.4 534.7,-6.8 C533.9,-10.1 532.8,-13.6 532.8,-17.0 C532.7,-20.4 533.9,-23.8 534.4,-27.2 C534.9,-30.6 535.6,-35.8 535.8,-37.5 M188.7,8.6 C188.9,10.9 190.6,17.9 190.3,22.5 C190.0,27.1 188.8,31.9 186.9,36.1 C184.9,40.2 179.9,45.5 178.6,47.4 M80.5,52.4 C79.7,50.3 76.5,44.0 75.8,39.6 C75.1,35.2 76.9,30.4 76.2,26.0 C75.5,21.6 73.1,17.4 71.8,13.1 C70.4,8.7 68.8,2.1 68.2,-0.1 M241.6,109.8 C243.6,110.0 249.5,111.3 253.4,111.3 C257.3,111.3 261.2,109.9 265.2,109.7 C269.1,109.5 273.3,109.3 277.0,110.3 C280.7,111.4 283.9,114.2 287.5,115.9 C291.0,117.7 296.5,120.0 298.3,120.8 M42.5,285.8 C42.8,284.1 43.9,278.8 44.1,275.3 C44.4,271.8 43.5,268.2 44.0,264.7 C44.5,261.2 45.5,257.6 47.0,254.5 C48.6,251.4 52.1,249.2 53.5,246.0 C54.9,242.9 55.1,239.1 55.6,235.6 C56.0,232.1 56.1,226.8 56.2,225.0 M211.8,177.8 C209.5,178.4 202.4,179.8 198.2,181.9 C194.1,184.0 190.7,187.6 186.7,190.1 C182.7,192.7 178.6,194.9 174.4,197.1 C170.2,199.3 166.1,202.2 161.6,203.3 C157.1,204.4 152.0,204.4 147.5,203.6 C142.9,202.9 136.3,199.7 134.1,198.9 M351.0,120.1 C352.7,120.9 357.7,123.2 361.1,124.6 C364.5,126.0 367.9,127.8 371.5,128.5 C375.1,129.1 378.9,128.1 382.6,128.5 C386.2,128.8 391.6,130.2 393.4,130.5 M137.8,2.0 C136.2,1.0 130.8,-1.6 128.0,-4.1 C125.1,-6.6 122.4,-9.7 120.5,-13.1 C118.7,-16.4 117.3,-22.2 116.7,-24.0 M332.0,328.7 C333.4,327.8 337.7,325.0 340.4,322.9 C343.1,320.9 345.5,318.5 348.2,316.5 C350.9,314.4 354.1,313.0 356.6,310.7 C359.0,308.4 361.9,304.1 362.9,302.8 M560.0,276.6 C560.8,274.8 562.6,269.2 564.7,266.1 C566.7,262.9 569.9,260.5 572.4,257.6 C574.9,254.7 578.1,252.1 579.7,248.7 C581.3,245.4 580.6,241.0 581.9,237.5 C583.3,234.0 586.9,229.3 587.8,227.6 M164.3,404.4 C164.6,402.8 166.1,398.0 166.2,394.7 C166.2,391.5 165.5,388.1 164.6,385.0 C163.7,381.9 162.5,378.7 160.8,375.9 C159.2,373.1 155.6,369.6 154.5,368.4 M281.5,215.6 C281.8,213.6 283.3,207.8 283.7,203.9 C284.1,199.9 284.2,195.8 283.9,191.9 C283.5,187.9 283.1,183.8 281.8,180.1 C280.6,176.4 278.5,172.8 276.3,169.5 C274.1,166.2 270.0,161.8 268.7,160.2 M231.6,328.9 C233.5,329.0 239.3,329.8 243.1,329.6 C246.9,329.3 250.8,328.5 254.5,327.4 C258.2,326.3 261.5,324.0 265.2,323.1 C268.9,322.3 273.0,323.2 276.8,322.5 C280.5,321.7 285.8,319.2 287.6,318.5 M109.6,72.4 C111.2,74.5 116.0,80.9 119.1,85.2 C122.2,89.5 124.9,94.1 128.3,98.1 C131.7,102.2 136.8,105.0 139.5,109.4 C142.2,113.8 143.3,119.4 144.5,124.5 C145.8,129.6 146.4,135.0 147.0,140.2 C147.6,145.5 148.2,153.4 148.4,156.0 M334.4,471.5 C333.0,469.8 329.2,464.3 326.3,460.9 C323.4,457.6 319.8,454.8 316.9,451.5 C314.0,448.1 311.0,444.7 308.9,440.8 C306.9,436.9 306.7,432.0 304.5,428.3 C302.4,424.5 298.5,421.7 295.9,418.2 C293.3,414.6 290.0,408.7 288.8,406.9 M219.5,475.2 C220.3,472.7 223.4,465.4 224.7,460.3 C225.9,455.2 226.9,449.9 227.1,444.7 C227.3,439.5 226.8,434.1 225.8,429.0 C224.8,423.9 223.5,418.5 221.0,414.0 C218.4,409.5 213.0,406.6 210.7,402.0 C208.4,397.4 207.8,389.2 207.2,386.6 M556.5,327.8 C557.1,325.8 558.2,319.2 560.0,315.4 C561.8,311.5 565.9,308.6 567.4,304.7 C568.8,300.7 568.6,296.1 568.8,291.8 C569.0,287.5 568.6,281.0 568.6,278.8 M589.8,378.1 C587.5,377.0 580.6,373.4 575.8,371.3 C571.1,369.2 566.0,367.8 561.4,365.5 C556.8,363.1 552.9,358.9 548.1,357.3 C543.3,355.8 537.5,357.5 532.6,356.2 C527.6,354.9 522.5,352.6 518.5,349.5 C514.4,346.4 509.9,339.7 508.2,337.8 M311.5,225.1 C312.7,223.3 316.5,218.3 318.6,214.7 C320.7,211.1 322.8,207.3 324.1,203.4 C325.4,199.4 324.6,194.8 326.2,191.0 C327.7,187.2 332.1,182.4 333.3,180.6 M108.1,375.2 C106.1,376.0 100.4,378.7 96.5,380.4 C92.6,382.1 88.8,384.1 84.8,385.1 C80.7,386.2 76.4,387.1 72.2,386.9 C68.1,386.6 64.0,384.8 60.0,383.5 C56.0,382.2 50.1,379.8 48.2,379.0 M293.3,37.8 C292.2,36.6 289.5,32.3 287.0,30.2 C284.5,28.1 281.2,27.1 278.4,25.2 C275.7,23.4 271.8,20.3 270.5,19.3 M642.7,352.0 C642.2,349.9 641.6,343.2 639.9,339.4 C638.1,335.6 635.3,332.0 632.2,329.1 C629.0,326.2 623.1,323.3 621.3,322.2 M510.1,447.2 C510.2,449.0 509.6,454.5 510.2,458.0 C510.8,461.5 512.0,465.2 513.8,468.2 C515.5,471.3 519.2,473.3 520.8,476.5 C522.4,479.6 523.1,485.2 523.5,486.9 M494.9,271.2 C493.2,270.0 487.9,266.9 485.0,264.1 C482.1,261.3 479.5,258.0 477.6,254.5 C475.6,251.0 473.8,245.1 473.0,243.2 M69.0,449.7 C70.9,451.1 76.3,456.3 80.6,458.0 C84.8,459.7 90.1,460.5 94.6,460.0 C99.2,459.6 103.7,457.2 108.0,455.2 C112.3,453.3 116.6,451.0 120.5,448.3 C124.3,445.6 127.2,441.4 131.2,439.0 C135.3,436.7 142.4,434.9 144.6,434.1 M585.6,472.7 C584.2,471.4 579.7,468.0 577.2,465.3 C574.7,462.6 572.9,459.3 570.5,456.4 C568.2,453.5 565.0,451.2 563.0,448.1 C561.0,445.1 559.9,441.4 558.4,438.0 C556.9,434.6 554.7,431.3 553.9,427.8 C553.2,424.2 553.7,418.5 553.7,416.6" stroke="#efb27a" stroke-width="1.2" fill="none"/>
<path d="M10.9,135.9 C13.1,140.4 20.4,154.0 24.5,163.1 C28.5,172.1 35.3,175.8 35.3,190.3 C35.3,204.8 26.3,240.1 24.5,250.1" stroke="#f1eda0" stroke-width="1.8" fill="none"/>
<path d="M125.0,114.2 C129.6,113.3 145.9,110.5 152.2,108.7 C158.6,106.9 163.1,107.8 163.1,103.3 C163.1,98.8 158.1,86.1 152.2,81.5 C146.3,77.0 131.8,77.0 127.8,76.1" stroke="#f1eda0" stroke-width="1.8" fill="none"/>
<path d="M288.1,0.0 C289.0,4.5 292.2,19.0 293.6,27.2 C294.9,35.3 295.8,45.3 296.3,48.9" stroke="#f1eda0" stroke-width="1.8" fill="none"/>
<path d="M163.1,250.1 C161.3,244.6 158.1,224.7 152.2,217.5 C146.3,210.2 134.1,211.1 127.8,206.6 C121.4,202.0 116.4,193.0 114.2,190.3" stroke="#f1eda0" stroke-width="1.8" fill="none"/>
<path d="M48.9,250.1 C49.8,244.6 55.3,224.7 54.4,217.5 C53.5,210.2 45.3,208.4 43.5,206.6" stroke="#f1eda0" stroke-width="1.8" fill="none"/>
<path d="M504.5,0.0 C505.4,3.6 506.3,17.2 510.0,21.7 C513.6,26.3 521.7,28.1 526.3,27.2 C530.8,26.3 535.3,18.1 537.1,16.3" stroke="#f1eda0" stroke-width="1.8" fill="none"/>
<path d="M526.3,70.7 C529.0,72.5 538.0,75.2 542.6,81.5 C547.1,87.9 550.7,101.9 553.5,108.7 C556.2,115.5 554.4,119.6 558.9,122.3 C563.4,125.0 574.3,124.6 580.6,125.0 C587.0,125.5 594.2,125.0 596.9,125.0" stroke="#f1eda0" stroke-width="1.8" fill="none"/>
<path d="M672.0,97.9 C665.8,98.8 645.7,100.6 635.0,103.3 C624.3,106.0 614.2,107.8 607.8,114.2 C601.5,120.5 598.8,136.8 596.9,141.3" stroke="#f1eda0" stroke-width="1.8" fill="none"/>
<path d="M390.4,54.4 C394.9,55.3 409.4,57.1 417.5,59.8 C425.7,62.5 435.7,68.9 439.3,70.7" stroke="#f1eda0" stroke-width="1.8" fill="none"/>
<path d="M103.3,406.7 C106.0,409.8 115.5,417.5 119.6,425.7 C123.7,433.8 125.9,443.3 127.8,455.6 C129.6,467.8 130.0,491.8 130.5,499.1" stroke="#f1eda0" stroke-width="1.8" fill="none"/>
<path d="M0.0,406.7 C1.8,409.8 8.2,418.0 10.9,425.7 C13.6,433.4 16.3,440.6 16.3,452.9 C16.3,465.1 11.8,491.4 10.9,499.1" stroke="#f1eda0" stroke-width="1.8" fill="none"/>
<path d="M163.1,276.2 C164.0,280.7 166.7,293.4 168.5,303.4 C170.3,313.3 173.1,330.5 174.0,336.0" stroke="#f1eda0" stroke-width="1.8" fill="none"/>
<path d="M336.0,330.5 C332.1,333.3 318.7,340.1 312.6,346.9 C306.4,353.6 304.0,362.3 299.0,371.3 C294.0,380.4 285.4,396.2 282.7,401.2" stroke="#f1eda0" stroke-width="1.8" fill="none"/>
<path d="M81.5,357.7 C83.4,361.3 88.8,371.3 92.4,379.5 C96.0,387.6 101.5,402.1 103.3,406.7" stroke="#f1eda0" stroke-width="1.8" fill="none"/>
<path d="M624.1,384.9 C625.0,389.4 626.8,403.0 629.6,412.1 C632.3,421.1 637.3,424.8 640.4,439.3 C643.6,453.8 647.2,489.1 648.6,499.1" stroke="#f1eda0" stroke-width="1.8" fill="none"/>
<path d="M580.6,450.1 C583.3,452.9 592.4,458.3 596.9,466.5 C601.5,474.6 606.0,493.6 607.8,499.1" stroke="#f1eda0" stroke-width="1.8" fill="none"/>
<path d="M531.7,249.0 C532.6,253.5 537.1,267.1 537.1,276.2 C537.1,285.2 532.6,298.8 531.7,303.4" stroke="#f1eda0" stroke-width="1.8" fill="none"/>
<path d="M672.0,363.2 C669.4,361.3 660.6,356.8 656.7,352.3 C652.8,347.8 649.9,338.7 648.6,336.0" stroke="#f1eda0" stroke-width="1.8" fill="none"/>
<path d="M417.5,289.8 C419.8,296.6 429.8,317.0 431.1,330.5 C432.5,344.1 426.6,364.5 425.7,371.3" stroke="#f1eda0" stroke-width="1.8" fill="none"/>
<path d="M428.3,345.1 C425.3,345.4 416.4,346.0 410.4,347.0 C404.5,347.9 398.6,349.1 392.8,350.7 C387.1,352.3 381.5,354.6 375.8,356.5 C370.1,358.4 364.3,360.0 358.8,362.3 C353.3,364.7 345.4,369.2 342.8,370.6 M474.3,140.1 C476.6,138.1 483.1,131.9 487.8,128.1 C492.4,124.3 497.7,121.3 502.2,117.4 C506.7,113.4 510.4,108.5 514.9,104.6 C519.4,100.6 524.5,97.3 529.3,93.8 C534.1,90.2 541.3,84.9 543.8,83.1 M373.4,54.3 C376.3,54.0 385.3,53.3 391.3,52.4 C397.2,51.5 403.0,49.7 408.9,48.9 C414.8,48.0 420.9,48.4 426.9,47.6 C432.8,46.7 438.6,45.0 444.5,43.8 C450.4,42.7 459.3,41.4 462.2,40.9 M583.2,383.5 C581.8,386.2 578.1,394.4 575.0,399.6 C572.0,404.8 568.6,409.8 564.9,414.5 C561.3,419.2 557.1,423.6 553.0,428.0 C548.9,432.4 544.6,436.6 540.3,440.8 C536.0,444.9 529.4,451.1 527.2,453.1 M82.8,472.9 C81.9,470.1 79.4,461.4 77.3,455.8 C75.2,450.2 72.7,444.7 70.2,439.2 C67.8,433.8 65.1,428.4 62.6,422.9 C60.0,417.5 57.7,411.9 54.9,406.7 C52.1,401.4 47.2,393.8 45.7,391.2 M270.1,260.3 C269.0,257.5 265.5,249.2 263.5,243.6 C261.6,237.9 259.8,232.1 258.1,226.4 C256.5,220.6 254.9,214.8 253.5,209.0 C252.2,203.1 251.4,197.2 250.0,191.3 C248.7,185.5 246.2,176.8 245.4,173.9 M468.3,342.2 C470.3,344.5 475.8,351.6 479.8,356.1 C483.7,360.6 487.9,365.0 492.1,369.3 C496.2,373.6 500.8,377.6 504.7,382.1 C508.7,386.5 512.5,391.3 515.9,396.2 C519.2,401.2 523.5,409.1 525.1,411.7 M257.3,359.2 C259.4,357.0 265.7,350.6 269.6,346.1 C273.5,341.5 276.8,336.4 280.7,331.9 C284.6,327.3 288.8,323.0 293.0,318.7 C297.2,314.4 301.6,310.3 305.8,306.1 C310.0,301.8 316.1,295.2 318.2,293.0 M425.9,186.6 C423.5,184.8 416.4,179.2 411.3,176.0 C406.3,172.9 400.6,170.6 395.5,167.5 C390.3,164.4 385.6,160.7 380.6,157.4 C375.6,154.1 370.4,151.0 365.5,147.6 C360.5,144.3 353.2,139.0 350.7,137.3 M213.3,172.6 C212.2,169.8 208.4,161.6 206.5,155.9 C204.7,150.2 203.8,144.2 202.2,138.4 C200.7,132.6 199.1,126.8 197.4,121.1 C195.8,115.3 193.9,109.6 192.1,103.9 C190.3,98.2 187.7,89.6 186.9,86.7 M342.3,288.8 C345.3,289.2 354.2,290.7 360.1,291.1 C366.1,291.6 372.1,291.2 378.1,291.3 C384.1,291.3 390.2,291.0 396.1,291.5 C402.1,291.9 408.0,293.4 414.0,294.0 C419.9,294.6 428.9,294.8 431.9,295.0 M310.1,401.2 C309.0,403.9 306.0,412.5 303.3,417.8 C300.7,423.2 297.5,428.4 294.2,433.4 C290.9,438.4 287.2,443.1 283.5,447.8 C279.9,452.6 275.6,456.9 272.2,461.8 C268.8,466.7 264.5,474.7 262.9,477.2 M75.6,393.3 C78.5,392.5 87.2,390.2 92.9,388.4 C98.6,386.7 104.3,384.7 110.0,382.7 C115.6,380.7 121.2,378.4 126.9,376.5 C132.6,374.6 138.3,372.8 144.2,371.5 C150.0,370.3 159.0,369.4 162.0,369.0 M113.1,195.3 C113.1,192.3 112.5,183.3 112.7,177.3 C112.9,171.3 113.7,165.4 114.2,159.4 C114.7,153.4 115.2,147.4 115.7,141.5 C116.3,135.5 117.0,129.5 117.5,123.5 C118.0,117.6 118.5,108.6 118.7,105.6 M445.9,130.9 C443.0,130.4 434.1,128.8 428.2,127.6 C422.4,126.4 416.4,125.3 410.7,123.8 C404.9,122.2 399.4,119.6 393.6,118.1 C387.8,116.6 381.7,116.3 375.9,114.9 C370.0,113.5 361.5,110.7 358.6,109.8 M406.7,208.1 C404.0,209.4 396.1,213.6 390.5,215.9 C385.0,218.2 379.2,219.9 373.4,221.6 C367.7,223.3 361.9,225.0 356.0,226.2 C350.1,227.3 344.0,227.2 338.2,228.4 C332.3,229.5 323.6,232.1 320.7,232.9 M393.9,0.7 C391.0,-0.1 382.3,-2.8 376.5,-4.0 C370.6,-5.2 364.5,-5.3 358.7,-6.5 C352.8,-7.7 347.0,-9.3 341.3,-11.2 C335.6,-13.0 330.2,-15.7 324.5,-17.7 C318.8,-19.6 310.1,-22.0 307.3,-22.9 M642.6,273.5 C642.3,276.5 641.5,285.5 641.0,291.4 C640.6,297.4 640.4,303.4 639.9,309.4 C639.4,315.4 638.6,321.3 638.0,327.3 C637.4,333.3 636.8,339.3 636.6,345.3 C636.3,351.2 636.5,360.3 636.5,363.3 M434.1,371.5 C432.4,374.0 427.7,381.7 424.2,386.6 C420.7,391.4 416.8,396.0 412.9,400.6 C409.1,405.2 404.7,409.3 400.9,414.0 C397.2,418.7 394.1,423.9 390.4,428.6 C386.7,433.3 380.6,440.0 378.6,442.2 M167.4,240.5 C167.9,243.5 168.8,252.5 170.1,258.3 C171.5,264.1 173.5,269.8 175.3,275.5 C177.2,281.3 179.6,286.8 181.1,292.6 C182.6,298.4 183.5,304.4 184.3,310.3 C185.1,316.2 185.6,325.2 185.9,328.2 M177.1,47.8 C176.8,44.9 175.8,35.9 175.3,29.9 C174.8,24.0 174.8,17.9 174.1,12.0 C173.4,6.0 172.4,0.1 171.0,-5.8 C169.6,-11.6 167.7,-17.3 165.7,-23.0 C163.8,-28.6 160.3,-36.9 159.2,-39.7 M410.1,10.0 C409.5,7.1 407.7,-1.7 406.3,-7.6 C404.9,-13.4 403.2,-19.2 401.8,-25.0 C400.3,-30.8 398.6,-36.6 397.6,-42.5 C396.7,-48.4 397.0,-54.5 396.1,-60.4 C395.3,-66.4 393.2,-75.1 392.6,-78.1 M301.4,291.1 C298.9,289.4 291.2,284.7 286.4,281.1 C281.6,277.5 277.3,273.3 272.5,269.7 C267.7,266.0 262.5,263.0 257.8,259.3 C253.0,255.7 248.2,252.0 243.9,247.9 C239.6,243.7 233.8,236.8 231.8,234.6 M493.7,0.7 C492.9,3.6 490.7,12.4 488.5,17.9 C486.3,23.5 483.4,28.8 480.7,34.2 C478.0,39.5 474.8,44.7 472.4,50.1 C469.9,55.6 467.6,61.2 465.8,66.9 C463.9,72.6 462.1,81.4 461.3,84.3 M30.0,63.1 C30.3,60.1 31.6,51.2 32.3,45.3 C32.9,39.3 33.5,33.3 33.8,27.3 C34.1,21.3 33.9,15.3 34.2,9.3 C34.6,3.4 35.1,-2.6 36.0,-8.6 C36.9,-14.5 39.1,-23.2 39.7,-26.2 M79.7,272.6 C76.7,272.5 67.7,272.4 61.7,272.1 C55.7,271.8 49.8,270.9 43.8,270.8 C37.8,270.7 31.8,271.6 25.8,271.6 C19.8,271.6 13.8,271.0 7.8,271.1 C1.8,271.2 -7.2,272.1 -10.2,272.3 M655.3,493.8 C655.1,496.8 654.6,505.8 654.3,511.8 C654.0,517.8 653.5,523.8 653.4,529.8 C653.3,535.8 653.4,541.8 653.7,547.8 C654.1,553.7 654.5,559.8 655.4,565.7 C656.4,571.6 658.8,580.3 659.5,583.2 M360.8,405.6 C359.7,402.8 356.4,394.4 354.3,388.8 C352.2,383.2 350.5,377.4 348.2,371.9 C345.9,366.3 343.3,360.9 340.6,355.5 C338.0,350.2 335.1,344.9 332.1,339.7 C329.2,334.5 324.4,326.8 322.9,324.2 M560.4,27.1 C561.2,30.0 564.2,38.6 565.4,44.4 C566.6,50.3 566.6,56.4 567.8,62.3 C569.0,68.1 571.0,73.8 572.7,79.6 C574.4,85.4 576.1,91.1 577.8,96.9 C579.5,102.6 582.0,111.3 582.8,114.1 M434.7,391.4 C437.6,392.2 446.4,394.2 452.1,396.1 C457.8,397.9 463.2,400.5 468.9,402.5 C474.5,404.6 480.3,406.1 486.0,408.2 C491.6,410.3 497.0,413.1 502.6,415.0 C508.3,416.8 517.2,418.6 520.1,419.3 M422.4,171.9 C422.8,168.9 423.9,160.0 424.8,154.0 C425.6,148.1 426.5,142.1 427.4,136.2 C428.4,130.3 429.6,124.4 430.5,118.5 C431.3,112.5 432.1,106.6 432.4,100.6 C432.7,94.6 432.4,85.6 432.4,82.6 M464.1,107.7 C466.9,106.7 475.3,103.3 481.0,101.4 C486.7,99.5 492.6,98.4 498.3,96.4 C503.9,94.4 509.3,91.7 514.9,89.5 C520.5,87.3 526.1,85.3 531.7,83.1 C537.3,80.9 545.6,77.5 548.4,76.4 M376.9,349.1 C374.0,349.9 365.4,352.7 359.6,354.1 C353.7,355.5 347.9,356.8 341.9,357.6 C336.0,358.4 329.9,358.8 324.0,358.8 C318.0,358.8 312.0,357.7 306.0,357.6 C300.0,357.5 291.0,358.2 288.0,358.4 M504.2,29.2 C505.4,31.9 509.1,40.1 511.6,45.6 C514.0,51.1 516.8,56.4 518.8,62.0 C520.8,67.7 522.1,73.6 523.6,79.4 C525.0,85.2 526.5,91.1 527.4,97.0 C528.3,102.9 528.7,111.9 529.0,114.9 M635.8,72.9 C633.2,74.4 625.1,78.5 620.1,81.8 C615.1,85.1 610.4,88.9 605.8,92.7 C601.1,96.5 596.8,100.7 592.2,104.5 C587.6,108.3 582.5,111.7 578.0,115.6 C573.4,119.5 567.1,125.9 564.9,127.9" stroke="#8a8a8a" stroke-width="0.9" fill="none"/>
<path d="M43.5,27.2 C48.0,34.4 60.7,58.0 70.7,70.7 C80.6,83.4 91.5,93.8 103.3,103.3 C115.1,112.8 130.5,121.4 141.3,127.8 C152.2,134.1 157.7,138.2 168.5,141.3 C179.4,144.5 193.9,145.0 206.6,146.8 C219.3,148.6 233.8,151.3 244.6,152.2 C255.5,153.1 260.9,153.1 271.8,152.2 C282.7,151.3 299.2,147.7 309.9,146.8 C320.6,145.9 331.6,146.8 336.0,146.8" stroke="#858585" stroke-width="1.0" fill="none"/>
<path d="M0.0,116.9 C12.7,120.1 55.7,131.8 76.1,135.9 C96.5,140.0 109.6,140.9 122.3,141.3 C135.0,141.8 144.5,138.6 152.2,138.6 C159.9,138.6 165.8,140.9 168.5,141.3" stroke="#858585" stroke-width="1.0" fill="none"/>
<path d="M0.0,70.7 C10.0,72.0 38.1,76.1 59.8,78.8 C81.5,81.5 111.4,83.8 130.5,87.0 C149.5,90.2 161.3,96.5 174.0,97.9 C186.6,99.2 194.8,96.0 206.6,95.1 C218.4,94.2 233.8,92.9 244.6,92.4 C255.5,92.0 256.6,93.3 271.8,92.4 C287.0,91.5 325.3,87.9 336.0,87.0" stroke="#858585" stroke-width="1.0" fill="none"/>
<path d="M157.7,5.4 C162.2,11.3 175.8,28.1 184.8,40.8 C193.9,53.5 203.0,71.1 212.0,81.5 C221.1,92.0 229.2,97.9 239.2,103.3 C249.2,108.7 259.1,107.4 271.8,114.2 C284.5,121.0 308.1,139.1 315.3,144.1" stroke="#858585" stroke-width="1.0" fill="none"/>
<path d="M0.0,174.0 C9.1,176.2 39.4,186.6 54.4,187.6 C69.3,188.5 78.4,182.6 89.7,179.4 C101.0,176.2 111.0,172.6 122.3,168.5 C133.6,164.4 151.8,157.2 157.7,154.9" stroke="#858585" stroke-width="1.0" fill="none"/>
<path d="M68.0,250.1 C71.1,244.6 80.2,227.4 87.0,217.5 C93.8,207.5 101.9,198.4 108.7,190.3 C115.5,182.1 120.5,175.3 127.8,168.5 C135.0,161.7 148.1,152.7 152.2,149.5" stroke="#858585" stroke-width="1.0" fill="none"/>
<path d="M38.1,0.0 C39.9,5.4 42.1,15.4 48.9,32.6 C55.7,49.8 72.5,87.0 78.8,103.3 C85.2,119.6 85.6,125.9 87.0,130.5" stroke="#858585" stroke-width="1.0" fill="none"/>
<path d="M0.0,135.9 L10.9,250.1" stroke="#858585" stroke-width="1.0" fill="none"/>
<path d="M417.5,160.4 C422.1,158.1 434.8,151.8 444.7,146.8 C454.7,141.8 466.5,135.9 477.3,130.5 C488.2,125.0 499.1,118.7 510.0,114.2 C520.8,109.6 530.8,106.9 542.6,103.3 C554.4,99.7 569.8,94.7 580.6,92.4 C591.5,90.2 592.6,91.5 607.8,89.7 C623.0,87.9 661.3,82.9 672.0,81.5" stroke="#858585" stroke-width="1.0" fill="none"/>
<path d="M444.7,0.0 C446.5,4.5 451.1,18.1 455.6,27.2 C460.1,36.2 466.5,45.3 471.9,54.4 C477.3,63.4 482.8,74.3 488.2,81.5 C493.7,88.8 498.2,93.3 504.5,97.9 C510.9,102.4 522.6,106.9 526.3,108.7" stroke="#858585" stroke-width="1.0" fill="none"/>
<path d="M488.2,0.0 C490.9,4.5 498.2,18.1 504.5,27.2 C510.9,36.2 519.9,47.1 526.3,54.4 C532.6,61.6 537.1,66.1 542.6,70.7 C548.0,75.2 556.2,79.7 558.9,81.5" stroke="#858585" stroke-width="1.0" fill="none"/>
<path d="M336.0,70.7 C345.1,71.6 372.2,74.3 390.4,76.1 C408.5,77.9 435.7,80.6 444.7,81.5" stroke="#858585" stroke-width="1.0" fill="none"/>
<path d="M531.7,103.3 C544.4,98.3 584.4,80.2 607.8,73.4 C631.2,66.6 661.3,64.3 672.0,62.5" stroke="#858585" stroke-width="1.0" fill="none"/>
<path d="M417.5,179.4 C426.6,178.5 453.8,175.8 471.9,174.0 C490.0,172.1 508.1,170.3 526.3,168.5 C544.4,166.7 571.6,164.0 580.6,163.1" stroke="#858585" stroke-width="1.0" fill="none"/>
<path d="M607.8,95.1 C612.3,97.4 624.3,104.6 635.0,108.7 C645.7,112.8 665.8,117.8 672.0,119.6" stroke="#858585" stroke-width="1.0" fill="none"/>
<path d="M363.2,0.0 C363.6,9.1 367.7,36.2 365.9,54.4 C364.1,72.5 357.3,95.1 352.3,108.7 C347.3,122.3 338.7,131.4 336.0,135.9" stroke="#858585" stroke-width="1.0" fill="none"/>
<path d="M336.0,201.1 C345.1,202.0 372.2,204.8 390.4,206.6 C408.5,208.4 428.4,210.2 444.7,212.0 C461.0,213.8 481.0,216.5 488.2,217.5" stroke="#858585" stroke-width="1.0" fill="none"/>
<path d="M336.0,265.3 C329.8,268.0 314.2,274.4 299.0,281.6 C283.8,288.9 259.1,300.6 244.6,308.8 C230.1,317.0 220.2,322.4 212.0,330.5 C203.9,338.7 201.1,345.9 195.7,357.7 C190.3,369.5 183.0,389.9 179.4,401.2 C175.8,412.5 178.5,416.6 174.0,425.7 C169.4,434.7 163.1,447.9 152.2,455.6 C141.3,463.3 122.8,465.5 108.7,471.9 C94.7,478.2 79.3,489.1 68.0,493.6 C56.6,498.2 45.3,498.2 40.8,499.1" stroke="#858585" stroke-width="1.0" fill="none"/>
<path d="M0.0,338.7 C9.1,333.7 36.2,315.6 54.4,308.8 C72.5,302.0 90.6,297.9 108.7,297.9 C126.8,297.9 149.5,306.1 163.1,308.8 C176.7,311.5 176.7,313.8 190.3,314.2 C203.9,314.7 235.6,312.0 244.6,311.5" stroke="#858585" stroke-width="1.0" fill="none"/>
<path d="M0.0,379.5 C5.4,383.1 21.3,394.0 32.6,401.2 C43.9,408.5 57.5,416.6 68.0,423.0 C78.4,429.3 84.7,432.9 95.1,439.3 C105.6,445.6 119.1,460.1 130.5,461.0 C141.8,461.9 152.2,451.0 163.1,444.7 C174.0,438.4 184.4,429.3 195.7,423.0 C207.0,416.6 225.2,409.4 231.0,406.7" stroke="#858585" stroke-width="1.0" fill="none"/>
<path d="M217.5,499.1 C218.4,492.7 220.2,473.7 222.9,461.0 C225.6,448.3 229.2,434.7 233.8,423.0 C238.3,411.2 244.6,400.3 250.1,390.3 C255.5,380.4 260.0,373.1 266.4,363.2 C272.7,353.2 284.5,336.0 288.1,330.5" stroke="#858585" stroke-width="1.0" fill="none"/>
<path d="M299.0,499.1 C299.9,493.6 301.7,478.7 304.4,466.5 C307.1,454.2 311.7,439.3 315.3,425.7 C318.9,412.1 322.7,395.3 326.2,384.9 C329.6,374.5 334.3,366.8 336.0,363.2" stroke="#858585" stroke-width="1.0" fill="none"/>
<path d="M108.7,249.0 C107.8,251.7 105.1,259.9 103.3,265.3 C101.5,270.7 98.8,278.9 97.9,281.6" stroke="#858585" stroke-width="1.0" fill="none"/>
<path d="M244.6,308.8 C249.2,312.4 262.8,321.5 271.8,330.5 C280.9,339.6 289.9,355.0 299.0,363.2 C308.1,371.3 320.0,375.8 326.2,379.5 C332.3,383.1 334.3,384.0 336.0,384.9" stroke="#858585" stroke-width="1.0" fill="none"/>
<path d="M450.2,249.0 C453.8,253.5 463.8,267.1 471.9,276.2 C480.1,285.2 490.0,293.4 499.1,303.4 C508.1,313.3 517.2,324.7 526.3,336.0 C535.3,347.3 544.4,360.4 553.5,371.3 C562.5,382.2 571.6,389.9 580.6,401.2 C589.7,412.5 598.8,426.1 607.8,439.3 C616.9,452.4 628.7,470.1 635.0,480.0 C641.3,490.0 644.1,495.9 645.9,499.1" stroke="#858585" stroke-width="1.0" fill="none"/>
<path d="M336.0,371.3 C340.5,370.0 354.1,366.3 363.2,363.2 C372.2,360.0 381.3,356.8 390.4,352.3 C399.4,347.8 408.5,341.9 417.5,336.0 C426.6,330.1 435.7,322.4 444.7,317.0 C453.8,311.5 462.8,308.8 471.9,303.4 C481.0,297.9 490.0,293.4 499.1,284.3 C508.1,275.3 521.7,254.9 526.3,249.0" stroke="#858585" stroke-width="1.0" fill="none"/>
<path d="M390.4,249.0 C392.6,253.5 397.2,267.1 404.0,276.2 C410.7,285.2 422.1,294.3 431.1,303.4 C440.2,312.4 450.6,321.5 458.3,330.5 C466.0,339.6 472.4,348.7 477.3,357.7 C482.3,366.8 482.8,374.9 488.2,384.9 C493.7,394.9 502.7,407.6 510.0,417.5 C517.2,427.5 525.4,438.4 531.7,444.7 C538.0,451.0 545.3,453.8 548.0,455.6" stroke="#858585" stroke-width="1.0" fill="none"/>
<path d="M336.0,308.8 C340.5,310.6 354.1,313.8 363.2,319.7 C372.2,325.6 381.3,336.9 390.4,344.1 C399.4,351.4 407.6,354.6 417.5,363.2 C427.5,371.8 441.1,385.4 450.2,395.8 C459.2,406.2 465.6,415.7 471.9,425.7 C478.2,435.6 482.8,443.3 488.2,455.6 C493.7,467.8 501.8,491.8 504.5,499.1" stroke="#858585" stroke-width="1.0" fill="none"/>
<path d="M542.6,461.0 C548.9,461.5 569.8,462.8 580.6,463.7 C591.5,464.6 592.6,463.7 607.8,466.5 C623.0,469.2 661.3,477.8 672.0,480.0" stroke="#858585" stroke-width="1.0" fill="none"/>
<path d="M607.8,363.2 L672.0,376.8" stroke="#858585" stroke-width="1.0" fill="none"/>
<path d="M390.4,499.1 C393.1,493.6 400.8,478.7 406.7,466.5 C412.6,454.2 418.4,438.4 425.7,425.7 C432.9,413.0 442.5,401.7 450.2,390.3 C457.9,379.0 468.3,363.2 471.9,357.7" stroke="#858585" stroke-width="1.0" fill="none"/>
<path d="M336.0,287.1 C345.1,288.9 372.2,296.1 390.4,297.9 C408.5,299.7 426.6,299.7 444.7,297.9 C462.8,296.1 481.0,290.7 499.1,287.1 C517.2,283.4 544.4,278.0 553.5,276.2" stroke="#858585" stroke-width="1.0" fill="none"/>
<path d="M0.0,68.0 C5.4,69.3 21.3,72.9 32.6,76.1 C43.9,79.3 56.2,83.4 68.0,87.0 C79.7,90.6 93.3,92.9 103.3,97.9 C113.3,102.8 119.6,110.5 127.8,116.9 C135.9,123.2 148.1,132.7 152.2,135.9" stroke="#f0b47a" stroke-width="1.6" fill="none"/>
<path d="M0.0,81.5 C9.1,81.5 33.1,82.0 54.4,81.5 C75.7,81.1 111.4,79.7 127.8,78.8 C144.1,77.9 141.8,78.4 152.2,76.1 C162.6,73.8 178.5,66.1 190.3,65.2 C202.0,64.3 209.3,68.9 222.9,70.7 C236.5,72.5 253.0,75.2 271.8,76.1 C290.7,77.0 325.3,76.1 336.0,76.1" stroke="#f0b47a" stroke-width="1.6" fill="none"/>
<path d="M0.0,195.7 C7.7,194.3 29.0,187.6 46.2,187.6 C63.4,187.6 87.4,193.4 103.3,195.7 C119.1,198.0 128.7,199.3 141.3,201.1 C154.0,203.0 166.7,208.4 179.4,206.6 C192.1,204.8 206.6,193.4 217.5,190.3 C228.3,187.1 232.9,188.0 244.6,187.6 C256.4,187.1 272.9,187.1 288.1,187.6 C303.3,188.0 328.0,189.8 336.0,190.3" stroke="#f0b47a" stroke-width="1.6" fill="none"/>
<path d="M0.0,229.7 C6.8,231.5 22.7,239.0 40.8,240.6 C58.9,242.1 90.2,240.8 108.7,239.2 C127.3,237.6 138.6,232.4 152.2,231.0 C165.8,229.7 176.7,231.5 190.3,231.0 C203.9,230.6 220.2,229.7 233.8,228.3 C247.3,227.0 254.8,224.7 271.8,222.9 C288.8,221.1 325.3,218.4 336.0,217.5" stroke="#f0b47a" stroke-width="1.6" fill="none"/>
<path d="M62.5,0.0 C63.0,11.3 65.2,45.3 65.2,68.0 C65.2,90.6 64.3,115.5 62.5,135.9 C60.7,156.3 54.8,171.2 54.4,190.3 C53.9,209.3 58.9,240.1 59.8,250.1" stroke="#f0b47a" stroke-width="1.6" fill="none"/>
<path d="M27.2,0.0 C28.1,9.1 33.5,38.5 32.6,54.4 C31.7,70.2 24.5,81.5 21.7,95.1 C19.0,108.7 15.4,120.1 16.3,135.9 C17.2,151.8 24.0,171.2 27.2,190.3 C30.4,209.3 34.0,240.1 35.3,250.1" stroke="#f0b47a" stroke-width="1.6" fill="none"/>
<path d="M125.0,0.0 C127.8,5.4 135.0,21.7 141.3,32.6 C147.7,43.5 155.4,55.7 163.1,65.2 C170.8,74.7 179.4,81.5 187.6,89.7 C195.7,97.9 203.4,105.6 212.0,114.2 C220.6,122.8 230.1,132.3 239.2,141.3 C248.3,150.4 258.2,160.8 266.4,168.5 C274.5,176.2 284.5,184.4 288.1,187.6" stroke="#f0b47a" stroke-width="1.6" fill="none"/>
<path d="M206.6,0.0 C207.5,5.9 207.5,23.6 212.0,35.3 C216.5,47.1 228.3,61.6 233.8,70.7 C239.2,79.7 242.8,86.5 244.6,89.7" stroke="#f0b47a" stroke-width="1.6" fill="none"/>
<path d="M244.6,0.0 C245.5,5.4 247.8,21.7 250.1,32.6 C252.3,43.5 254.6,55.7 258.2,65.2 C261.8,74.7 266.8,81.5 271.8,89.7 C276.8,97.9 283.1,106.5 288.1,114.2 C293.1,121.9 297.2,129.6 301.7,135.9 C306.2,142.2 313.0,149.5 315.3,152.2" stroke="#f0b47a" stroke-width="1.6" fill="none"/>
<path d="M293.6,0.0 C294.5,5.4 295.8,22.7 299.0,32.6 C302.2,42.6 309.0,51.6 312.6,59.8 C316.2,68.0 318.0,72.5 320.7,81.5 C323.5,90.6 326.4,106.0 328.9,114.2 C331.4,122.3 334.8,127.8 336.0,130.5" stroke="#f0b47a" stroke-width="1.6" fill="none"/>
<path d="M174.0,68.0 C176.7,72.5 184.8,87.0 190.3,95.1 C195.7,103.3 200.7,110.1 206.6,116.9 C212.5,123.7 219.3,130.0 225.6,135.9 C231.9,141.8 237.8,146.8 244.6,152.2 C251.4,157.7 262.8,165.8 266.4,168.5" stroke="#f0b47a" stroke-width="1.6" fill="none"/>
<path d="M108.7,250.1 C107.8,243.7 103.3,224.2 103.3,212.0 C103.3,199.8 106.5,187.6 108.7,176.7 C111.0,165.8 113.3,155.4 116.9,146.8 C120.5,138.2 126.4,133.2 130.5,125.0 C134.5,116.9 139.5,106.9 141.3,97.9 C143.2,88.8 141.3,75.2 141.3,70.7" stroke="#f0b47a" stroke-width="1.6" fill="none"/>
<path d="M174.0,250.1 C174.4,244.6 177.6,227.4 176.7,217.5 C175.8,207.5 170.8,199.3 168.5,190.3 C166.3,181.2 164.0,167.6 163.1,163.1" stroke="#f0b47a" stroke-width="1.6" fill="none"/>
<path d="M0.0,168.5 C5.4,169.4 19.9,174.4 32.6,174.0 C45.3,173.5 63.4,167.6 76.1,165.8 C88.8,164.0 103.3,163.5 108.7,163.1" stroke="#f0b47a" stroke-width="1.6" fill="none"/>
<path d="M78.8,144.1 C80.6,147.2 82.9,158.1 89.7,163.1 C96.5,168.1 109.2,175.8 119.6,174.0 C130.0,172.1 146.8,155.8 152.2,152.2" stroke="#f0b47a" stroke-width="1.6" fill="none"/>
<path d="M81.5,0.0 C82.4,4.5 87.0,18.1 87.0,27.2 C87.0,36.2 81.1,45.3 81.5,54.4 C82.0,63.4 87.4,72.5 89.7,81.5 C92.0,90.6 94.2,104.2 95.1,108.7" stroke="#f0b47a" stroke-width="1.6" fill="none"/>
<path d="M0.0,27.2 C4.5,28.1 18.1,32.6 27.2,32.6 C36.2,32.6 44.4,28.1 54.4,27.2 C64.3,26.3 77.0,29.0 87.0,27.2 C96.9,25.4 107.8,20.8 114.2,16.3 C120.5,11.8 123.2,2.7 125.0,0.0" stroke="#f0b47a" stroke-width="1.6" fill="none"/>
<path d="M217.5,250.1 C218.4,244.6 220.2,227.4 222.9,217.5 C225.6,207.5 230.1,195.3 233.8,190.3 C237.4,185.3 242.8,188.0 244.6,187.6" stroke="#f0b47a" stroke-width="1.6" fill="none"/>
<path d="M258.2,250.1 C258.7,246.0 258.7,232.9 260.9,225.6 C263.2,218.4 267.3,212.9 271.8,206.6 C276.3,200.2 285.4,190.7 288.1,187.6" stroke="#f0b47a" stroke-width="1.6" fill="none"/>
<path d="M336.0,103.3 C332.1,105.1 318.7,108.7 312.6,114.2 C306.4,119.6 301.3,132.3 299.0,135.9" stroke="#f0b47a" stroke-width="1.6" fill="none"/>
<path d="M152.2,190.3 C158.6,187.6 179.4,177.6 190.3,174.0 C201.1,170.3 212.9,169.4 217.5,168.5" stroke="#f0b47a" stroke-width="1.6" fill="none"/>
<path d="M336.0,152.2 C340.5,150.4 354.1,144.1 363.2,141.3 C372.2,138.6 381.3,136.8 390.4,135.9 C399.4,135.0 408.5,136.8 417.5,135.9 C426.6,135.0 434.8,133.2 444.7,130.5 C454.7,127.8 466.5,123.2 477.3,119.6 C488.2,116.0 499.1,111.4 510.0,108.7 C520.8,106.0 537.1,104.2 542.6,103.3" stroke="#f0b47a" stroke-width="1.6" fill="none"/>
<path d="M439.3,70.7 C445.6,68.0 465.6,56.2 477.3,54.4 C489.1,52.6 500.9,58.0 510.0,59.8 C519.0,61.6 521.7,63.4 531.7,65.2 C541.7,67.0 557.1,67.5 569.8,70.7 C582.4,73.8 590.8,85.6 607.8,84.3 C624.8,82.9 661.3,66.1 672.0,62.5" stroke="#f0b47a" stroke-width="1.6" fill="none"/>
<path d="M477.3,0.0 C479.2,5.9 485.5,23.6 488.2,35.3 C490.9,47.1 490.0,62.1 493.7,70.7 C497.3,79.3 504.5,81.5 510.0,87.0 C515.4,92.4 523.6,100.6 526.3,103.3" stroke="#f0b47a" stroke-width="1.6" fill="none"/>
<path d="M558.9,0.0 C559.8,4.5 563.0,15.9 564.3,27.2 C565.7,38.5 566.1,55.3 567.0,68.0 C567.9,80.6 568.9,92.0 569.8,103.3 C570.7,114.6 570.7,123.7 572.5,135.9 C574.3,148.1 579.3,169.9 580.6,176.7" stroke="#f0b47a" stroke-width="1.6" fill="none"/>
<path d="M607.8,135.9 C608.7,141.3 611.4,159.5 613.2,168.5 C615.1,177.6 617.8,186.6 618.7,190.3" stroke="#f0b47a" stroke-width="1.6" fill="none"/>
<path d="M645.9,0.0 C645.0,6.8 641.8,28.1 640.4,40.8 C639.1,53.5 638.2,70.2 637.7,76.1" stroke="#f0b47a" stroke-width="1.6" fill="none"/>
<path d="M336.0,21.7 C341.4,20.8 357.7,16.8 368.6,16.3 C379.5,15.9 388.6,18.1 401.2,19.0 C413.9,19.9 437.5,21.3 444.7,21.7" stroke="#f0b47a" stroke-width="1.6" fill="none"/>
<path d="M336.0,95.1 C341.4,95.6 357.3,96.5 368.6,97.9 C379.9,99.2 392.2,101.5 404.0,103.3 C415.7,105.1 428.0,106.5 439.3,108.7 C450.6,111.0 466.5,115.5 471.9,116.9" stroke="#f0b47a" stroke-width="1.6" fill="none"/>
<path d="M376.8,0.0 C377.2,9.1 378.6,36.2 379.5,54.4 C380.4,72.5 382.2,90.6 382.2,108.7 C382.2,126.8 380.8,145.0 379.5,163.1 C378.1,181.2 375.9,203.0 374.1,217.5 C372.2,231.9 369.5,244.6 368.6,250.1" stroke="#f0b47a" stroke-width="1.6" fill="none"/>
<path d="M444.7,250.1 C445.6,244.6 447.9,227.4 450.2,217.5 C452.4,207.5 457.0,194.8 458.3,190.3" stroke="#f0b47a" stroke-width="1.6" fill="none"/>
<path d="M336.0,222.9 C345.1,221.1 372.2,215.6 390.4,212.0 C408.5,208.4 428.9,203.9 444.7,201.1 C460.6,198.4 478.7,196.6 485.5,195.7" stroke="#f0b47a" stroke-width="1.6" fill="none"/>
<path d="M336.0,244.6 C342.8,242.8 363.2,237.4 376.8,233.8 C390.4,230.1 410.7,224.7 417.5,222.9" stroke="#f0b47a" stroke-width="1.6" fill="none"/>
<path d="M510.0,250.1 C510.4,244.6 510.0,225.6 512.7,217.5 C515.4,209.3 521.3,204.8 526.3,201.1 C531.3,197.5 535.8,194.8 542.6,195.7 C549.4,196.6 560.7,207.5 567.0,206.6 C573.4,205.7 576.1,193.9 580.6,190.3 C585.2,186.6 592.0,185.7 594.2,184.8" stroke="#f0b47a" stroke-width="1.6" fill="none"/>
<path d="M336.0,174.0 C341.4,173.1 357.7,168.1 368.6,168.5 C379.5,169.0 393.1,174.4 401.2,176.7 C409.4,178.9 414.8,181.2 417.5,182.1" stroke="#f0b47a" stroke-width="1.6" fill="none"/>
<path d="M439.3,0.0 C438.8,6.8 436.6,27.2 436.6,40.8 C436.6,54.4 437.9,68.0 439.3,81.5 C440.6,95.1 442.9,108.7 444.7,122.3 C446.5,135.9 449.3,156.3 450.2,163.1" stroke="#f0b47a" stroke-width="1.6" fill="none"/>
<path d="M672.0,163.1 C668.1,164.9 659.3,169.4 648.6,174.0 C637.9,178.5 616.4,184.8 607.8,190.3 C599.2,195.7 598.8,203.9 596.9,206.6" stroke="#f0b47a" stroke-width="1.6" fill="none"/>
<path d="M526.3,152.2 C530.8,151.3 544.4,148.6 553.5,146.8 C562.5,145.0 571.6,143.2 580.6,141.3 C589.7,139.5 592.6,137.7 607.8,135.9 C623.0,134.1 661.3,131.4 672.0,130.5" stroke="#f0b47a" stroke-width="1.6" fill="none"/>
<path d="M499.1,190.3 C500.0,194.8 504.5,207.5 504.5,217.5 C504.5,227.4 500.0,244.6 499.1,250.1" stroke="#f0b47a" stroke-width="1.6" fill="none"/>
<path d="M95.1,295.2 C98.3,297.5 104.6,306.5 114.2,308.8 C123.7,311.1 139.5,308.3 152.2,308.8 C164.9,309.3 179.4,309.3 190.3,311.5 C201.1,313.8 208.4,321.5 217.5,322.4 C226.5,323.3 235.6,318.8 244.6,317.0 C253.7,315.1 262.8,312.0 271.8,311.5 C280.9,311.1 288.3,314.2 299.0,314.2 C309.7,314.2 329.8,312.0 336.0,311.5" stroke="#f0b47a" stroke-width="1.6" fill="none"/>
<path d="M198.4,249.0 C197.5,255.8 194.3,276.2 193.0,289.8 C191.6,303.4 191.6,317.0 190.3,330.5 C188.9,344.1 186.6,357.7 184.8,371.3 C183.0,384.9 181.2,398.5 179.4,412.1 C177.6,425.7 176.7,438.4 174.0,452.9 C171.2,467.4 164.9,491.4 163.1,499.1" stroke="#f0b47a" stroke-width="1.6" fill="none"/>
<path d="M54.4,499.1 C55.3,491.4 58.0,467.4 59.8,452.9 C61.6,438.4 64.8,425.7 65.2,412.1 C65.7,398.5 61.6,384.9 62.5,371.3 C63.4,357.7 68.4,344.1 70.7,330.5 C72.9,317.0 74.3,303.4 76.1,289.8 C77.9,276.2 80.6,255.8 81.5,249.0" stroke="#f0b47a" stroke-width="1.6" fill="none"/>
<path d="M0.0,439.3 C6.8,438.4 27.2,435.6 40.8,433.8 C54.4,432.0 68.0,429.8 81.5,428.4 C95.1,427.0 108.7,423.9 122.3,425.7 C135.9,427.5 150.9,435.2 163.1,439.3 C175.3,443.3 184.4,447.4 195.7,450.1 C207.0,452.9 225.2,454.7 231.0,455.6" stroke="#f0b47a" stroke-width="1.6" fill="none"/>
<path d="M108.7,499.1 C111.0,493.6 116.9,476.4 122.3,466.5 C127.8,456.5 134.5,448.3 141.3,439.3 C148.1,430.2 154.0,418.4 163.1,412.1 C172.1,405.7 184.4,403.0 195.7,401.2 C207.0,399.4 218.4,402.1 231.0,401.2 C243.7,400.3 254.3,397.6 271.8,395.8 C289.3,394.0 325.3,391.2 336.0,390.3" stroke="#f0b47a" stroke-width="1.6" fill="none"/>
<path d="M0.0,303.4 C4.5,304.3 18.1,306.1 27.2,308.8 C36.2,311.5 47.1,316.0 54.4,319.7 C61.6,323.3 68.0,328.7 70.7,330.5" stroke="#f0b47a" stroke-width="1.6" fill="none"/>
<path d="M231.0,249.0 C232.4,255.8 236.0,276.2 239.2,289.8 C242.4,303.4 246.4,317.0 250.1,330.5 C253.7,344.1 257.3,359.5 260.9,371.3 C264.6,383.1 267.7,389.9 271.8,401.2 C275.9,412.5 280.9,423.0 285.4,439.3 C289.9,455.6 296.7,489.1 299.0,499.1" stroke="#f0b47a" stroke-width="1.6" fill="none"/>
<path d="M271.8,249.0 C272.7,255.8 274.5,276.2 277.2,289.8 C280.0,303.4 284.5,317.0 288.1,330.5 C291.7,344.1 297.2,364.5 299.0,371.3" stroke="#f0b47a" stroke-width="1.6" fill="none"/>
<path d="M135.9,499.1 C136.8,493.6 138.6,476.4 141.3,466.5 C144.1,456.5 148.6,446.5 152.2,439.3 C155.8,432.0 156.7,427.5 163.1,423.0 C169.4,418.4 185.7,413.9 190.3,412.1" stroke="#f0b47a" stroke-width="1.6" fill="none"/>
<path d="M27.2,499.1 C28.1,493.6 29.9,476.4 32.6,466.5 C35.3,456.5 39.9,448.3 43.5,439.3 C47.1,430.2 52.6,416.6 54.4,412.1" stroke="#f0b47a" stroke-width="1.6" fill="none"/>
<path d="M0.0,384.9 C2.7,385.8 10.9,387.6 16.3,390.3 C21.7,393.1 28.1,396.7 32.6,401.2 C37.1,405.7 39.9,410.3 43.5,417.5 C47.1,424.8 52.6,440.2 54.4,444.7" stroke="#f0b47a" stroke-width="1.6" fill="none"/>
<path d="M130.5,249.0 C134.1,254.4 146.8,271.7 152.2,281.6 C157.7,291.6 159.5,299.7 163.1,308.8 C166.7,317.9 169.4,327.8 174.0,336.0 C178.5,344.1 184.8,349.6 190.3,357.7 C195.7,365.9 203.9,380.4 206.6,384.9" stroke="#f0b47a" stroke-width="1.6" fill="none"/>
<path d="M336.0,439.3 C329.8,438.8 309.7,438.4 299.0,436.6 C288.3,434.7 280.9,430.7 271.8,428.4 C262.8,426.1 249.2,423.9 244.6,423.0" stroke="#f0b47a" stroke-width="1.6" fill="none"/>
<path d="M0.0,325.1 C4.5,324.2 18.1,319.7 27.2,319.7 C36.2,319.7 45.3,325.1 54.4,325.1 C63.4,325.1 73.4,321.5 81.5,319.7 C89.7,317.9 99.7,315.1 103.3,314.2" stroke="#f0b47a" stroke-width="1.6" fill="none"/>
<path d="M336.0,471.9 C329.8,472.8 309.7,474.6 299.0,477.3 C288.3,480.0 278.6,484.6 271.8,488.2 C265.0,491.8 260.5,497.3 258.2,499.1" stroke="#f0b47a" stroke-width="1.6" fill="none"/>
<path d="M190.3,466.5 C194.8,468.3 208.4,473.7 217.5,477.3 C226.5,480.9 240.1,486.4 244.6,488.2" stroke="#f0b47a" stroke-width="1.6" fill="none"/>
<path d="M336.0,265.3 C340.5,264.4 354.1,259.9 363.2,259.9 C372.2,259.9 381.3,263.5 390.4,265.3 C399.4,267.1 413.0,269.8 417.5,270.7" stroke="#f0b47a" stroke-width="1.6" fill="none"/>
<path d="M390.4,249.0 C391.3,255.8 393.5,276.2 395.8,289.8 C398.1,303.4 402.1,317.0 404.0,330.5 C405.8,344.1 405.3,357.7 406.7,371.3 C408.0,384.9 410.3,398.5 412.1,412.1 C413.9,425.7 416.6,438.4 417.5,452.9 C418.4,467.4 417.5,491.4 417.5,499.1" stroke="#f0b47a" stroke-width="1.6" fill="none"/>
<path d="M444.7,249.0 C445.6,255.8 446.5,276.2 450.2,289.8 C453.8,303.4 461.0,318.3 466.5,330.5 C471.9,342.8 478.2,351.4 482.8,363.2 C487.3,374.9 490.0,388.5 493.7,401.2 C497.3,413.9 500.9,423.0 504.5,439.3 C508.1,455.6 513.6,489.1 515.4,499.1" stroke="#f0b47a" stroke-width="1.6" fill="none"/>
<path d="M336.0,314.2 C342.8,315.1 363.2,318.8 376.8,319.7 C390.4,320.6 404.0,318.8 417.5,319.7 C431.1,320.6 451.5,324.2 458.3,325.1" stroke="#f0b47a" stroke-width="1.6" fill="none"/>
<path d="M336.0,412.1 C340.5,411.2 354.1,407.1 363.2,406.7 C372.2,406.2 380.4,408.5 390.4,409.4 C400.3,410.3 413.0,413.4 423.0,412.1 C432.9,410.7 442.0,404.8 450.2,401.2 C458.3,397.6 463.8,390.3 471.9,390.3 C480.1,390.3 490.0,397.6 499.1,401.2 C508.1,404.8 517.2,404.8 526.3,412.1 C535.3,419.3 548.9,439.3 553.5,444.7" stroke="#f0b47a" stroke-width="1.6" fill="none"/>
<path d="M363.2,499.1 C365.0,493.6 369.5,476.4 374.1,466.5 C378.6,456.5 384.9,446.1 390.4,439.3 C395.8,432.5 398.5,429.3 406.7,425.7 C414.8,422.1 433.9,418.9 439.3,417.5" stroke="#f0b47a" stroke-width="1.6" fill="none"/>
<path d="M548.0,249.0 C548.9,255.8 554.4,276.2 553.5,289.8 C552.5,303.4 543.5,317.0 542.6,330.5 C541.7,344.1 546.2,357.7 548.0,371.3 C549.8,384.9 551.2,398.5 553.5,412.1 C555.7,425.7 560.2,446.1 561.6,452.9" stroke="#f0b47a" stroke-width="1.6" fill="none"/>
<path d="M621.4,330.5 C623.7,335.1 630.5,348.7 635.0,357.7 C639.5,366.8 644.1,375.8 648.6,384.9 C653.1,394.0 658.3,405.3 662.2,412.1 C666.1,418.9 670.3,423.4 672.0,425.7" stroke="#f0b47a" stroke-width="1.6" fill="none"/>
<path d="M580.6,439.3 C585.2,440.6 598.8,446.5 607.8,447.4 C616.9,448.3 624.3,447.0 635.0,444.7 C645.7,442.4 665.8,435.6 672.0,433.8" stroke="#f0b47a" stroke-width="1.6" fill="none"/>
<path d="M499.1,499.1 C500.0,493.6 500.0,473.7 504.5,466.5 C509.1,459.2 518.1,456.5 526.3,455.6 C534.4,454.7 544.4,455.6 553.5,461.0 C562.5,466.5 576.1,483.7 580.6,488.2" stroke="#f0b47a" stroke-width="1.6" fill="none"/>
<path d="M336.0,344.1 C340.5,343.7 354.1,340.5 363.2,341.4 C372.2,342.3 383.1,346.9 390.4,349.6 C397.6,352.3 404.0,356.4 406.7,357.7" stroke="#f0b47a" stroke-width="1.6" fill="none"/>
<path d="M336.0,466.5 C340.5,465.5 354.1,461.0 363.2,461.0 C372.2,461.0 381.3,467.4 390.4,466.5 C399.4,465.5 408.5,459.2 417.5,455.6 C426.6,452.0 440.2,446.5 444.7,444.7" stroke="#f0b47a" stroke-width="1.6" fill="none"/>
<path d="M575.2,249.0 C574.7,255.8 571.6,276.2 572.5,289.8 C573.4,303.4 580.2,317.0 580.6,330.5 C581.1,344.1 576.1,364.5 575.2,371.3" stroke="#f0b47a" stroke-width="1.6" fill="none"/>
<path d="M672.0,338.7 C668.1,338.2 657.0,337.3 648.6,336.0 C640.2,334.6 625.9,331.4 621.4,330.5" stroke="#f0b47a" stroke-width="1.6" fill="none"/>
<path d="M336.0,249.0 C338.7,253.5 350.5,264.9 352.3,276.2 C354.1,287.5 349.6,305.6 346.9,317.0 C344.2,328.3 337.8,339.6 336.0,344.1" stroke="#f0b47a" stroke-width="1.6" fill="none"/>
<path d="M174.0,0.0 C173.1,5.4 174.9,23.6 168.5,32.6 C162.2,41.7 142.2,48.0 135.9,54.4 C129.6,60.7 134.1,64.8 130.5,70.7 C126.8,76.6 120.1,82.9 114.2,89.7 C108.3,96.5 101.5,104.2 95.1,111.4 C88.8,118.7 79.7,125.5 76.1,133.2 C72.5,140.9 72.5,148.6 73.4,157.7 C74.3,166.7 78.8,176.7 81.5,187.6 C84.3,198.4 89.7,214.7 89.7,222.9 C89.7,231.0 89.7,233.8 81.5,236.5 C73.4,239.2 54.4,240.8 40.8,239.2 C27.2,237.6 6.8,229.0 0.0,227.0" stroke="#e9977f" stroke-width="2.1" fill="none"/>
<path d="M0.0,130.5 C8.2,131.4 35.3,133.6 48.9,135.9 C62.5,138.2 69.3,141.1 81.5,144.1 C93.8,147.0 110.5,153.1 122.3,153.6 C134.1,154.0 143.6,147.0 152.2,146.8 C160.8,146.6 164.9,149.5 174.0,152.2 C183.0,154.9 195.7,160.4 206.6,163.1 C217.5,165.8 228.3,167.6 239.2,168.5 C250.1,169.4 255.7,169.4 271.8,168.5 C287.9,167.6 325.3,164.0 336.0,163.1" stroke="#e9977f" stroke-width="2.1" fill="none"/>
<path d="M190.3,35.3 C193.0,38.5 201.1,47.1 206.6,54.4 C212.0,61.6 217.5,71.6 222.9,78.8 C228.3,86.1 233.8,91.5 239.2,97.9 C244.6,104.2 250.1,109.6 255.5,116.9 C260.9,124.1 266.8,133.6 271.8,141.3 C276.8,149.0 283.1,159.5 285.4,163.1" stroke="#e9977f" stroke-width="2.1" fill="none"/>
<path d="M152.2,0.0 C154.0,5.4 159.5,26.7 163.1,32.6 C166.7,38.5 167.6,35.8 174.0,35.3 C180.3,34.9 191.2,33.1 201.1,29.9 C211.1,26.7 222.0,20.4 233.8,16.3 C245.5,12.2 260.9,8.2 271.8,5.4 C282.7,2.7 294.5,0.9 299.0,0.0" stroke="#e9977f" stroke-width="2.1" fill="none"/>
<path d="M591.5,0.0 C593.3,5.4 599.7,23.6 602.4,32.6 C605.1,41.7 604.2,46.2 607.8,54.4 C611.4,62.5 620.0,73.4 624.1,81.5 C628.2,89.7 630.5,94.2 632.3,103.3 C634.1,112.3 634.1,125.0 635.0,135.9 C635.9,146.8 637.7,158.6 637.7,168.5 C637.7,178.5 636.4,182.1 635.0,195.7 C633.6,209.3 630.5,241.0 629.6,250.1" stroke="#e9977f" stroke-width="2.1" fill="none"/>
<path d="M526.3,114.2 C530.8,112.3 544.4,106.5 553.5,103.3 C562.5,100.1 571.6,97.9 580.6,95.1 C589.7,92.4 598.8,89.7 607.8,87.0 C616.9,84.3 624.3,82.9 635.0,78.8 C645.7,74.7 665.8,65.2 672.0,62.5" stroke="#e9977f" stroke-width="2.1" fill="none"/>
<path d="M417.5,182.1 C424.3,183.0 444.7,186.2 458.3,187.6 C471.9,188.9 487.8,190.3 499.1,190.3 C510.4,190.3 517.2,189.4 526.3,187.6 C535.3,185.7 544.4,182.6 553.5,179.4 C562.5,176.2 571.6,171.7 580.6,168.5 C589.7,165.4 598.8,163.1 607.8,160.4 C616.9,157.7 624.3,155.4 635.0,152.2 C645.7,149.0 665.8,143.2 672.0,141.3" stroke="#e9977f" stroke-width="2.1" fill="none"/>
<path d="M417.5,174.0 C422.1,172.1 435.7,166.7 444.7,163.1 C453.8,159.5 462.8,155.8 471.9,152.2 C481.0,148.6 490.0,145.9 499.1,141.3 C508.1,136.8 519.0,130.5 526.3,125.0 C533.5,119.6 537.1,116.0 542.6,108.7 C548.0,101.5 553.5,90.6 558.9,81.5 C564.3,72.5 568.9,63.4 575.2,54.4 C581.5,45.3 591.5,36.2 596.9,27.2 C602.4,18.1 606.0,4.5 607.8,0.0" stroke="#e9977f" stroke-width="2.1" fill="none"/>
<path d="M336.0,48.9 C342.8,46.2 363.2,36.7 376.8,32.6 C390.4,28.5 404.0,27.2 417.5,24.5 C431.1,21.7 446.5,18.6 458.3,16.3 C470.1,14.0 476.9,9.1 488.2,10.9 C499.5,12.7 515.4,23.6 526.3,27.2 C537.1,30.8 544.4,33.1 553.5,32.6 C562.5,32.2 560.9,24.5 580.6,24.5 C600.4,24.5 656.7,31.3 672.0,32.6" stroke="#e9977f" stroke-width="2.1" fill="none"/>
<path d="M406.7,0.0 C408.0,5.4 413.9,19.9 414.8,32.6 C415.7,45.3 413.0,61.2 412.1,76.1 C411.2,91.1 410.3,106.9 409.4,122.3 C408.5,137.7 407.6,157.2 406.7,168.5 C405.8,179.8 404.4,186.6 404.0,190.3" stroke="#e9977f" stroke-width="2.1" fill="none"/>
<path d="M352.3,0.0 C353.2,6.8 356.4,27.2 357.7,40.8 C359.1,54.4 360.9,68.0 360.5,81.5 C360.0,95.1 357.3,112.3 355.0,122.3 C352.8,132.3 350.0,136.4 346.9,141.3 C343.7,146.3 337.8,150.4 336.0,152.2" stroke="#e9977f" stroke-width="2.1" fill="none"/>
<path d="M336.0,281.6 C329.8,283.0 311.5,285.2 299.0,289.8 C286.5,294.3 274.5,302.9 260.9,308.8 C247.3,314.7 230.1,320.6 217.5,325.1 C204.8,329.6 194.8,331.4 184.8,336.0 C174.9,340.5 164.9,346.9 157.7,352.3 C150.4,357.7 146.3,362.7 141.3,368.6 C136.4,374.5 132.3,380.8 127.8,387.6 C123.2,394.4 120.1,403.0 114.2,409.4 C108.3,415.7 100.1,420.7 92.4,425.7 C84.7,430.7 76.6,435.2 68.0,439.3 C59.3,443.3 52.1,447.4 40.8,450.1 C29.4,452.9 6.8,454.7 0.0,455.6" stroke="#e9977f" stroke-width="2.1" fill="none"/>
<path d="M0.0,338.7 C4.5,337.3 18.1,334.2 27.2,330.5 C36.2,326.9 45.3,321.5 54.4,317.0 C63.4,312.4 73.4,306.5 81.5,303.4 C89.7,300.2 99.7,298.8 103.3,297.9" stroke="#e9977f" stroke-width="2.1" fill="none"/>
<path d="M0.0,259.9 C6.8,259.0 27.2,256.2 40.8,254.4 C54.4,252.6 74.7,249.9 81.5,249.0" stroke="#e9977f" stroke-width="2.1" fill="none"/>
<path d="M336.0,357.7 C329.8,362.3 309.7,377.7 299.0,384.9 C288.3,392.2 280.9,394.9 271.8,401.2 C262.8,407.6 251.0,416.6 244.6,423.0 C238.3,429.3 236.5,432.0 233.8,439.3 C231.0,446.5 229.7,456.5 228.3,466.5 C227.0,476.4 226.1,493.6 225.6,499.1" stroke="#e9977f" stroke-width="2.1" fill="none"/>
<path d="M0.0,281.6 C5.4,281.2 21.3,281.6 32.6,278.9 C43.9,276.2 59.8,270.3 68.0,265.3 C76.1,260.3 79.3,251.7 81.5,249.0" stroke="#e9977f" stroke-width="2.1" fill="none"/>
<path d="M439.3,249.0 C442.5,251.3 452.0,257.6 458.3,262.6 C464.7,267.6 468.7,275.3 477.3,278.9 C486.0,282.5 497.3,284.3 510.0,284.3 C522.6,284.3 541.7,280.3 553.5,278.9 C565.2,277.5 571.6,275.7 580.6,276.2 C589.7,276.6 592.6,279.4 607.8,281.6 C623.0,283.9 661.3,288.4 672.0,289.8" stroke="#e9977f" stroke-width="2.1" fill="none"/>
<path d="M477.3,276.2 C481.0,279.8 494.6,291.6 499.1,297.9 C503.6,304.3 500.9,310.6 504.5,314.2 C508.1,317.9 513.6,317.0 520.8,319.7 C528.1,322.4 539.0,327.8 548.0,330.5 C557.1,333.3 567.0,336.0 575.2,336.0 C583.3,336.0 580.8,333.3 596.9,330.5 C613.1,327.8 659.5,321.5 672.0,319.7" stroke="#e9977f" stroke-width="2.1" fill="none"/>
<path d="M336.0,276.2 C342.8,277.1 363.2,280.3 376.8,281.6 C390.4,283.0 406.2,285.2 417.5,284.3 C428.9,283.4 440.2,277.5 444.7,276.2" stroke="#e9977f" stroke-width="2.1" fill="none"/>
<path d="M336.0,363.2 C345.1,363.2 372.2,363.6 390.4,363.2 C408.5,362.7 428.9,361.3 444.7,360.4 C460.6,359.5 471.9,359.1 485.5,357.7 C499.1,356.4 514.0,354.6 526.3,352.3 C538.5,350.0 549.8,346.4 558.9,344.1 C567.9,341.9 572.5,341.0 580.6,338.7 C588.8,336.4 603.3,331.9 607.8,330.5" stroke="#e9977f" stroke-width="2.1" fill="none"/>
<path d="M504.5,314.2 C503.6,321.5 499.1,345.9 499.1,357.7 C499.1,369.5 500.0,374.9 504.5,384.9 C509.1,394.9 519.9,408.5 526.3,417.5 C532.6,426.6 539.0,432.9 542.6,439.3 C546.2,445.6 547.1,452.9 548.0,455.6" stroke="#e9977f" stroke-width="2.1" fill="none"/>
<path d="M602.4,289.8 C603.3,294.8 606.0,308.3 607.8,319.7 C609.6,331.0 608.7,346.9 613.2,357.7 C617.8,368.6 625.2,376.8 635.0,384.9 C644.8,393.1 665.8,403.0 672.0,406.7" stroke="#e9977f" stroke-width="2.1" fill="none"/>
<text x="68.0" y="86.4" text-anchor="middle" font-size="6.9" fill="#4e4e4e" font-family="Liberation Sans">Wembley</text>
<text x="160.4" y="102.7" text-anchor="middle" font-size="6.9" fill="#4e4e4e" font-family="Liberation Sans">Willesden</text>
<text x="53.0" y="187.6" text-anchor="middle" font-size="6.9" fill="#4e4e4e" font-family="Liberation Sans">Ealing</text>
<text x="103.3" y="197.9" text-anchor="middle" font-size="6.9" fill="#4e4e4e" font-family="Liberation Sans">Acton</text>
<text x="65.2" y="124.5" text-anchor="middle" font-size="6.9" fill="#4e4e4e" font-family="Liberation Sans">Alperton</text>
<text x="29.9" y="132.1" text-anchor="middle" font-size="6.9" fill="#4e4e4e" font-family="Liberation Sans">Perivale</text>
<text x="92.4" y="147.9" text-anchor="middle" font-size="6.9" fill="#4e4e4e" font-family="Liberation Sans">Park Royal</text>
<text x="142.7" y="129.4" text-anchor="middle" font-size="6.9" fill="#4e4e4e" font-family="Liberation Sans">Harlesden</text>
<text x="114.2" y="238.1" text-anchor="middle" font-size="6.9" fill="#4e4e4e" font-family="Liberation Sans">Chiswick</text>
<text x="174.0" y="12.5" text-anchor="middle" font-size="6.9" fill="#4e4e4e" font-family="Liberation Sans">Hendon Central</text>
<text x="187.6" y="27.5" text-anchor="middle" font-size="6.9" fill="#4e4e4e" font-family="Liberation Sans">Brent Cross</text>
<text x="222.9" y="39.7" text-anchor="middle" font-size="6.9" fill="#4e4e4e" font-family="Liberation Sans">Golders Green</text>
<text x="247.3" y="14.4" text-anchor="middle" font-size="6.9" fill="#4e4e4e" font-family="Liberation Sans">Hampstead</text>
<text x="247.3" y="21.7" text-anchor="middle" font-size="6.9" fill="#4e4e4e" font-family="Liberation Sans">Garden Suburb</text>
<text x="296.3" y="42.4" text-anchor="middle" font-size="6.9" fill="#4e4e4e" font-family="Liberation Sans">Highgate</text>
<text x="318.0" y="54.6" text-anchor="middle" font-size="6.9" fill="#4e4e4e" font-family="Liberation Sans">Archway</text>
<text x="190.3" y="77.2" text-anchor="middle" font-size="6.9" fill="#4e4e4e" font-family="Liberation Sans">Cricklewood</text>
<text x="250.1" y="78.3" text-anchor="middle" font-size="6.9" fill="#4e4e4e" font-family="Liberation Sans">Hampstead</text>
<text x="301.7" y="66.9" text-anchor="middle" font-size="6.9" fill="#4e4e4e" font-family="Liberation Sans">Dartmouth</text>
<text x="301.7" y="74.2" text-anchor="middle" font-size="6.9" fill="#4e4e4e" font-family="Liberation Sans">Park</text>
<text x="288.1" y="84.5" text-anchor="middle" font-size="6.9" fill="#4e4e4e" font-family="Liberation Sans">Gospel Oak</text>
<text x="307.1" y="94.0" text-anchor="middle" font-size="6.9" fill="#4e4e4e" font-family="Liberation Sans">Kentish Town</text>
<text x="225.6" y="91.9" text-anchor="middle" font-size="6.9" fill="#4e4e4e" font-family="Liberation Sans">West Hampstead</text>
<text x="266.4" y="100.0" text-anchor="middle" font-size="6.9" fill="#4e4e4e" font-family="Liberation Sans">Belsize Park</text>
<text x="239.2" y="110.4" text-anchor="middle" font-size="6.9" fill="#4e4e4e" font-family="Liberation Sans">South Hampstead</text>
<text x="299.0" y="121.2" text-anchor="middle" font-size="6.9" fill="#4e4e4e" font-family="Liberation Sans">Camden Town</text>
<text x="206.6" y="128.0" text-anchor="middle" font-size="6.9" fill="#4e4e4e" font-family="Liberation Sans">Queen's Park</text>
<text x="255.5" y="140.3" text-anchor="middle" font-size="6.9" fill="#4e4e4e" font-family="Liberation Sans">St. John's Wood</text>
<text x="201.1" y="149.8" text-anchor="middle" font-size="6.9" fill="#4e4e4e" font-family="Liberation Sans">Kensal Town</text>
<text x="201.1" y="169.6" text-anchor="middle" font-size="6.9" fill="#4e4e4e" font-family="Liberation Sans">North Kensington</text>
<text x="290.8" y="169.6" text-anchor="middle" font-size="6.9" fill="#4e4e4e" font-family="Liberation Sans">Marylebone</text>
<text x="255.5" y="178.3" text-anchor="middle" font-size="6.9" fill="#4e4e4e" font-family="Liberation Sans">Paddington</text>
<text x="206.6" y="191.4" text-anchor="middle" font-size="6.9" fill="#4e4e4e" font-family="Liberation Sans">Notting Hill</text>
<text x="296.3" y="190.5" text-anchor="middle" font-size="6.9" fill="#4e4e4e" font-family="Liberation Sans">Mayfair</text>
<text x="180.8" y="202.0" text-anchor="middle" font-size="6.9" fill="#4e4e4e" font-family="Liberation Sans">Shepherd's</text>
<text x="180.8" y="209.3" text-anchor="middle" font-size="6.9" fill="#4e4e4e" font-family="Liberation Sans">Bush</text>
<text x="187.6" y="228.6" text-anchor="middle" font-size="6.9" fill="#4e4e4e" font-family="Liberation Sans">Brook Green</text>
<text x="241.9" y="230.0" text-anchor="middle" font-size="6.9" fill="#4e4e4e" font-family="Liberation Sans">South Kensington</text>
<text x="203.9" y="241.6" text-anchor="middle" font-size="6.9" fill="#4e4e4e" font-family="Liberation Sans">West Kensington</text>
<text x="247.3" y="238.9" text-anchor="middle" font-size="6.9" fill="#4e4e4e" font-family="Liberation Sans">Brompton</text>
<text x="260.9" y="249.0" text-anchor="middle" font-size="6.9" fill="#4e4e4e" font-family="Liberation Sans">Chelsea</text>
<text x="13.6" y="66.9" text-anchor="middle" font-size="6.9" fill="#4e4e4e" font-family="Liberation Sans">Sudbury Hill</text>
<text x="32.6" y="7.1" text-anchor="middle" font-size="6.9" fill="#4e4e4e" font-family="Liberation Sans">Kenton</text>
<text x="326.2" y="200.6" text-anchor="middle" font-size="9.68" fill="#4e4e4e" font-family="Liberation Sans">London</text>
<text x="307.1" y="225.9" text-anchor="middle" font-size="9.68" fill="#4e4e4e" font-family="Liberation Sans">City of Westminster</text>
<text x="387.6" y="1.6" text-anchor="middle" font-size="6.9" fill="#4e4e4e" font-family="Liberation Sans">West Green</text>
<text x="499.1" y="8.4" text-anchor="middle" font-size="6.9" fill="#4e4e4e" font-family="Liberation Sans">Walthamstow</text>
<text x="564.3" y="11.1" text-anchor="middle" font-size="6.9" fill="#4e4e4e" font-family="Liberation Sans">Snaresbrook</text>
<text x="372.7" y="13.3" text-anchor="middle" font-size="6.9" fill="#4e4e4e" font-family="Liberation Sans">Harringay</text>
<text x="596.9" y="28.0" text-anchor="middle" font-size="6.9" fill="#4e4e4e" font-family="Liberation Sans">Redbridge</text>
<text x="629.6" y="28.0" text-anchor="middle" font-size="6.9" fill="#4e4e4e" font-family="Liberation Sans">Gants Hill</text>
<text x="662.2" y="28.8" text-anchor="middle" font-size="6.9" fill="#4e4e4e" font-family="Liberation Sans">Newbury</text>
<text x="352.3" y="39.7" text-anchor="middle" font-size="6.9" fill="#4e4e4e" font-family="Liberation Sans">Stroud Green</text>
<text x="420.3" y="42.4" text-anchor="middle" font-size="6.9" fill="#4e4e4e" font-family="Liberation Sans">Stamford Hill</text>
<text x="501.8" y="45.1" text-anchor="middle" font-size="6.9" fill="#4e4e4e" font-family="Liberation Sans">Leyton</text>
<text x="545.3" y="48.4" text-anchor="middle" font-size="6.9" fill="#4e4e4e" font-family="Liberation Sans">Leytonstone</text>
<text x="357.7" y="59.3" text-anchor="middle" font-size="6.9" fill="#4e4e4e" font-family="Liberation Sans">Finsbury Park</text>
<text x="637.7" y="73.7" text-anchor="middle" font-size="6.9" fill="#4e4e4e" font-family="Liberation Sans">Ilford</text>
<text x="399.9" y="74.5" text-anchor="middle" font-size="6.9" fill="#4e4e4e" font-family="Liberation Sans">Stoke Newington</text>
<text x="444.7" y="72.8" text-anchor="middle" font-size="6.9" fill="#4e4e4e" font-family="Liberation Sans">Clapton</text>
<text x="420.3" y="88.6" text-anchor="middle" font-size="6.9" fill="#4e4e4e" font-family="Liberation Sans">Shacklewell</text>
<text x="466.5" y="92.7" text-anchor="middle" font-size="6.9" fill="#4e4e4e" font-family="Liberation Sans">Homerton</text>
<text x="567.0" y="95.4" text-anchor="middle" font-size="6.9" fill="#4e4e4e" font-family="Liberation Sans">Forest Gate</text>
<text x="624.1" y="93.5" text-anchor="middle" font-size="6.9" fill="#4e4e4e" font-family="Liberation Sans">Little Ilford</text>
<text x="368.6" y="104.9" text-anchor="middle" font-size="6.9" fill="#4e4e4e" font-family="Liberation Sans">Highbury</text>
<text x="409.4" y="110.4" text-anchor="middle" font-size="6.9" fill="#4e4e4e" font-family="Liberation Sans">Dalston</text>
<text x="451.5" y="111.7" text-anchor="middle" font-size="6.9" fill="#4e4e4e" font-family="Liberation Sans">Hackney</text>
<text x="488.2" y="108.2" text-anchor="middle" font-size="6.9" fill="#4e4e4e" font-family="Liberation Sans">Hackney Wick</text>
<text x="568.4" y="113.6" text-anchor="middle" font-size="6.9" fill="#4e4e4e" font-family="Liberation Sans">Upton</text>
<text x="531.7" y="117.2" text-anchor="middle" font-size="6.9" fill="#4e4e4e" font-family="Liberation Sans">Stratford</text>
<text x="349.6" y="121.2" text-anchor="middle" font-size="6.9" fill="#4e4e4e" font-family="Liberation Sans">Barnsbury</text>
<text x="654.0" y="121.2" text-anchor="middle" font-size="6.9" fill="#4e4e4e" font-family="Liberation Sans">Barking</text>
<text x="412.1" y="127.2" text-anchor="middle" font-size="6.9" fill="#4e4e4e" font-family="Liberation Sans">Haggerston</text>
<text x="580.6" y="126.7" text-anchor="middle" font-size="6.9" fill="#4e4e4e" font-family="Liberation Sans">Upton Park</text>
<text x="542.6" y="132.9" text-anchor="middle" font-size="6.9" fill="#4e4e4e" font-family="Liberation Sans">West Ham</text>
<text x="394.4" y="137.5" text-anchor="middle" font-size="6.9" fill="#4e4e4e" font-family="Liberation Sans">Hoxton</text>
<text x="440.6" y="143.0" text-anchor="middle" font-size="6.9" fill="#4e4e4e" font-family="Liberation Sans">Bethnal Green</text>
<text x="484.1" y="141.6" text-anchor="middle" font-size="6.9" fill="#4e4e4e" font-family="Liberation Sans">Bow</text>
<text x="565.7" y="145.1" text-anchor="middle" font-size="6.9" fill="#4e4e4e" font-family="Liberation Sans">Plaistow</text>
<text x="342.8" y="145.7" text-anchor="middle" font-size="6.9" fill="#4e4e4e" font-family="Liberation Sans">King's Cross</text>
<text x="402.6" y="151.9" text-anchor="middle" font-size="6.9" fill="#4e4e4e" font-family="Liberation Sans">Shoreditch</text>
<text x="476.0" y="156.0" text-anchor="middle" font-size="6.9" fill="#4e4e4e" font-family="Liberation Sans">Mile End</text>
<text x="367.3" y="159.3" text-anchor="middle" font-size="6.9" fill="#4e4e4e" font-family="Liberation Sans">Clerkenwell</text>
<text x="350.9" y="169.6" text-anchor="middle" font-size="6.9" fill="#4e4e4e" font-family="Liberation Sans">Holborn</text>
<text x="455.6" y="175.0" text-anchor="middle" font-size="6.9" fill="#4e4e4e" font-family="Liberation Sans">Stepney</text>
<text x="545.3" y="173.7" text-anchor="middle" font-size="6.9" fill="#4e4e4e" font-family="Liberation Sans">Canning Town</text>
<text x="618.7" y="178.3" text-anchor="middle" font-size="6.9" fill="#4e4e4e" font-family="Liberation Sans">Beckton</text>
<text x="476.0" y="185.1" text-anchor="middle" font-size="6.9" fill="#4e4e4e" font-family="Liberation Sans">Limehouse</text>
<text x="504.5" y="191.1" text-anchor="middle" font-size="6.9" fill="#4e4e4e" font-family="Liberation Sans">Poplar</text>
<text x="443.4" y="195.4" text-anchor="middle" font-size="6.9" fill="#4e4e4e" font-family="Liberation Sans">Shadwell</text>
<text x="645.9" y="200.6" text-anchor="middle" font-size="6.9" fill="#4e4e4e" font-family="Liberation Sans">Gallions Reach</text>
<text x="368.6" y="203.3" text-anchor="middle" font-size="6.9" fill="#4e4e4e" font-family="Liberation Sans">Southwark</text>
<text x="496.4" y="206.3" text-anchor="middle" font-size="6.9" fill="#4e4e4e" font-family="Liberation Sans">Canary Wharf</text>
<text x="379.5" y="213.1" text-anchor="middle" font-size="6.9" fill="#4e4e4e" font-family="Liberation Sans">The Borough</text>
<text x="626.8" y="217.7" text-anchor="middle" font-size="6.9" fill="#4e4e4e" font-family="Liberation Sans">North Woolwich</text>
<text x="458.3" y="217.7" text-anchor="middle" font-size="6.9" fill="#4e4e4e" font-family="Liberation Sans">Rotherhithe</text>
<text x="533.1" y="220.4" text-anchor="middle" font-size="6.9" fill="#4e4e4e" font-family="Liberation Sans">Greenwich</text>
<text x="533.1" y="227.2" text-anchor="middle" font-size="6.9" fill="#4e4e4e" font-family="Liberation Sans">Peninsula</text>
<text x="371.3" y="227.2" text-anchor="middle" font-size="6.9" fill="#4e4e4e" font-family="Liberation Sans">Elephant and</text>
<text x="371.3" y="234.6" text-anchor="middle" font-size="6.9" fill="#4e4e4e" font-family="Liberation Sans">Castle</text>
<text x="586.1" y="238.7" text-anchor="middle" font-size="6.9" fill="#4e4e4e" font-family="Liberation Sans">Charlton Riverside</text>
<text x="359.1" y="247.6" text-anchor="middle" font-size="6.9" fill="#4e4e4e" font-family="Liberation Sans">Kennington</text>
<text x="409.4" y="248.2" text-anchor="middle" font-size="6.9" fill="#4e4e4e" font-family="Liberation Sans">Old Kent Road</text>
<text x="542.6" y="248.4" text-anchor="middle" font-size="6.9" fill="#4e4e4e" font-family="Liberation Sans">East Greenwich</text>
<text x="611.9" y="136.2" text-anchor="middle" font-size="9.24" fill="#4e4e4e" font-family="Liberation Sans">East Ham</text>
<text x="384.9" y="180.2" text-anchor="middle" font-size="9.68" fill="#4e4e4e" font-family="Liberation Sans">City of London</text>
<text x="27.2" y="253.3" text-anchor="middle" font-size="6.9" fill="#4e4e4e" font-family="Liberation Sans">Brentford</text>
<text x="84.3" y="276.5" text-anchor="middle" font-size="6.9" fill="#4e4e4e" font-family="Liberation Sans">Kew</text>
<text x="20.4" y="297.4" text-anchor="middle" font-size="6.9" fill="#4e4e4e" font-family="Liberation Sans">Isleworth</text>
<text x="89.7" y="296.8" text-anchor="middle" font-size="6.9" fill="#4e4e4e" font-family="Liberation Sans">North Sheen</text>
<text x="140.0" y="284.6" text-anchor="middle" font-size="6.9" fill="#4e4e4e" font-family="Liberation Sans">Barnes</text>
<text x="206.6" y="282.7" text-anchor="middle" font-size="6.9" fill="#4e4e4e" font-family="Liberation Sans">Fulham</text>
<text x="259.6" y="291.4" text-anchor="middle" font-size="6.9" fill="#4e4e4e" font-family="Liberation Sans">Battersea</text>
<text x="57.1" y="315.3" text-anchor="middle" font-size="6.9" fill="#4e4e4e" font-family="Liberation Sans">Richmond</text>
<text x="112.8" y="313.1" text-anchor="middle" font-size="6.9" fill="#4e4e4e" font-family="Liberation Sans">East Sheen</text>
<text x="191.6" y="312.6" text-anchor="middle" font-size="6.9" fill="#4e4e4e" font-family="Liberation Sans">Putney</text>
<text x="266.4" y="310.4" text-anchor="middle" font-size="6.9" fill="#4e4e4e" font-family="Liberation Sans">Clapham Junction</text>
<text x="312.6" y="315.3" text-anchor="middle" font-size="6.9" fill="#4e4e4e" font-family="Liberation Sans">Clapham</text>
<text x="27.2" y="327.3" text-anchor="middle" font-size="6.9" fill="#4e4e4e" font-family="Liberation Sans">St Margarets</text>
<text x="227.0" y="326.2" text-anchor="middle" font-size="6.9" fill="#4e4e4e" font-family="Liberation Sans">Wandsworth</text>
<text x="152.2" y="344.4" text-anchor="middle" font-size="6.9" fill="#4e4e4e" font-family="Liberation Sans">Roehampton</text>
<text x="19.0" y="351.7" text-anchor="middle" font-size="6.9" fill="#4e4e4e" font-family="Liberation Sans">Twickenham</text>
<text x="202.5" y="356.6" text-anchor="middle" font-size="6.9" fill="#4e4e4e" font-family="Liberation Sans">Southfields</text>
<text x="292.2" y="356.6" text-anchor="middle" font-size="6.9" fill="#4e4e4e" font-family="Liberation Sans">Balham</text>
<text x="141.3" y="374.3" text-anchor="middle" font-size="6.9" fill="#4e4e4e" font-family="Liberation Sans">Putney Vale</text>
<text x="46.2" y="381.6" text-anchor="middle" font-size="6.9" fill="#4e4e4e" font-family="Liberation Sans">Ham</text>
<text x="122.3" y="389.3" text-anchor="middle" font-size="6.9" fill="#4e4e4e" font-family="Liberation Sans">Kingston Vale</text>
<text x="243.3" y="383.3" text-anchor="middle" font-size="6.9" fill="#4e4e4e" font-family="Liberation Sans">Summerstown</text>
<text x="323.5" y="394.1" text-anchor="middle" font-size="6.9" fill="#4e4e4e" font-family="Liberation Sans">Streatham</text>
<text x="10.9" y="399.6" text-anchor="middle" font-size="6.9" fill="#4e4e4e" font-family="Liberation Sans">Teddington</text>
<text x="206.6" y="415.1" text-anchor="middle" font-size="6.9" fill="#4e4e4e" font-family="Liberation Sans">Wimbledon</text>
<text x="251.4" y="422.7" text-anchor="middle" font-size="6.9" fill="#4e4e4e" font-family="Liberation Sans">Collier's Wood</text>
<text x="114.2" y="420.2" text-anchor="middle" font-size="6.9" fill="#4e4e4e" font-family="Liberation Sans">Coombe</text>
<text x="235.1" y="432.7" text-anchor="middle" font-size="6.9" fill="#4e4e4e" font-family="Liberation Sans">Merton</text>
<text x="51.6" y="440.1" text-anchor="middle" font-size="6.9" fill="#4e4e4e" font-family="Liberation Sans">Kingston upon</text>
<text x="51.6" y="449.1" text-anchor="middle" font-size="6.9" fill="#4e4e4e" font-family="Liberation Sans">Thames</text>
<text x="168.5" y="442.3" text-anchor="middle" font-size="6.9" fill="#4e4e4e" font-family="Liberation Sans">Raynes Park</text>
<text x="214.7" y="448.5" text-anchor="middle" font-size="6.9" fill="#4e4e4e" font-family="Liberation Sans">Merton Park</text>
<text x="116.9" y="455.0" text-anchor="middle" font-size="6.9" fill="#4e4e4e" font-family="Liberation Sans">New Malden</text>
<text x="277.2" y="453.7" text-anchor="middle" font-size="6.9" fill="#4e4e4e" font-family="Liberation Sans">Mitcham</text>
<text x="225.6" y="466.7" text-anchor="middle" font-size="6.9" fill="#4e4e4e" font-family="Liberation Sans">Morden</text>
<text x="320.7" y="468.1" text-anchor="middle" font-size="6.9" fill="#4e4e4e" font-family="Liberation Sans">Pollards Hill</text>
<text x="157.7" y="474.1" text-anchor="middle" font-size="6.9" fill="#4e4e4e" font-family="Liberation Sans">West Barnes</text>
<text x="84.3" y="483.8" text-anchor="middle" font-size="6.9" fill="#4e4e4e" font-family="Liberation Sans">Berrylands</text>
<text x="138.6" y="490.6" text-anchor="middle" font-size="6.9" fill="#4e4e4e" font-family="Liberation Sans">Motspur Park</text>
<text x="187.6" y="493.9" text-anchor="middle" font-size="6.9" fill="#4e4e4e" font-family="Liberation Sans">Lower Morden</text>
<text x="16.3" y="495.3" text-anchor="middle" font-size="6.9" fill="#4e4e4e" font-family="Liberation Sans">Thames Ditton</text>
<text x="266.4" y="399.6" text-anchor="middle" font-size="9.24" fill="#4e4e4e" font-family="Liberation Sans">Tooting</text>
<text x="518.1" y="262.9" text-anchor="middle" font-size="6.9" fill="#4e4e4e" font-family="Liberation Sans">Greenwich</text>
<text x="583.3" y="262.0" text-anchor="middle" font-size="6.9" fill="#4e4e4e" font-family="Liberation Sans">Charlton</text>
<text x="624.1" y="261.5" text-anchor="middle" font-size="6.9" fill="#4e4e4e" font-family="Liberation Sans">Woolwich</text>
<text x="662.2" y="266.9" text-anchor="middle" font-size="6.9" fill="#4e4e4e" font-family="Liberation Sans">Plum</text>
<text x="383.6" y="281.9" text-anchor="middle" font-size="6.9" fill="#4e4e4e" font-family="Liberation Sans">Camberwell</text>
<text x="418.9" y="284.6" text-anchor="middle" font-size="6.9" fill="#4e4e4e" font-family="Liberation Sans">Peckham</text>
<text x="455.6" y="277.8" text-anchor="middle" font-size="6.9" fill="#4e4e4e" font-family="Liberation Sans">New Cross</text>
<text x="455.6" y="285.4" text-anchor="middle" font-size="6.9" fill="#4e4e4e" font-family="Liberation Sans">Gate</text>
<text x="493.7" y="279.2" text-anchor="middle" font-size="6.9" fill="#4e4e4e" font-family="Liberation Sans">Deptford</text>
<text x="368.6" y="294.1" text-anchor="middle" font-size="6.9" fill="#4e4e4e" font-family="Liberation Sans">Loughborough</text>
<text x="368.6" y="300.9" text-anchor="middle" font-size="6.9" fill="#4e4e4e" font-family="Liberation Sans">Junction</text>
<text x="344.2" y="309.1" text-anchor="middle" font-size="6.9" fill="#4e4e4e" font-family="Liberation Sans">Brixton</text>
<text x="539.9" y="302.3" text-anchor="middle" font-size="6.9" fill="#4e4e4e" font-family="Liberation Sans">Blackheath</text>
<text x="629.6" y="295.5" text-anchor="middle" font-size="6.9" fill="#4e4e4e" font-family="Liberation Sans">Shooters Hill</text>
<text x="511.3" y="312.6" text-anchor="middle" font-size="6.9" fill="#4e4e4e" font-family="Liberation Sans">Lewisham</text>
<text x="410.7" y="322.1" text-anchor="middle" font-size="6.9" fill="#4e4e4e" font-family="Liberation Sans">East Dulwich</text>
<text x="471.9" y="324.0" text-anchor="middle" font-size="6.9" fill="#4e4e4e" font-family="Liberation Sans">Brockley</text>
<text x="545.3" y="327.3" text-anchor="middle" font-size="6.9" fill="#4e4e4e" font-family="Liberation Sans">Lee</text>
<text x="607.8" y="324.6" text-anchor="middle" font-size="6.9" fill="#4e4e4e" font-family="Liberation Sans">Well Hall</text>
<text x="662.2" y="322.7" text-anchor="middle" font-size="6.9" fill="#4e4e4e" font-family="Liberation Sans">Falconwood</text>
<text x="371.3" y="330.0" text-anchor="middle" font-size="6.9" fill="#4e4e4e" font-family="Liberation Sans">Herne Hill</text>
<text x="463.8" y="343.6" text-anchor="middle" font-size="6.9" fill="#4e4e4e" font-family="Liberation Sans">Honor Oak</text>
<text x="523.6" y="343.0" text-anchor="middle" font-size="6.9" fill="#4e4e4e" font-family="Liberation Sans">Hither Green</text>
<text x="395.8" y="344.4" text-anchor="middle" font-size="6.9" fill="#4e4e4e" font-family="Liberation Sans">Dulwich Village</text>
<text x="610.5" y="341.7" text-anchor="middle" font-size="6.9" fill="#4e4e4e" font-family="Liberation Sans">Eltham</text>
<text x="651.3" y="341.7" text-anchor="middle" font-size="6.9" fill="#4e4e4e" font-family="Liberation Sans">Avery Hill</text>
<text x="496.4" y="355.3" text-anchor="middle" font-size="6.9" fill="#4e4e4e" font-family="Liberation Sans">Catford</text>
<text x="588.8" y="355.3" text-anchor="middle" font-size="6.9" fill="#4e4e4e" font-family="Liberation Sans">Middle Park</text>
<text x="368.6" y="365.3" text-anchor="middle" font-size="6.9" fill="#4e4e4e" font-family="Liberation Sans">Tulse Hill</text>
<text x="398.5" y="364.2" text-anchor="middle" font-size="6.9" fill="#4e4e4e" font-family="Liberation Sans">Dulwich</text>
<text x="442.0" y="370.2" text-anchor="middle" font-size="6.9" fill="#4e4e4e" font-family="Liberation Sans">Forest Hill</text>
<text x="518.1" y="367.5" text-anchor="middle" font-size="6.9" fill="#4e4e4e" font-family="Liberation Sans">Catford South</text>
<text x="591.5" y="376.2" text-anchor="middle" font-size="6.9" fill="#4e4e4e" font-family="Liberation Sans">Mottingham</text>
<text x="635.0" y="377.8" text-anchor="middle" font-size="6.9" fill="#4e4e4e" font-family="Liberation Sans">New Eltham</text>
<text x="365.9" y="382.5" text-anchor="middle" font-size="6.9" fill="#4e4e4e" font-family="Liberation Sans">West Norwood</text>
<text x="461.0" y="381.1" text-anchor="middle" font-size="6.9" fill="#4e4e4e" font-family="Liberation Sans">Perry Vale</text>
<text x="618.7" y="392.5" text-anchor="middle" font-size="6.9" fill="#4e4e4e" font-family="Liberation Sans">Coldharbour</text>
<text x="659.5" y="392.0" text-anchor="middle" font-size="6.9" fill="#4e4e4e" font-family="Liberation Sans">Longlands</text>
<text x="507.2" y="397.4" text-anchor="middle" font-size="6.9" fill="#4e4e4e" font-family="Liberation Sans">Southend</text>
<text x="558.9" y="419.2" text-anchor="middle" font-size="6.9" fill="#4e4e4e" font-family="Liberation Sans">Sundridge</text>
<text x="605.1" y="423.2" text-anchor="middle" font-size="6.9" fill="#4e4e4e" font-family="Liberation Sans">Elmstead</text>
<text x="417.5" y="420.5" text-anchor="middle" font-size="6.9" fill="#4e4e4e" font-family="Liberation Sans">Crystal Palace</text>
<text x="474.6" y="428.7" text-anchor="middle" font-size="6.9" fill="#4e4e4e" font-family="Liberation Sans">New Beckenham</text>
<text x="553.5" y="430.6" text-anchor="middle" font-size="6.9" fill="#4e4e4e" font-family="Liberation Sans">Plaistow</text>
<text x="645.9" y="439.5" text-anchor="middle" font-size="6.9" fill="#4e4e4e" font-family="Liberation Sans">Chislehurst</text>
<text x="432.5" y="446.3" text-anchor="middle" font-size="6.9" fill="#4e4e4e" font-family="Liberation Sans">Anerley</text>
<text x="480.1" y="451.2" text-anchor="middle" font-size="6.9" fill="#4e4e4e" font-family="Liberation Sans">Beckenham</text>
<text x="553.5" y="462.1" text-anchor="middle" font-size="6.9" fill="#4e4e4e" font-family="Liberation Sans">Bromley</text>
<text x="596.9" y="464.3" text-anchor="middle" font-size="6.9" fill="#4e4e4e" font-family="Liberation Sans">Bickley</text>
<text x="374.1" y="470.3" text-anchor="middle" font-size="6.9" fill="#4e4e4e" font-family="Liberation Sans">Thornton Heath</text>
<text x="463.8" y="469.7" text-anchor="middle" font-size="6.9" fill="#4e4e4e" font-family="Liberation Sans">Elmers End</text>
<text x="387.6" y="492.5" text-anchor="middle" font-size="6.9" fill="#4e4e4e" font-family="Liberation Sans">Selhurst</text>
<text x="425.7" y="494.2" text-anchor="middle" font-size="6.9" fill="#4e4e4e" font-family="Liberation Sans">Woodside</text>
<text x="471.9" y="485.7" text-anchor="middle" font-size="6.9" fill="#4e4e4e" font-family="Liberation Sans">Upper Elmers</text>
<text x="471.9" y="492.5" text-anchor="middle" font-size="6.9" fill="#4e4e4e" font-family="Liberation Sans">End</text>
<text x="507.2" y="498.0" text-anchor="middle" font-size="6.9" fill="#4e4e4e" font-family="Liberation Sans">Park Langley</text>
<text x="596.9" y="493.4" text-anchor="middle" font-size="6.9" fill="#4e4e4e" font-family="Liberation Sans">Southborough</text>
<text x="648.6" y="491.2" text-anchor="middle" font-size="6.9" fill="#4e4e4e" font-family="Liberation Sans">Petts Wood</text>
<text x="446.1" y="402.0" text-anchor="middle" font-size="9.24" fill="#4e4e4e" font-family="Liberation Sans">Sydenham</text>
<text x="560.2" y="389.3" text-anchor="middle" font-size="9.24" fill="#4e4e4e" font-family="Liberation Sans">Grove Park</text>
<polygon points="103.0,283.0 180.0,101.0 296.0,58.7 431.6,66.4 539.4,124.6 599.0,232.0 617.4,361.7 583.0,452.0 452.0,481.0 223.0,469.5" fill="rgba(207,66,66,0.3)" stroke="#c8393a" stroke-width="3" stroke-linejoin="miter"/>
</svg>
<div class="a" style="left:548.2px;top:472.2px;width:15.8px;height:14.5px;background:#fff;border-radius:3px 3px 0 0"></div>
<div class="a" style="left:548.2px;top:488.9px;width:15.8px;height:15.0px;background:#fff;border-radius:0 0 3px 3px"></div>
<div class="a" style="left:506.1px;width:100px;text-align:center;top:473.8px;font-size:12px;line-height:12px;color:#333;font-weight:normal;">+</div>
<div class="a" style="left:506.1px;width:100px;text-align:center;top:489.8px;font-size:12px;line-height:12px;color:#333;font-weight:normal;">−</div>
<div class="a" style="left:570.0px;top:471.9px;width:94.0px;height:20.4px;background:#fff;border-radius:4px;box-shadow:0 0 1px rgba(0,0,0,.2)"></div>
<div class="a" style="left:577.9px;top:476.9px;font-size:10.1px;line-height:10.1px;color:#3b4160;font-weight:normal;">OSM standard</div>
<svg class="a" style="left:648px;top:478px" width="10" height="8"><path d="M1.3,1.9 L4.8,5.5 L8.3,1.9" fill="none" stroke="#b0b4c0" stroke-width="1"/></svg>
<div class="a" style="left:457.3px;top:745.6px;width:187.7px;height:3.6px;background:#c00000"></div>
</body></html>
